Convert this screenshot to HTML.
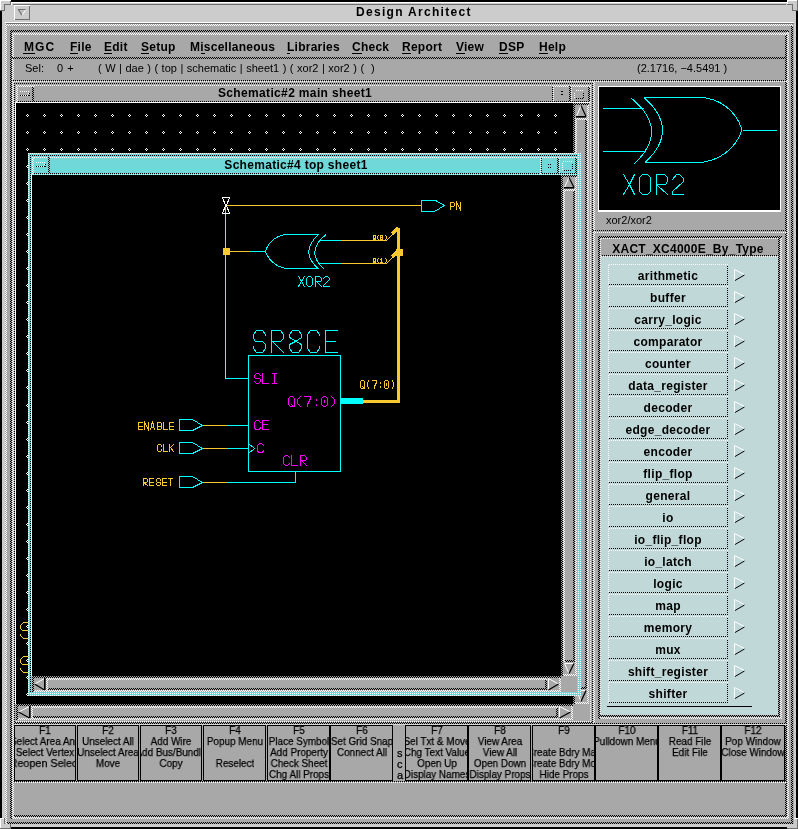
<!DOCTYPE html>
<html><head><meta charset="utf-8"><style>
html,body{margin:0;padding:0;background:#000;width:798px;height:829px;overflow:hidden}
body>div,body>span,body>svg{position:absolute;display:block}
span{font-family:"Liberation Sans",sans-serif;white-space:pre;will-change:transform}
svg{overflow:visible}
</style></head><body>
<div style="left:2px;top:2px;width:794px;height:825px;background:#cccccc;"></div>
<div style="left:11px;top:2px;width:776px;height:1px;background:#ffffff;"></div>
<div style="left:11px;top:2px;width:1px;height:3px;background:#ffffff;"></div>
<div style="left:13px;top:4px;width:773px;height:1px;background:#6e6e6e;"></div>
<div style="left:5px;top:22px;width:789px;height:1px;background:#ffffff;"></div>
<div style="left:6px;top:23px;width:788px;height:1px;background:#6e6e6e;"></div>
<div style="left:0px;top:0px;width:11px;height:11px;background:#cccccc;"></div>
<div style="left:0px;top:0px;width:11px;height:1px;background:#ffffff;"></div>
<div style="left:0px;top:0px;width:1px;height:11px;background:#ffffff;"></div>
<div style="left:11px;top:0px;width:0px;height:0px;background:#000000;"></div>
<div style="left:5px;top:5px;width:6px;height:6px;background:#cccccc;"></div>
<div style="left:10px;top:1px;width:1px;height:4px;background:#6e6e6e;"></div>
<div style="left:4px;top:4px;width:7px;height:1px;background:#6e6e6e;"></div>
<div style="left:4px;top:4px;width:1px;height:7px;background:#6e6e6e;"></div>
<div style="left:0px;top:10px;width:5px;height:1px;background:#6e6e6e;"></div>
<div style="left:787px;top:0px;width:11px;height:11px;background:#cccccc;"></div>
<div style="left:787px;top:0px;width:11px;height:1px;background:#ffffff;"></div>
<div style="left:787px;top:0px;width:1px;height:5px;background:#ffffff;"></div>
<div style="left:797px;top:0px;width:1px;height:11px;background:#6e6e6e;"></div>
<div style="left:792px;top:10px;width:6px;height:1px;background:#6e6e6e;"></div>
<div style="left:792px;top:4px;width:1px;height:7px;background:#6e6e6e;"></div>
<div style="left:787px;top:4px;width:6px;height:1px;background:#6e6e6e;"></div>
<div style="left:0px;top:818px;width:11px;height:11px;background:#cccccc;"></div>
<div style="left:0px;top:818px;width:1px;height:11px;background:#ffffff;"></div>
<div style="left:0px;top:818px;width:5px;height:1px;background:#ffffff;"></div>
<div style="left:0px;top:828px;width:11px;height:1px;background:#6e6e6e;"></div>
<div style="left:10px;top:823px;width:1px;height:6px;background:#6e6e6e;"></div>
<div style="left:4px;top:818px;width:1px;height:6px;background:#6e6e6e;"></div>
<div style="left:4px;top:823px;width:7px;height:1px;background:#6e6e6e;"></div>
<div style="left:787px;top:818px;width:11px;height:11px;background:#cccccc;"></div>
<div style="left:787px;top:828px;width:11px;height:1px;background:#6e6e6e;"></div>
<div style="left:797px;top:818px;width:1px;height:11px;background:#6e6e6e;"></div>
<div style="left:787px;top:818px;width:1px;height:6px;background:#ffffff;"></div>
<div style="left:787px;top:823px;width:6px;height:1px;background:#ffffff;"></div>
<div style="left:792px;top:818px;width:6px;height:1px;background:#ffffff;"></div>
<div style="left:14px;top:5px;width:16px;height:15px;background:#cccccc;"></div>
<div style="left:14px;top:5px;width:16px;height:1px;background:#ffffff;"></div>
<div style="left:14px;top:5px;width:1px;height:15px;background:#ffffff;"></div>
<div style="left:15px;top:19px;width:15px;height:1px;background:#6e6e6e;"></div>
<div style="left:29px;top:6px;width:1px;height:14px;background:#6e6e6e;"></div>
<svg style="left:0;top:0" width="798" height="829"><path d="M18.5 9.5H25.5L22 15.5Z" fill="#c0c0c0" stroke="none"/><path d="M22 15.5L18.5 9.5H25.5" fill="none" stroke="#6e6e6e" stroke-width="1.2"/><path d="M25.5 10L22 15.5" fill="none" stroke="#fff" stroke-width="1"/></svg>
<span style="left:356px;top:6px;font-size:12px;font-weight:bold;color:#000;line-height:12px;letter-spacing:1.3px">Design Architect</span>
<div style="left:5px;top:24px;width:789px;height:800px;background:#a8a8a8;"></div>
<div style="left:5px;top:822px;width:788px;height:2px;background:repeating-conic-gradient(#000000 0 25%,transparent 0 50%) -1px 0px/2px 2px"></div>
<div style="left:791px;top:24px;width:2px;height:800px;background:repeating-conic-gradient(#000000 0 25%,transparent 0 50%) -1px 0px/2px 2px"></div>
<div style="left:5px;top:24px;width:788px;height:2px;background:repeating-conic-gradient(#ffffff 0 25%,transparent 0 50%) -1px 0px/2px 2px"></div>
<div style="left:5px;top:24px;width:2px;height:800px;background:repeating-conic-gradient(#ffffff 0 25%,transparent 0 50%) -1px 0px/2px 2px"></div>
<div style="left:10px;top:817px;width:779px;height:2px;background:repeating-conic-gradient(#ffffff 0 25%,transparent 0 50%) 0px -1px/2px 2px"></div>
<div style="left:787px;top:30px;width:2px;height:789px;background:repeating-conic-gradient(#ffffff 0 25%,transparent 0 50%) -1px 0px/2px 2px"></div>
<div style="left:10px;top:30px;width:779px;height:2px;background:repeating-conic-gradient(#000000 0 25%,transparent 0 50%) 0px 0px/2px 2px"></div>
<div style="left:10px;top:30px;width:2px;height:789px;background:repeating-conic-gradient(#000000 0 25%,transparent 0 50%) 0px 0px/2px 2px"></div>
<div style="left:12px;top:815px;width:775px;height:2px;background:repeating-conic-gradient(#000000 0 25%,transparent 0 50%) 0px -1px/2px 2px"></div>
<div style="left:785px;top:33px;width:2px;height:784px;background:repeating-conic-gradient(#000000 0 25%,transparent 0 50%) -1px -1px/2px 2px"></div>
<div style="left:12px;top:33px;width:775px;height:2px;background:repeating-conic-gradient(#ffffff 0 25%,transparent 0 50%) 0px -1px/2px 2px"></div>
<div style="left:12px;top:33px;width:2px;height:784px;background:repeating-conic-gradient(#ffffff 0 25%,transparent 0 50%) 0px -1px/2px 2px"></div>
<div style="left:12px;top:57px;width:775px;height:2px;background:repeating-conic-gradient(#000000 0 25%,transparent 0 50%) 0px -1px/2px 2px"></div>
<span style="left:24px;top:41px;font-size:12px;font-weight:bold;color:#000;line-height:12px;letter-spacing:1.1px">MGC</span>
<div style="left:23px;top:53px;width:12px;height:1px;background:#000;"></div>
<span style="left:70px;top:41px;font-size:12px;font-weight:bold;color:#000;line-height:12px;letter-spacing:0.25px">File</span>
<div style="left:70px;top:53px;width:8px;height:1px;background:#000;"></div>
<span style="left:104px;top:41px;font-size:12px;font-weight:bold;color:#000;line-height:12px;letter-spacing:0.25px">Edit</span>
<div style="left:104px;top:53px;width:8px;height:1px;background:#000;"></div>
<span style="left:141px;top:41px;font-size:12px;font-weight:bold;color:#000;line-height:12px;letter-spacing:0.25px">Setup</span>
<div style="left:141px;top:53px;width:8px;height:1px;background:#000;"></div>
<span style="left:190px;top:41px;font-size:12px;font-weight:bold;color:#000;line-height:12px;letter-spacing:0.25px">Miscellaneous</span>
<div style="left:201px;top:53px;width:4px;height:1px;background:#000;"></div>
<span style="left:287px;top:41px;font-size:12px;font-weight:bold;color:#000;line-height:12px;letter-spacing:0.25px">Libraries</span>
<div style="left:287px;top:53px;width:3px;height:1px;background:#000;"></div>
<span style="left:352px;top:41px;font-size:12px;font-weight:bold;color:#000;line-height:12px;letter-spacing:0.25px">Check</span>
<div style="left:352px;top:53px;width:10px;height:1px;background:#000;"></div>
<span style="left:402px;top:41px;font-size:12px;font-weight:bold;color:#000;line-height:12px;letter-spacing:0.25px">Report</span>
<div style="left:402px;top:53px;width:9px;height:1px;background:#000;"></div>
<span style="left:456px;top:41px;font-size:12px;font-weight:bold;color:#000;line-height:12px;letter-spacing:0.25px">View</span>
<div style="left:456px;top:53px;width:9px;height:1px;background:#000;"></div>
<span style="left:499px;top:41px;font-size:12px;font-weight:bold;color:#000;line-height:12px;letter-spacing:0.25px">DSP</span>
<div style="left:499px;top:53px;width:9px;height:1px;background:#000;"></div>
<span style="left:539px;top:41px;font-size:12px;font-weight:bold;color:#000;line-height:12px;letter-spacing:0.25px">Help</span>
<div style="left:539px;top:53px;width:9px;height:1px;background:#000;"></div>
<span style="left:25px;top:63px;font-size:11px;font-weight:normal;color:#000;line-height:11px;">Sel:</span>
<span style="left:57px;top:63px;font-size:11px;font-weight:normal;color:#000;line-height:11px;word-spacing:1px">0 +</span>
<span style="left:98px;top:63px;font-size:11px;font-weight:normal;color:#000;line-height:11px;word-spacing:0.45px">( W | dae ) ( top | schematic | sheet1 ) ( xor2 | xor2 ) (  )</span>
<span style="left:637px;top:63px;font-size:11px;font-weight:normal;color:#000;line-height:11px;">(2.1716, &#8722;4.5491 )</span>
<div style="left:12px;top:80px;width:775px;height:1px;background:repeating-conic-gradient(#000000 0 25%,transparent 0 50%) 0px 0px/2px 2px"></div>
<div style="left:12px;top:81px;width:775px;height:1px;background:repeating-conic-gradient(#ffffff 0 25%,transparent 0 50%) 0px -1px/2px 2px"></div>
<div style="left:14px;top:83px;width:579px;height:1px;background:repeating-conic-gradient(#000000 0 25%,transparent 0 50%) 0px -1px/2px 2px"></div>
<div style="left:14px;top:723px;width:579px;height:1px;background:repeating-conic-gradient(#000000 0 25%,transparent 0 50%) 0px -1px/2px 2px"></div>
<div style="left:14px;top:83px;width:1px;height:641px;background:repeating-conic-gradient(#000000 0 25%,transparent 0 50%) 0px -1px/2px 2px"></div>
<div style="left:592px;top:83px;width:1px;height:641px;background:repeating-conic-gradient(#000000 0 25%,transparent 0 50%) 0px -1px/2px 2px"></div>
<div style="left:14px;top:722px;width:579px;height:1px;background:repeating-conic-gradient(#000000 0 25%,transparent 0 50%) 0px 0px/2px 2px"></div>
<div style="left:16px;top:85px;width:575px;height:1px;background:repeating-conic-gradient(#ffffff 0 25%,transparent 0 50%) 0px -1px/2px 2px"></div>
<div style="left:16px;top:721px;width:575px;height:1px;background:repeating-conic-gradient(#ffffff 0 25%,transparent 0 50%) 0px -1px/2px 2px"></div>
<div style="left:16px;top:85px;width:1px;height:637px;background:repeating-conic-gradient(#ffffff 0 25%,transparent 0 50%) 0px -1px/2px 2px"></div>
<div style="left:590px;top:85px;width:1px;height:637px;background:repeating-conic-gradient(#ffffff 0 25%,transparent 0 50%) 0px -1px/2px 2px"></div>
<div style="left:17px;top:101px;width:17px;height:1px;background:repeating-conic-gradient(#000000 0 25%,transparent 0 50%) -1px -1px/2px 2px"></div>
<div style="left:33px;top:86px;width:1px;height:16px;background:repeating-conic-gradient(#000000 0 25%,transparent 0 50%) -1px 0px/2px 2px"></div>
<div style="left:17px;top:86px;width:17px;height:1px;background:repeating-conic-gradient(#ffffff 0 25%,transparent 0 50%) -1px 0px/2px 2px"></div>
<div style="left:17px;top:86px;width:1px;height:16px;background:repeating-conic-gradient(#ffffff 0 25%,transparent 0 50%) -1px 0px/2px 2px"></div>
<div style="left:32px;top:86px;width:1px;height:16px;background:repeating-conic-gradient(#000000 0 25%,transparent 0 50%) 0px 0px/2px 2px"></div>
<svg style="left:0;top:0" width="798" height="829" shape-rendering="crispEdges"><path d="M19.5 91.5h9v4h-9" fill="none" stroke="#fff" stroke-dasharray="1 1"/><path d="M19.5 95.5h10v-4" fill="none" stroke="#000" stroke-dasharray="1 1"/></svg>
<div style="left:17px;top:101px;width:573px;height:1px;background:repeating-conic-gradient(#000000 0 25%,transparent 0 50%) -1px -1px/2px 2px"></div>
<span style="left:144.5px;top:87px;width:300px;text-align:center;font-size:12px;font-weight:bold;color:#000;line-height:12px;letter-spacing:0.35px">Schematic#2 main sheet1</span>
<div style="left:553px;top:101px;width:18px;height:1px;background:repeating-conic-gradient(#000000 0 25%,transparent 0 50%) -1px -1px/2px 2px"></div>
<div style="left:570px;top:86px;width:1px;height:16px;background:repeating-conic-gradient(#000000 0 25%,transparent 0 50%) 0px 0px/2px 2px"></div>
<div style="left:553px;top:86px;width:18px;height:1px;background:repeating-conic-gradient(#ffffff 0 25%,transparent 0 50%) -1px 0px/2px 2px"></div>
<div style="left:553px;top:86px;width:1px;height:16px;background:repeating-conic-gradient(#ffffff 0 25%,transparent 0 50%) -1px 0px/2px 2px"></div>
<div style="left:569px;top:86px;width:1px;height:16px;background:repeating-conic-gradient(#000000 0 25%,transparent 0 50%) -1px 0px/2px 2px"></div>
<div style="left:552px;top:86px;width:1px;height:16px;background:repeating-conic-gradient(#000000 0 25%,transparent 0 50%) 0px 0px/2px 2px"></div>
<svg style="left:0;top:0" width="798" height="829" shape-rendering="crispEdges"><path d="M561.5 90.5v1M561.5 93.5v1M562.5 90.5v1M562.5 93.5v1" stroke="#000" fill="none"/></svg>
<div style="left:571px;top:101px;width:19px;height:1px;background:repeating-conic-gradient(#000000 0 25%,transparent 0 50%) -1px -1px/2px 2px"></div>
<div style="left:589px;top:86px;width:1px;height:16px;background:repeating-conic-gradient(#000000 0 25%,transparent 0 50%) -1px 0px/2px 2px"></div>
<div style="left:571px;top:86px;width:19px;height:1px;background:repeating-conic-gradient(#ffffff 0 25%,transparent 0 50%) -1px 0px/2px 2px"></div>
<div style="left:571px;top:86px;width:1px;height:16px;background:repeating-conic-gradient(#ffffff 0 25%,transparent 0 50%) -1px 0px/2px 2px"></div>
<div style="left:588px;top:86px;width:1px;height:16px;background:repeating-conic-gradient(#000000 0 25%,transparent 0 50%) 0px 0px/2px 2px"></div>
<svg style="left:0;top:0" width="798" height="829" shape-rendering="crispEdges"><path d="M574.5 97.5v-6l1-1h7" fill="none" stroke="#fff" stroke-dasharray="1 1"/><path d="M575.5 98.5h7l1-1v-6" fill="none" stroke="#000" stroke-dasharray="1 1"/></svg>
<div style="left:15px;top:102px;width:575px;height:1px;background:#ffffff;"></div>
<div style="left:15px;top:102px;width:1px;height:602px;background:#ffffff;"></div>
<div style="left:16px;top:103px;width:557px;height:601px;background:#000000;"></div>
<svg style="left:0;top:0" width="798" height="829" shape-rendering="crispEdges"><path d="M26 115h1v1h-1zM28 115h1v1h-1zM27 114h1v1h-1zM27 116h1v1h-1zM43 115h1v1h-1zM45 115h1v1h-1zM44 114h1v1h-1zM44 116h1v1h-1zM60 115h1v1h-1zM62 115h1v1h-1zM61 114h1v1h-1zM61 116h1v1h-1zM77 115h1v1h-1zM79 115h1v1h-1zM78 114h1v1h-1zM78 116h1v1h-1zM94 115h1v1h-1zM96 115h1v1h-1zM95 114h1v1h-1zM95 116h1v1h-1zM111 115h1v1h-1zM113 115h1v1h-1zM112 114h1v1h-1zM112 116h1v1h-1zM128 115h1v1h-1zM130 115h1v1h-1zM129 114h1v1h-1zM129 116h1v1h-1zM145 115h1v1h-1zM147 115h1v1h-1zM146 114h1v1h-1zM146 116h1v1h-1zM162 115h1v1h-1zM164 115h1v1h-1zM163 114h1v1h-1zM163 116h1v1h-1zM179 115h1v1h-1zM181 115h1v1h-1zM180 114h1v1h-1zM180 116h1v1h-1zM196 115h1v1h-1zM198 115h1v1h-1zM197 114h1v1h-1zM197 116h1v1h-1zM213 115h1v1h-1zM215 115h1v1h-1zM214 114h1v1h-1zM214 116h1v1h-1zM230 115h1v1h-1zM232 115h1v1h-1zM231 114h1v1h-1zM231 116h1v1h-1zM248 115h1v1h-1zM250 115h1v1h-1zM249 114h1v1h-1zM249 116h1v1h-1zM265 115h1v1h-1zM267 115h1v1h-1zM266 114h1v1h-1zM266 116h1v1h-1zM282 115h1v1h-1zM284 115h1v1h-1zM283 114h1v1h-1zM283 116h1v1h-1zM299 115h1v1h-1zM301 115h1v1h-1zM300 114h1v1h-1zM300 116h1v1h-1zM316 115h1v1h-1zM318 115h1v1h-1zM317 114h1v1h-1zM317 116h1v1h-1zM333 115h1v1h-1zM335 115h1v1h-1zM334 114h1v1h-1zM334 116h1v1h-1zM350 115h1v1h-1zM352 115h1v1h-1zM351 114h1v1h-1zM351 116h1v1h-1zM367 115h1v1h-1zM369 115h1v1h-1zM368 114h1v1h-1zM368 116h1v1h-1zM384 115h1v1h-1zM386 115h1v1h-1zM385 114h1v1h-1zM385 116h1v1h-1zM401 115h1v1h-1zM403 115h1v1h-1zM402 114h1v1h-1zM402 116h1v1h-1zM418 115h1v1h-1zM420 115h1v1h-1zM419 114h1v1h-1zM419 116h1v1h-1zM435 115h1v1h-1zM437 115h1v1h-1zM436 114h1v1h-1zM436 116h1v1h-1zM452 115h1v1h-1zM454 115h1v1h-1zM453 114h1v1h-1zM453 116h1v1h-1zM469 115h1v1h-1zM471 115h1v1h-1zM470 114h1v1h-1zM470 116h1v1h-1zM486 115h1v1h-1zM488 115h1v1h-1zM487 114h1v1h-1zM487 116h1v1h-1zM503 115h1v1h-1zM505 115h1v1h-1zM504 114h1v1h-1zM504 116h1v1h-1zM520 115h1v1h-1zM522 115h1v1h-1zM521 114h1v1h-1zM521 116h1v1h-1zM537 115h1v1h-1zM539 115h1v1h-1zM538 114h1v1h-1zM538 116h1v1h-1zM554 115h1v1h-1zM556 115h1v1h-1zM555 114h1v1h-1zM555 116h1v1h-1zM26 132h1v1h-1zM28 132h1v1h-1zM27 131h1v1h-1zM27 133h1v1h-1zM43 132h1v1h-1zM45 132h1v1h-1zM44 131h1v1h-1zM44 133h1v1h-1zM60 132h1v1h-1zM62 132h1v1h-1zM61 131h1v1h-1zM61 133h1v1h-1zM77 132h1v1h-1zM79 132h1v1h-1zM78 131h1v1h-1zM78 133h1v1h-1zM94 132h1v1h-1zM96 132h1v1h-1zM95 131h1v1h-1zM95 133h1v1h-1zM111 132h1v1h-1zM113 132h1v1h-1zM112 131h1v1h-1zM112 133h1v1h-1zM128 132h1v1h-1zM130 132h1v1h-1zM129 131h1v1h-1zM129 133h1v1h-1zM145 132h1v1h-1zM147 132h1v1h-1zM146 131h1v1h-1zM146 133h1v1h-1zM162 132h1v1h-1zM164 132h1v1h-1zM163 131h1v1h-1zM163 133h1v1h-1zM179 132h1v1h-1zM181 132h1v1h-1zM180 131h1v1h-1zM180 133h1v1h-1zM196 132h1v1h-1zM198 132h1v1h-1zM197 131h1v1h-1zM197 133h1v1h-1zM213 132h1v1h-1zM215 132h1v1h-1zM214 131h1v1h-1zM214 133h1v1h-1zM230 132h1v1h-1zM232 132h1v1h-1zM231 131h1v1h-1zM231 133h1v1h-1zM248 132h1v1h-1zM250 132h1v1h-1zM249 131h1v1h-1zM249 133h1v1h-1zM265 132h1v1h-1zM267 132h1v1h-1zM266 131h1v1h-1zM266 133h1v1h-1zM282 132h1v1h-1zM284 132h1v1h-1zM283 131h1v1h-1zM283 133h1v1h-1zM299 132h1v1h-1zM301 132h1v1h-1zM300 131h1v1h-1zM300 133h1v1h-1zM316 132h1v1h-1zM318 132h1v1h-1zM317 131h1v1h-1zM317 133h1v1h-1zM333 132h1v1h-1zM335 132h1v1h-1zM334 131h1v1h-1zM334 133h1v1h-1zM350 132h1v1h-1zM352 132h1v1h-1zM351 131h1v1h-1zM351 133h1v1h-1zM367 132h1v1h-1zM369 132h1v1h-1zM368 131h1v1h-1zM368 133h1v1h-1zM384 132h1v1h-1zM386 132h1v1h-1zM385 131h1v1h-1zM385 133h1v1h-1zM401 132h1v1h-1zM403 132h1v1h-1zM402 131h1v1h-1zM402 133h1v1h-1zM418 132h1v1h-1zM420 132h1v1h-1zM419 131h1v1h-1zM419 133h1v1h-1zM435 132h1v1h-1zM437 132h1v1h-1zM436 131h1v1h-1zM436 133h1v1h-1zM452 132h1v1h-1zM454 132h1v1h-1zM453 131h1v1h-1zM453 133h1v1h-1zM469 132h1v1h-1zM471 132h1v1h-1zM470 131h1v1h-1zM470 133h1v1h-1zM486 132h1v1h-1zM488 132h1v1h-1zM487 131h1v1h-1zM487 133h1v1h-1zM503 132h1v1h-1zM505 132h1v1h-1zM504 131h1v1h-1zM504 133h1v1h-1zM520 132h1v1h-1zM522 132h1v1h-1zM521 131h1v1h-1zM521 133h1v1h-1zM537 132h1v1h-1zM539 132h1v1h-1zM538 131h1v1h-1zM538 133h1v1h-1zM554 132h1v1h-1zM556 132h1v1h-1zM555 131h1v1h-1zM555 133h1v1h-1zM26 149h1v1h-1zM28 149h1v1h-1zM27 148h1v1h-1zM27 150h1v1h-1zM43 149h1v1h-1zM45 149h1v1h-1zM44 148h1v1h-1zM44 150h1v1h-1zM60 149h1v1h-1zM62 149h1v1h-1zM61 148h1v1h-1zM61 150h1v1h-1zM77 149h1v1h-1zM79 149h1v1h-1zM78 148h1v1h-1zM78 150h1v1h-1zM94 149h1v1h-1zM96 149h1v1h-1zM95 148h1v1h-1zM95 150h1v1h-1zM111 149h1v1h-1zM113 149h1v1h-1zM112 148h1v1h-1zM112 150h1v1h-1zM128 149h1v1h-1zM130 149h1v1h-1zM129 148h1v1h-1zM129 150h1v1h-1zM145 149h1v1h-1zM147 149h1v1h-1zM146 148h1v1h-1zM146 150h1v1h-1zM162 149h1v1h-1zM164 149h1v1h-1zM163 148h1v1h-1zM163 150h1v1h-1zM179 149h1v1h-1zM181 149h1v1h-1zM180 148h1v1h-1zM180 150h1v1h-1zM196 149h1v1h-1zM198 149h1v1h-1zM197 148h1v1h-1zM197 150h1v1h-1zM213 149h1v1h-1zM215 149h1v1h-1zM214 148h1v1h-1zM214 150h1v1h-1zM230 149h1v1h-1zM232 149h1v1h-1zM231 148h1v1h-1zM231 150h1v1h-1zM248 149h1v1h-1zM250 149h1v1h-1zM249 148h1v1h-1zM249 150h1v1h-1zM265 149h1v1h-1zM267 149h1v1h-1zM266 148h1v1h-1zM266 150h1v1h-1zM282 149h1v1h-1zM284 149h1v1h-1zM283 148h1v1h-1zM283 150h1v1h-1zM299 149h1v1h-1zM301 149h1v1h-1zM300 148h1v1h-1zM300 150h1v1h-1zM316 149h1v1h-1zM318 149h1v1h-1zM317 148h1v1h-1zM317 150h1v1h-1zM333 149h1v1h-1zM335 149h1v1h-1zM334 148h1v1h-1zM334 150h1v1h-1zM350 149h1v1h-1zM352 149h1v1h-1zM351 148h1v1h-1zM351 150h1v1h-1zM367 149h1v1h-1zM369 149h1v1h-1zM368 148h1v1h-1zM368 150h1v1h-1zM384 149h1v1h-1zM386 149h1v1h-1zM385 148h1v1h-1zM385 150h1v1h-1zM401 149h1v1h-1zM403 149h1v1h-1zM402 148h1v1h-1zM402 150h1v1h-1zM418 149h1v1h-1zM420 149h1v1h-1zM419 148h1v1h-1zM419 150h1v1h-1zM435 149h1v1h-1zM437 149h1v1h-1zM436 148h1v1h-1zM436 150h1v1h-1zM452 149h1v1h-1zM454 149h1v1h-1zM453 148h1v1h-1zM453 150h1v1h-1zM469 149h1v1h-1zM471 149h1v1h-1zM470 148h1v1h-1zM470 150h1v1h-1zM486 149h1v1h-1zM488 149h1v1h-1zM487 148h1v1h-1zM487 150h1v1h-1zM503 149h1v1h-1zM505 149h1v1h-1zM504 148h1v1h-1zM504 150h1v1h-1zM520 149h1v1h-1zM522 149h1v1h-1zM521 148h1v1h-1zM521 150h1v1h-1zM537 149h1v1h-1zM539 149h1v1h-1zM538 148h1v1h-1zM538 150h1v1h-1zM554 149h1v1h-1zM556 149h1v1h-1zM555 148h1v1h-1zM555 150h1v1h-1zM26 166h1v1h-1zM28 166h1v1h-1zM27 165h1v1h-1zM27 167h1v1h-1zM43 166h1v1h-1zM45 166h1v1h-1zM44 165h1v1h-1zM44 167h1v1h-1zM60 166h1v1h-1zM62 166h1v1h-1zM61 165h1v1h-1zM61 167h1v1h-1zM77 166h1v1h-1zM79 166h1v1h-1zM78 165h1v1h-1zM78 167h1v1h-1zM94 166h1v1h-1zM96 166h1v1h-1zM95 165h1v1h-1zM95 167h1v1h-1zM111 166h1v1h-1zM113 166h1v1h-1zM112 165h1v1h-1zM112 167h1v1h-1zM128 166h1v1h-1zM130 166h1v1h-1zM129 165h1v1h-1zM129 167h1v1h-1zM145 166h1v1h-1zM147 166h1v1h-1zM146 165h1v1h-1zM146 167h1v1h-1zM162 166h1v1h-1zM164 166h1v1h-1zM163 165h1v1h-1zM163 167h1v1h-1zM179 166h1v1h-1zM181 166h1v1h-1zM180 165h1v1h-1zM180 167h1v1h-1zM196 166h1v1h-1zM198 166h1v1h-1zM197 165h1v1h-1zM197 167h1v1h-1zM213 166h1v1h-1zM215 166h1v1h-1zM214 165h1v1h-1zM214 167h1v1h-1zM230 166h1v1h-1zM232 166h1v1h-1zM231 165h1v1h-1zM231 167h1v1h-1zM248 166h1v1h-1zM250 166h1v1h-1zM249 165h1v1h-1zM249 167h1v1h-1zM265 166h1v1h-1zM267 166h1v1h-1zM266 165h1v1h-1zM266 167h1v1h-1zM282 166h1v1h-1zM284 166h1v1h-1zM283 165h1v1h-1zM283 167h1v1h-1zM299 166h1v1h-1zM301 166h1v1h-1zM300 165h1v1h-1zM300 167h1v1h-1zM316 166h1v1h-1zM318 166h1v1h-1zM317 165h1v1h-1zM317 167h1v1h-1zM333 166h1v1h-1zM335 166h1v1h-1zM334 165h1v1h-1zM334 167h1v1h-1zM350 166h1v1h-1zM352 166h1v1h-1zM351 165h1v1h-1zM351 167h1v1h-1zM367 166h1v1h-1zM369 166h1v1h-1zM368 165h1v1h-1zM368 167h1v1h-1zM384 166h1v1h-1zM386 166h1v1h-1zM385 165h1v1h-1zM385 167h1v1h-1zM401 166h1v1h-1zM403 166h1v1h-1zM402 165h1v1h-1zM402 167h1v1h-1zM418 166h1v1h-1zM420 166h1v1h-1zM419 165h1v1h-1zM419 167h1v1h-1zM435 166h1v1h-1zM437 166h1v1h-1zM436 165h1v1h-1zM436 167h1v1h-1zM452 166h1v1h-1zM454 166h1v1h-1zM453 165h1v1h-1zM453 167h1v1h-1zM469 166h1v1h-1zM471 166h1v1h-1zM470 165h1v1h-1zM470 167h1v1h-1zM486 166h1v1h-1zM488 166h1v1h-1zM487 165h1v1h-1zM487 167h1v1h-1zM503 166h1v1h-1zM505 166h1v1h-1zM504 165h1v1h-1zM504 167h1v1h-1zM520 166h1v1h-1zM522 166h1v1h-1zM521 165h1v1h-1zM521 167h1v1h-1zM537 166h1v1h-1zM539 166h1v1h-1zM538 165h1v1h-1zM538 167h1v1h-1zM554 166h1v1h-1zM556 166h1v1h-1zM555 165h1v1h-1zM555 167h1v1h-1zM26 183h1v1h-1zM28 183h1v1h-1zM27 182h1v1h-1zM27 184h1v1h-1zM43 183h1v1h-1zM45 183h1v1h-1zM44 182h1v1h-1zM44 184h1v1h-1zM60 183h1v1h-1zM62 183h1v1h-1zM61 182h1v1h-1zM61 184h1v1h-1zM77 183h1v1h-1zM79 183h1v1h-1zM78 182h1v1h-1zM78 184h1v1h-1zM94 183h1v1h-1zM96 183h1v1h-1zM95 182h1v1h-1zM95 184h1v1h-1zM111 183h1v1h-1zM113 183h1v1h-1zM112 182h1v1h-1zM112 184h1v1h-1zM128 183h1v1h-1zM130 183h1v1h-1zM129 182h1v1h-1zM129 184h1v1h-1zM145 183h1v1h-1zM147 183h1v1h-1zM146 182h1v1h-1zM146 184h1v1h-1zM162 183h1v1h-1zM164 183h1v1h-1zM163 182h1v1h-1zM163 184h1v1h-1zM179 183h1v1h-1zM181 183h1v1h-1zM180 182h1v1h-1zM180 184h1v1h-1zM196 183h1v1h-1zM198 183h1v1h-1zM197 182h1v1h-1zM197 184h1v1h-1zM213 183h1v1h-1zM215 183h1v1h-1zM214 182h1v1h-1zM214 184h1v1h-1zM230 183h1v1h-1zM232 183h1v1h-1zM231 182h1v1h-1zM231 184h1v1h-1zM248 183h1v1h-1zM250 183h1v1h-1zM249 182h1v1h-1zM249 184h1v1h-1zM265 183h1v1h-1zM267 183h1v1h-1zM266 182h1v1h-1zM266 184h1v1h-1zM282 183h1v1h-1zM284 183h1v1h-1zM283 182h1v1h-1zM283 184h1v1h-1zM299 183h1v1h-1zM301 183h1v1h-1zM300 182h1v1h-1zM300 184h1v1h-1zM316 183h1v1h-1zM318 183h1v1h-1zM317 182h1v1h-1zM317 184h1v1h-1zM333 183h1v1h-1zM335 183h1v1h-1zM334 182h1v1h-1zM334 184h1v1h-1zM350 183h1v1h-1zM352 183h1v1h-1zM351 182h1v1h-1zM351 184h1v1h-1zM367 183h1v1h-1zM369 183h1v1h-1zM368 182h1v1h-1zM368 184h1v1h-1zM384 183h1v1h-1zM386 183h1v1h-1zM385 182h1v1h-1zM385 184h1v1h-1zM401 183h1v1h-1zM403 183h1v1h-1zM402 182h1v1h-1zM402 184h1v1h-1zM418 183h1v1h-1zM420 183h1v1h-1zM419 182h1v1h-1zM419 184h1v1h-1zM435 183h1v1h-1zM437 183h1v1h-1zM436 182h1v1h-1zM436 184h1v1h-1zM452 183h1v1h-1zM454 183h1v1h-1zM453 182h1v1h-1zM453 184h1v1h-1zM469 183h1v1h-1zM471 183h1v1h-1zM470 182h1v1h-1zM470 184h1v1h-1zM486 183h1v1h-1zM488 183h1v1h-1zM487 182h1v1h-1zM487 184h1v1h-1zM503 183h1v1h-1zM505 183h1v1h-1zM504 182h1v1h-1zM504 184h1v1h-1zM520 183h1v1h-1zM522 183h1v1h-1zM521 182h1v1h-1zM521 184h1v1h-1zM537 183h1v1h-1zM539 183h1v1h-1zM538 182h1v1h-1zM538 184h1v1h-1zM554 183h1v1h-1zM556 183h1v1h-1zM555 182h1v1h-1zM555 184h1v1h-1zM26 200h1v1h-1zM28 200h1v1h-1zM27 199h1v1h-1zM27 201h1v1h-1zM43 200h1v1h-1zM45 200h1v1h-1zM44 199h1v1h-1zM44 201h1v1h-1zM60 200h1v1h-1zM62 200h1v1h-1zM61 199h1v1h-1zM61 201h1v1h-1zM77 200h1v1h-1zM79 200h1v1h-1zM78 199h1v1h-1zM78 201h1v1h-1zM94 200h1v1h-1zM96 200h1v1h-1zM95 199h1v1h-1zM95 201h1v1h-1zM111 200h1v1h-1zM113 200h1v1h-1zM112 199h1v1h-1zM112 201h1v1h-1zM128 200h1v1h-1zM130 200h1v1h-1zM129 199h1v1h-1zM129 201h1v1h-1zM145 200h1v1h-1zM147 200h1v1h-1zM146 199h1v1h-1zM146 201h1v1h-1zM162 200h1v1h-1zM164 200h1v1h-1zM163 199h1v1h-1zM163 201h1v1h-1zM179 200h1v1h-1zM181 200h1v1h-1zM180 199h1v1h-1zM180 201h1v1h-1zM196 200h1v1h-1zM198 200h1v1h-1zM197 199h1v1h-1zM197 201h1v1h-1zM213 200h1v1h-1zM215 200h1v1h-1zM214 199h1v1h-1zM214 201h1v1h-1zM230 200h1v1h-1zM232 200h1v1h-1zM231 199h1v1h-1zM231 201h1v1h-1zM248 200h1v1h-1zM250 200h1v1h-1zM249 199h1v1h-1zM249 201h1v1h-1zM265 200h1v1h-1zM267 200h1v1h-1zM266 199h1v1h-1zM266 201h1v1h-1zM282 200h1v1h-1zM284 200h1v1h-1zM283 199h1v1h-1zM283 201h1v1h-1zM299 200h1v1h-1zM301 200h1v1h-1zM300 199h1v1h-1zM300 201h1v1h-1zM316 200h1v1h-1zM318 200h1v1h-1zM317 199h1v1h-1zM317 201h1v1h-1zM333 200h1v1h-1zM335 200h1v1h-1zM334 199h1v1h-1zM334 201h1v1h-1zM350 200h1v1h-1zM352 200h1v1h-1zM351 199h1v1h-1zM351 201h1v1h-1zM367 200h1v1h-1zM369 200h1v1h-1zM368 199h1v1h-1zM368 201h1v1h-1zM384 200h1v1h-1zM386 200h1v1h-1zM385 199h1v1h-1zM385 201h1v1h-1zM401 200h1v1h-1zM403 200h1v1h-1zM402 199h1v1h-1zM402 201h1v1h-1zM418 200h1v1h-1zM420 200h1v1h-1zM419 199h1v1h-1zM419 201h1v1h-1zM435 200h1v1h-1zM437 200h1v1h-1zM436 199h1v1h-1zM436 201h1v1h-1zM452 200h1v1h-1zM454 200h1v1h-1zM453 199h1v1h-1zM453 201h1v1h-1zM469 200h1v1h-1zM471 200h1v1h-1zM470 199h1v1h-1zM470 201h1v1h-1zM486 200h1v1h-1zM488 200h1v1h-1zM487 199h1v1h-1zM487 201h1v1h-1zM503 200h1v1h-1zM505 200h1v1h-1zM504 199h1v1h-1zM504 201h1v1h-1zM520 200h1v1h-1zM522 200h1v1h-1zM521 199h1v1h-1zM521 201h1v1h-1zM537 200h1v1h-1zM539 200h1v1h-1zM538 199h1v1h-1zM538 201h1v1h-1zM554 200h1v1h-1zM556 200h1v1h-1zM555 199h1v1h-1zM555 201h1v1h-1zM26 217h1v1h-1zM28 217h1v1h-1zM27 216h1v1h-1zM27 218h1v1h-1zM43 217h1v1h-1zM45 217h1v1h-1zM44 216h1v1h-1zM44 218h1v1h-1zM60 217h1v1h-1zM62 217h1v1h-1zM61 216h1v1h-1zM61 218h1v1h-1zM77 217h1v1h-1zM79 217h1v1h-1zM78 216h1v1h-1zM78 218h1v1h-1zM94 217h1v1h-1zM96 217h1v1h-1zM95 216h1v1h-1zM95 218h1v1h-1zM111 217h1v1h-1zM113 217h1v1h-1zM112 216h1v1h-1zM112 218h1v1h-1zM128 217h1v1h-1zM130 217h1v1h-1zM129 216h1v1h-1zM129 218h1v1h-1zM145 217h1v1h-1zM147 217h1v1h-1zM146 216h1v1h-1zM146 218h1v1h-1zM162 217h1v1h-1zM164 217h1v1h-1zM163 216h1v1h-1zM163 218h1v1h-1zM179 217h1v1h-1zM181 217h1v1h-1zM180 216h1v1h-1zM180 218h1v1h-1zM196 217h1v1h-1zM198 217h1v1h-1zM197 216h1v1h-1zM197 218h1v1h-1zM213 217h1v1h-1zM215 217h1v1h-1zM214 216h1v1h-1zM214 218h1v1h-1zM230 217h1v1h-1zM232 217h1v1h-1zM231 216h1v1h-1zM231 218h1v1h-1zM248 217h1v1h-1zM250 217h1v1h-1zM249 216h1v1h-1zM249 218h1v1h-1zM265 217h1v1h-1zM267 217h1v1h-1zM266 216h1v1h-1zM266 218h1v1h-1zM282 217h1v1h-1zM284 217h1v1h-1zM283 216h1v1h-1zM283 218h1v1h-1zM299 217h1v1h-1zM301 217h1v1h-1zM300 216h1v1h-1zM300 218h1v1h-1zM316 217h1v1h-1zM318 217h1v1h-1zM317 216h1v1h-1zM317 218h1v1h-1zM333 217h1v1h-1zM335 217h1v1h-1zM334 216h1v1h-1zM334 218h1v1h-1zM350 217h1v1h-1zM352 217h1v1h-1zM351 216h1v1h-1zM351 218h1v1h-1zM367 217h1v1h-1zM369 217h1v1h-1zM368 216h1v1h-1zM368 218h1v1h-1zM384 217h1v1h-1zM386 217h1v1h-1zM385 216h1v1h-1zM385 218h1v1h-1zM401 217h1v1h-1zM403 217h1v1h-1zM402 216h1v1h-1zM402 218h1v1h-1zM418 217h1v1h-1zM420 217h1v1h-1zM419 216h1v1h-1zM419 218h1v1h-1zM435 217h1v1h-1zM437 217h1v1h-1zM436 216h1v1h-1zM436 218h1v1h-1zM452 217h1v1h-1zM454 217h1v1h-1zM453 216h1v1h-1zM453 218h1v1h-1zM469 217h1v1h-1zM471 217h1v1h-1zM470 216h1v1h-1zM470 218h1v1h-1zM486 217h1v1h-1zM488 217h1v1h-1zM487 216h1v1h-1zM487 218h1v1h-1zM503 217h1v1h-1zM505 217h1v1h-1zM504 216h1v1h-1zM504 218h1v1h-1zM520 217h1v1h-1zM522 217h1v1h-1zM521 216h1v1h-1zM521 218h1v1h-1zM537 217h1v1h-1zM539 217h1v1h-1zM538 216h1v1h-1zM538 218h1v1h-1zM554 217h1v1h-1zM556 217h1v1h-1zM555 216h1v1h-1zM555 218h1v1h-1zM26 234h1v1h-1zM28 234h1v1h-1zM27 233h1v1h-1zM27 235h1v1h-1zM43 234h1v1h-1zM45 234h1v1h-1zM44 233h1v1h-1zM44 235h1v1h-1zM60 234h1v1h-1zM62 234h1v1h-1zM61 233h1v1h-1zM61 235h1v1h-1zM77 234h1v1h-1zM79 234h1v1h-1zM78 233h1v1h-1zM78 235h1v1h-1zM94 234h1v1h-1zM96 234h1v1h-1zM95 233h1v1h-1zM95 235h1v1h-1zM111 234h1v1h-1zM113 234h1v1h-1zM112 233h1v1h-1zM112 235h1v1h-1zM128 234h1v1h-1zM130 234h1v1h-1zM129 233h1v1h-1zM129 235h1v1h-1zM145 234h1v1h-1zM147 234h1v1h-1zM146 233h1v1h-1zM146 235h1v1h-1zM162 234h1v1h-1zM164 234h1v1h-1zM163 233h1v1h-1zM163 235h1v1h-1zM179 234h1v1h-1zM181 234h1v1h-1zM180 233h1v1h-1zM180 235h1v1h-1zM196 234h1v1h-1zM198 234h1v1h-1zM197 233h1v1h-1zM197 235h1v1h-1zM213 234h1v1h-1zM215 234h1v1h-1zM214 233h1v1h-1zM214 235h1v1h-1zM230 234h1v1h-1zM232 234h1v1h-1zM231 233h1v1h-1zM231 235h1v1h-1zM248 234h1v1h-1zM250 234h1v1h-1zM249 233h1v1h-1zM249 235h1v1h-1zM265 234h1v1h-1zM267 234h1v1h-1zM266 233h1v1h-1zM266 235h1v1h-1zM282 234h1v1h-1zM284 234h1v1h-1zM283 233h1v1h-1zM283 235h1v1h-1zM299 234h1v1h-1zM301 234h1v1h-1zM300 233h1v1h-1zM300 235h1v1h-1zM316 234h1v1h-1zM318 234h1v1h-1zM317 233h1v1h-1zM317 235h1v1h-1zM333 234h1v1h-1zM335 234h1v1h-1zM334 233h1v1h-1zM334 235h1v1h-1zM350 234h1v1h-1zM352 234h1v1h-1zM351 233h1v1h-1zM351 235h1v1h-1zM367 234h1v1h-1zM369 234h1v1h-1zM368 233h1v1h-1zM368 235h1v1h-1zM384 234h1v1h-1zM386 234h1v1h-1zM385 233h1v1h-1zM385 235h1v1h-1zM401 234h1v1h-1zM403 234h1v1h-1zM402 233h1v1h-1zM402 235h1v1h-1zM418 234h1v1h-1zM420 234h1v1h-1zM419 233h1v1h-1zM419 235h1v1h-1zM435 234h1v1h-1zM437 234h1v1h-1zM436 233h1v1h-1zM436 235h1v1h-1zM452 234h1v1h-1zM454 234h1v1h-1zM453 233h1v1h-1zM453 235h1v1h-1zM469 234h1v1h-1zM471 234h1v1h-1zM470 233h1v1h-1zM470 235h1v1h-1zM486 234h1v1h-1zM488 234h1v1h-1zM487 233h1v1h-1zM487 235h1v1h-1zM503 234h1v1h-1zM505 234h1v1h-1zM504 233h1v1h-1zM504 235h1v1h-1zM520 234h1v1h-1zM522 234h1v1h-1zM521 233h1v1h-1zM521 235h1v1h-1zM537 234h1v1h-1zM539 234h1v1h-1zM538 233h1v1h-1zM538 235h1v1h-1zM554 234h1v1h-1zM556 234h1v1h-1zM555 233h1v1h-1zM555 235h1v1h-1zM26 251h1v1h-1zM28 251h1v1h-1zM27 250h1v1h-1zM27 252h1v1h-1zM43 251h1v1h-1zM45 251h1v1h-1zM44 250h1v1h-1zM44 252h1v1h-1zM60 251h1v1h-1zM62 251h1v1h-1zM61 250h1v1h-1zM61 252h1v1h-1zM77 251h1v1h-1zM79 251h1v1h-1zM78 250h1v1h-1zM78 252h1v1h-1zM94 251h1v1h-1zM96 251h1v1h-1zM95 250h1v1h-1zM95 252h1v1h-1zM111 251h1v1h-1zM113 251h1v1h-1zM112 250h1v1h-1zM112 252h1v1h-1zM128 251h1v1h-1zM130 251h1v1h-1zM129 250h1v1h-1zM129 252h1v1h-1zM145 251h1v1h-1zM147 251h1v1h-1zM146 250h1v1h-1zM146 252h1v1h-1zM162 251h1v1h-1zM164 251h1v1h-1zM163 250h1v1h-1zM163 252h1v1h-1zM179 251h1v1h-1zM181 251h1v1h-1zM180 250h1v1h-1zM180 252h1v1h-1zM196 251h1v1h-1zM198 251h1v1h-1zM197 250h1v1h-1zM197 252h1v1h-1zM213 251h1v1h-1zM215 251h1v1h-1zM214 250h1v1h-1zM214 252h1v1h-1zM230 251h1v1h-1zM232 251h1v1h-1zM231 250h1v1h-1zM231 252h1v1h-1zM248 251h1v1h-1zM250 251h1v1h-1zM249 250h1v1h-1zM249 252h1v1h-1zM265 251h1v1h-1zM267 251h1v1h-1zM266 250h1v1h-1zM266 252h1v1h-1zM282 251h1v1h-1zM284 251h1v1h-1zM283 250h1v1h-1zM283 252h1v1h-1zM299 251h1v1h-1zM301 251h1v1h-1zM300 250h1v1h-1zM300 252h1v1h-1zM316 251h1v1h-1zM318 251h1v1h-1zM317 250h1v1h-1zM317 252h1v1h-1zM333 251h1v1h-1zM335 251h1v1h-1zM334 250h1v1h-1zM334 252h1v1h-1zM350 251h1v1h-1zM352 251h1v1h-1zM351 250h1v1h-1zM351 252h1v1h-1zM367 251h1v1h-1zM369 251h1v1h-1zM368 250h1v1h-1zM368 252h1v1h-1zM384 251h1v1h-1zM386 251h1v1h-1zM385 250h1v1h-1zM385 252h1v1h-1zM401 251h1v1h-1zM403 251h1v1h-1zM402 250h1v1h-1zM402 252h1v1h-1zM418 251h1v1h-1zM420 251h1v1h-1zM419 250h1v1h-1zM419 252h1v1h-1zM435 251h1v1h-1zM437 251h1v1h-1zM436 250h1v1h-1zM436 252h1v1h-1zM452 251h1v1h-1zM454 251h1v1h-1zM453 250h1v1h-1zM453 252h1v1h-1zM469 251h1v1h-1zM471 251h1v1h-1zM470 250h1v1h-1zM470 252h1v1h-1zM486 251h1v1h-1zM488 251h1v1h-1zM487 250h1v1h-1zM487 252h1v1h-1zM503 251h1v1h-1zM505 251h1v1h-1zM504 250h1v1h-1zM504 252h1v1h-1zM520 251h1v1h-1zM522 251h1v1h-1zM521 250h1v1h-1zM521 252h1v1h-1zM537 251h1v1h-1zM539 251h1v1h-1zM538 250h1v1h-1zM538 252h1v1h-1zM554 251h1v1h-1zM556 251h1v1h-1zM555 250h1v1h-1zM555 252h1v1h-1zM26 268h1v1h-1zM28 268h1v1h-1zM27 267h1v1h-1zM27 269h1v1h-1zM43 268h1v1h-1zM45 268h1v1h-1zM44 267h1v1h-1zM44 269h1v1h-1zM60 268h1v1h-1zM62 268h1v1h-1zM61 267h1v1h-1zM61 269h1v1h-1zM77 268h1v1h-1zM79 268h1v1h-1zM78 267h1v1h-1zM78 269h1v1h-1zM94 268h1v1h-1zM96 268h1v1h-1zM95 267h1v1h-1zM95 269h1v1h-1zM111 268h1v1h-1zM113 268h1v1h-1zM112 267h1v1h-1zM112 269h1v1h-1zM128 268h1v1h-1zM130 268h1v1h-1zM129 267h1v1h-1zM129 269h1v1h-1zM145 268h1v1h-1zM147 268h1v1h-1zM146 267h1v1h-1zM146 269h1v1h-1zM162 268h1v1h-1zM164 268h1v1h-1zM163 267h1v1h-1zM163 269h1v1h-1zM179 268h1v1h-1zM181 268h1v1h-1zM180 267h1v1h-1zM180 269h1v1h-1zM196 268h1v1h-1zM198 268h1v1h-1zM197 267h1v1h-1zM197 269h1v1h-1zM213 268h1v1h-1zM215 268h1v1h-1zM214 267h1v1h-1zM214 269h1v1h-1zM230 268h1v1h-1zM232 268h1v1h-1zM231 267h1v1h-1zM231 269h1v1h-1zM248 268h1v1h-1zM250 268h1v1h-1zM249 267h1v1h-1zM249 269h1v1h-1zM265 268h1v1h-1zM267 268h1v1h-1zM266 267h1v1h-1zM266 269h1v1h-1zM282 268h1v1h-1zM284 268h1v1h-1zM283 267h1v1h-1zM283 269h1v1h-1zM299 268h1v1h-1zM301 268h1v1h-1zM300 267h1v1h-1zM300 269h1v1h-1zM316 268h1v1h-1zM318 268h1v1h-1zM317 267h1v1h-1zM317 269h1v1h-1zM333 268h1v1h-1zM335 268h1v1h-1zM334 267h1v1h-1zM334 269h1v1h-1zM350 268h1v1h-1zM352 268h1v1h-1zM351 267h1v1h-1zM351 269h1v1h-1zM367 268h1v1h-1zM369 268h1v1h-1zM368 267h1v1h-1zM368 269h1v1h-1zM384 268h1v1h-1zM386 268h1v1h-1zM385 267h1v1h-1zM385 269h1v1h-1zM401 268h1v1h-1zM403 268h1v1h-1zM402 267h1v1h-1zM402 269h1v1h-1zM418 268h1v1h-1zM420 268h1v1h-1zM419 267h1v1h-1zM419 269h1v1h-1zM435 268h1v1h-1zM437 268h1v1h-1zM436 267h1v1h-1zM436 269h1v1h-1zM452 268h1v1h-1zM454 268h1v1h-1zM453 267h1v1h-1zM453 269h1v1h-1zM469 268h1v1h-1zM471 268h1v1h-1zM470 267h1v1h-1zM470 269h1v1h-1zM486 268h1v1h-1zM488 268h1v1h-1zM487 267h1v1h-1zM487 269h1v1h-1zM503 268h1v1h-1zM505 268h1v1h-1zM504 267h1v1h-1zM504 269h1v1h-1zM520 268h1v1h-1zM522 268h1v1h-1zM521 267h1v1h-1zM521 269h1v1h-1zM537 268h1v1h-1zM539 268h1v1h-1zM538 267h1v1h-1zM538 269h1v1h-1zM554 268h1v1h-1zM556 268h1v1h-1zM555 267h1v1h-1zM555 269h1v1h-1zM26 285h1v1h-1zM28 285h1v1h-1zM27 284h1v1h-1zM27 286h1v1h-1zM43 285h1v1h-1zM45 285h1v1h-1zM44 284h1v1h-1zM44 286h1v1h-1zM60 285h1v1h-1zM62 285h1v1h-1zM61 284h1v1h-1zM61 286h1v1h-1zM77 285h1v1h-1zM79 285h1v1h-1zM78 284h1v1h-1zM78 286h1v1h-1zM94 285h1v1h-1zM96 285h1v1h-1zM95 284h1v1h-1zM95 286h1v1h-1zM111 285h1v1h-1zM113 285h1v1h-1zM112 284h1v1h-1zM112 286h1v1h-1zM128 285h1v1h-1zM130 285h1v1h-1zM129 284h1v1h-1zM129 286h1v1h-1zM145 285h1v1h-1zM147 285h1v1h-1zM146 284h1v1h-1zM146 286h1v1h-1zM162 285h1v1h-1zM164 285h1v1h-1zM163 284h1v1h-1zM163 286h1v1h-1zM179 285h1v1h-1zM181 285h1v1h-1zM180 284h1v1h-1zM180 286h1v1h-1zM196 285h1v1h-1zM198 285h1v1h-1zM197 284h1v1h-1zM197 286h1v1h-1zM213 285h1v1h-1zM215 285h1v1h-1zM214 284h1v1h-1zM214 286h1v1h-1zM230 285h1v1h-1zM232 285h1v1h-1zM231 284h1v1h-1zM231 286h1v1h-1zM248 285h1v1h-1zM250 285h1v1h-1zM249 284h1v1h-1zM249 286h1v1h-1zM265 285h1v1h-1zM267 285h1v1h-1zM266 284h1v1h-1zM266 286h1v1h-1zM282 285h1v1h-1zM284 285h1v1h-1zM283 284h1v1h-1zM283 286h1v1h-1zM299 285h1v1h-1zM301 285h1v1h-1zM300 284h1v1h-1zM300 286h1v1h-1zM316 285h1v1h-1zM318 285h1v1h-1zM317 284h1v1h-1zM317 286h1v1h-1zM333 285h1v1h-1zM335 285h1v1h-1zM334 284h1v1h-1zM334 286h1v1h-1zM350 285h1v1h-1zM352 285h1v1h-1zM351 284h1v1h-1zM351 286h1v1h-1zM367 285h1v1h-1zM369 285h1v1h-1zM368 284h1v1h-1zM368 286h1v1h-1zM384 285h1v1h-1zM386 285h1v1h-1zM385 284h1v1h-1zM385 286h1v1h-1zM401 285h1v1h-1zM403 285h1v1h-1zM402 284h1v1h-1zM402 286h1v1h-1zM418 285h1v1h-1zM420 285h1v1h-1zM419 284h1v1h-1zM419 286h1v1h-1zM435 285h1v1h-1zM437 285h1v1h-1zM436 284h1v1h-1zM436 286h1v1h-1zM452 285h1v1h-1zM454 285h1v1h-1zM453 284h1v1h-1zM453 286h1v1h-1zM469 285h1v1h-1zM471 285h1v1h-1zM470 284h1v1h-1zM470 286h1v1h-1zM486 285h1v1h-1zM488 285h1v1h-1zM487 284h1v1h-1zM487 286h1v1h-1zM503 285h1v1h-1zM505 285h1v1h-1zM504 284h1v1h-1zM504 286h1v1h-1zM520 285h1v1h-1zM522 285h1v1h-1zM521 284h1v1h-1zM521 286h1v1h-1zM537 285h1v1h-1zM539 285h1v1h-1zM538 284h1v1h-1zM538 286h1v1h-1zM554 285h1v1h-1zM556 285h1v1h-1zM555 284h1v1h-1zM555 286h1v1h-1zM26 302h1v1h-1zM28 302h1v1h-1zM27 301h1v1h-1zM27 303h1v1h-1zM43 302h1v1h-1zM45 302h1v1h-1zM44 301h1v1h-1zM44 303h1v1h-1zM60 302h1v1h-1zM62 302h1v1h-1zM61 301h1v1h-1zM61 303h1v1h-1zM77 302h1v1h-1zM79 302h1v1h-1zM78 301h1v1h-1zM78 303h1v1h-1zM94 302h1v1h-1zM96 302h1v1h-1zM95 301h1v1h-1zM95 303h1v1h-1zM111 302h1v1h-1zM113 302h1v1h-1zM112 301h1v1h-1zM112 303h1v1h-1zM128 302h1v1h-1zM130 302h1v1h-1zM129 301h1v1h-1zM129 303h1v1h-1zM145 302h1v1h-1zM147 302h1v1h-1zM146 301h1v1h-1zM146 303h1v1h-1zM162 302h1v1h-1zM164 302h1v1h-1zM163 301h1v1h-1zM163 303h1v1h-1zM179 302h1v1h-1zM181 302h1v1h-1zM180 301h1v1h-1zM180 303h1v1h-1zM196 302h1v1h-1zM198 302h1v1h-1zM197 301h1v1h-1zM197 303h1v1h-1zM213 302h1v1h-1zM215 302h1v1h-1zM214 301h1v1h-1zM214 303h1v1h-1zM230 302h1v1h-1zM232 302h1v1h-1zM231 301h1v1h-1zM231 303h1v1h-1zM248 302h1v1h-1zM250 302h1v1h-1zM249 301h1v1h-1zM249 303h1v1h-1zM265 302h1v1h-1zM267 302h1v1h-1zM266 301h1v1h-1zM266 303h1v1h-1zM282 302h1v1h-1zM284 302h1v1h-1zM283 301h1v1h-1zM283 303h1v1h-1zM299 302h1v1h-1zM301 302h1v1h-1zM300 301h1v1h-1zM300 303h1v1h-1zM316 302h1v1h-1zM318 302h1v1h-1zM317 301h1v1h-1zM317 303h1v1h-1zM333 302h1v1h-1zM335 302h1v1h-1zM334 301h1v1h-1zM334 303h1v1h-1zM350 302h1v1h-1zM352 302h1v1h-1zM351 301h1v1h-1zM351 303h1v1h-1zM367 302h1v1h-1zM369 302h1v1h-1zM368 301h1v1h-1zM368 303h1v1h-1zM384 302h1v1h-1zM386 302h1v1h-1zM385 301h1v1h-1zM385 303h1v1h-1zM401 302h1v1h-1zM403 302h1v1h-1zM402 301h1v1h-1zM402 303h1v1h-1zM418 302h1v1h-1zM420 302h1v1h-1zM419 301h1v1h-1zM419 303h1v1h-1zM435 302h1v1h-1zM437 302h1v1h-1zM436 301h1v1h-1zM436 303h1v1h-1zM452 302h1v1h-1zM454 302h1v1h-1zM453 301h1v1h-1zM453 303h1v1h-1zM469 302h1v1h-1zM471 302h1v1h-1zM470 301h1v1h-1zM470 303h1v1h-1zM486 302h1v1h-1zM488 302h1v1h-1zM487 301h1v1h-1zM487 303h1v1h-1zM503 302h1v1h-1zM505 302h1v1h-1zM504 301h1v1h-1zM504 303h1v1h-1zM520 302h1v1h-1zM522 302h1v1h-1zM521 301h1v1h-1zM521 303h1v1h-1zM537 302h1v1h-1zM539 302h1v1h-1zM538 301h1v1h-1zM538 303h1v1h-1zM554 302h1v1h-1zM556 302h1v1h-1zM555 301h1v1h-1zM555 303h1v1h-1zM26 319h1v1h-1zM28 319h1v1h-1zM27 318h1v1h-1zM27 320h1v1h-1zM43 319h1v1h-1zM45 319h1v1h-1zM44 318h1v1h-1zM44 320h1v1h-1zM60 319h1v1h-1zM62 319h1v1h-1zM61 318h1v1h-1zM61 320h1v1h-1zM77 319h1v1h-1zM79 319h1v1h-1zM78 318h1v1h-1zM78 320h1v1h-1zM94 319h1v1h-1zM96 319h1v1h-1zM95 318h1v1h-1zM95 320h1v1h-1zM111 319h1v1h-1zM113 319h1v1h-1zM112 318h1v1h-1zM112 320h1v1h-1zM128 319h1v1h-1zM130 319h1v1h-1zM129 318h1v1h-1zM129 320h1v1h-1zM145 319h1v1h-1zM147 319h1v1h-1zM146 318h1v1h-1zM146 320h1v1h-1zM162 319h1v1h-1zM164 319h1v1h-1zM163 318h1v1h-1zM163 320h1v1h-1zM179 319h1v1h-1zM181 319h1v1h-1zM180 318h1v1h-1zM180 320h1v1h-1zM196 319h1v1h-1zM198 319h1v1h-1zM197 318h1v1h-1zM197 320h1v1h-1zM213 319h1v1h-1zM215 319h1v1h-1zM214 318h1v1h-1zM214 320h1v1h-1zM230 319h1v1h-1zM232 319h1v1h-1zM231 318h1v1h-1zM231 320h1v1h-1zM248 319h1v1h-1zM250 319h1v1h-1zM249 318h1v1h-1zM249 320h1v1h-1zM265 319h1v1h-1zM267 319h1v1h-1zM266 318h1v1h-1zM266 320h1v1h-1zM282 319h1v1h-1zM284 319h1v1h-1zM283 318h1v1h-1zM283 320h1v1h-1zM299 319h1v1h-1zM301 319h1v1h-1zM300 318h1v1h-1zM300 320h1v1h-1zM316 319h1v1h-1zM318 319h1v1h-1zM317 318h1v1h-1zM317 320h1v1h-1zM333 319h1v1h-1zM335 319h1v1h-1zM334 318h1v1h-1zM334 320h1v1h-1zM350 319h1v1h-1zM352 319h1v1h-1zM351 318h1v1h-1zM351 320h1v1h-1zM367 319h1v1h-1zM369 319h1v1h-1zM368 318h1v1h-1zM368 320h1v1h-1zM384 319h1v1h-1zM386 319h1v1h-1zM385 318h1v1h-1zM385 320h1v1h-1zM401 319h1v1h-1zM403 319h1v1h-1zM402 318h1v1h-1zM402 320h1v1h-1zM418 319h1v1h-1zM420 319h1v1h-1zM419 318h1v1h-1zM419 320h1v1h-1zM435 319h1v1h-1zM437 319h1v1h-1zM436 318h1v1h-1zM436 320h1v1h-1zM452 319h1v1h-1zM454 319h1v1h-1zM453 318h1v1h-1zM453 320h1v1h-1zM469 319h1v1h-1zM471 319h1v1h-1zM470 318h1v1h-1zM470 320h1v1h-1zM486 319h1v1h-1zM488 319h1v1h-1zM487 318h1v1h-1zM487 320h1v1h-1zM503 319h1v1h-1zM505 319h1v1h-1zM504 318h1v1h-1zM504 320h1v1h-1zM520 319h1v1h-1zM522 319h1v1h-1zM521 318h1v1h-1zM521 320h1v1h-1zM537 319h1v1h-1zM539 319h1v1h-1zM538 318h1v1h-1zM538 320h1v1h-1zM554 319h1v1h-1zM556 319h1v1h-1zM555 318h1v1h-1zM555 320h1v1h-1zM26 336h1v1h-1zM28 336h1v1h-1zM27 335h1v1h-1zM27 337h1v1h-1zM43 336h1v1h-1zM45 336h1v1h-1zM44 335h1v1h-1zM44 337h1v1h-1zM60 336h1v1h-1zM62 336h1v1h-1zM61 335h1v1h-1zM61 337h1v1h-1zM77 336h1v1h-1zM79 336h1v1h-1zM78 335h1v1h-1zM78 337h1v1h-1zM94 336h1v1h-1zM96 336h1v1h-1zM95 335h1v1h-1zM95 337h1v1h-1zM111 336h1v1h-1zM113 336h1v1h-1zM112 335h1v1h-1zM112 337h1v1h-1zM128 336h1v1h-1zM130 336h1v1h-1zM129 335h1v1h-1zM129 337h1v1h-1zM145 336h1v1h-1zM147 336h1v1h-1zM146 335h1v1h-1zM146 337h1v1h-1zM162 336h1v1h-1zM164 336h1v1h-1zM163 335h1v1h-1zM163 337h1v1h-1zM179 336h1v1h-1zM181 336h1v1h-1zM180 335h1v1h-1zM180 337h1v1h-1zM196 336h1v1h-1zM198 336h1v1h-1zM197 335h1v1h-1zM197 337h1v1h-1zM213 336h1v1h-1zM215 336h1v1h-1zM214 335h1v1h-1zM214 337h1v1h-1zM230 336h1v1h-1zM232 336h1v1h-1zM231 335h1v1h-1zM231 337h1v1h-1zM248 336h1v1h-1zM250 336h1v1h-1zM249 335h1v1h-1zM249 337h1v1h-1zM265 336h1v1h-1zM267 336h1v1h-1zM266 335h1v1h-1zM266 337h1v1h-1zM282 336h1v1h-1zM284 336h1v1h-1zM283 335h1v1h-1zM283 337h1v1h-1zM299 336h1v1h-1zM301 336h1v1h-1zM300 335h1v1h-1zM300 337h1v1h-1zM316 336h1v1h-1zM318 336h1v1h-1zM317 335h1v1h-1zM317 337h1v1h-1zM333 336h1v1h-1zM335 336h1v1h-1zM334 335h1v1h-1zM334 337h1v1h-1zM350 336h1v1h-1zM352 336h1v1h-1zM351 335h1v1h-1zM351 337h1v1h-1zM367 336h1v1h-1zM369 336h1v1h-1zM368 335h1v1h-1zM368 337h1v1h-1zM384 336h1v1h-1zM386 336h1v1h-1zM385 335h1v1h-1zM385 337h1v1h-1zM401 336h1v1h-1zM403 336h1v1h-1zM402 335h1v1h-1zM402 337h1v1h-1zM418 336h1v1h-1zM420 336h1v1h-1zM419 335h1v1h-1zM419 337h1v1h-1zM435 336h1v1h-1zM437 336h1v1h-1zM436 335h1v1h-1zM436 337h1v1h-1zM452 336h1v1h-1zM454 336h1v1h-1zM453 335h1v1h-1zM453 337h1v1h-1zM469 336h1v1h-1zM471 336h1v1h-1zM470 335h1v1h-1zM470 337h1v1h-1zM486 336h1v1h-1zM488 336h1v1h-1zM487 335h1v1h-1zM487 337h1v1h-1zM503 336h1v1h-1zM505 336h1v1h-1zM504 335h1v1h-1zM504 337h1v1h-1zM520 336h1v1h-1zM522 336h1v1h-1zM521 335h1v1h-1zM521 337h1v1h-1zM537 336h1v1h-1zM539 336h1v1h-1zM538 335h1v1h-1zM538 337h1v1h-1zM554 336h1v1h-1zM556 336h1v1h-1zM555 335h1v1h-1zM555 337h1v1h-1zM26 353h1v1h-1zM28 353h1v1h-1zM27 352h1v1h-1zM27 354h1v1h-1zM43 353h1v1h-1zM45 353h1v1h-1zM44 352h1v1h-1zM44 354h1v1h-1zM60 353h1v1h-1zM62 353h1v1h-1zM61 352h1v1h-1zM61 354h1v1h-1zM77 353h1v1h-1zM79 353h1v1h-1zM78 352h1v1h-1zM78 354h1v1h-1zM94 353h1v1h-1zM96 353h1v1h-1zM95 352h1v1h-1zM95 354h1v1h-1zM111 353h1v1h-1zM113 353h1v1h-1zM112 352h1v1h-1zM112 354h1v1h-1zM128 353h1v1h-1zM130 353h1v1h-1zM129 352h1v1h-1zM129 354h1v1h-1zM145 353h1v1h-1zM147 353h1v1h-1zM146 352h1v1h-1zM146 354h1v1h-1zM162 353h1v1h-1zM164 353h1v1h-1zM163 352h1v1h-1zM163 354h1v1h-1zM179 353h1v1h-1zM181 353h1v1h-1zM180 352h1v1h-1zM180 354h1v1h-1zM196 353h1v1h-1zM198 353h1v1h-1zM197 352h1v1h-1zM197 354h1v1h-1zM213 353h1v1h-1zM215 353h1v1h-1zM214 352h1v1h-1zM214 354h1v1h-1zM230 353h1v1h-1zM232 353h1v1h-1zM231 352h1v1h-1zM231 354h1v1h-1zM248 353h1v1h-1zM250 353h1v1h-1zM249 352h1v1h-1zM249 354h1v1h-1zM265 353h1v1h-1zM267 353h1v1h-1zM266 352h1v1h-1zM266 354h1v1h-1zM282 353h1v1h-1zM284 353h1v1h-1zM283 352h1v1h-1zM283 354h1v1h-1zM299 353h1v1h-1zM301 353h1v1h-1zM300 352h1v1h-1zM300 354h1v1h-1zM316 353h1v1h-1zM318 353h1v1h-1zM317 352h1v1h-1zM317 354h1v1h-1zM333 353h1v1h-1zM335 353h1v1h-1zM334 352h1v1h-1zM334 354h1v1h-1zM350 353h1v1h-1zM352 353h1v1h-1zM351 352h1v1h-1zM351 354h1v1h-1zM367 353h1v1h-1zM369 353h1v1h-1zM368 352h1v1h-1zM368 354h1v1h-1zM384 353h1v1h-1zM386 353h1v1h-1zM385 352h1v1h-1zM385 354h1v1h-1zM401 353h1v1h-1zM403 353h1v1h-1zM402 352h1v1h-1zM402 354h1v1h-1zM418 353h1v1h-1zM420 353h1v1h-1zM419 352h1v1h-1zM419 354h1v1h-1zM435 353h1v1h-1zM437 353h1v1h-1zM436 352h1v1h-1zM436 354h1v1h-1zM452 353h1v1h-1zM454 353h1v1h-1zM453 352h1v1h-1zM453 354h1v1h-1zM469 353h1v1h-1zM471 353h1v1h-1zM470 352h1v1h-1zM470 354h1v1h-1zM486 353h1v1h-1zM488 353h1v1h-1zM487 352h1v1h-1zM487 354h1v1h-1zM503 353h1v1h-1zM505 353h1v1h-1zM504 352h1v1h-1zM504 354h1v1h-1zM520 353h1v1h-1zM522 353h1v1h-1zM521 352h1v1h-1zM521 354h1v1h-1zM537 353h1v1h-1zM539 353h1v1h-1zM538 352h1v1h-1zM538 354h1v1h-1zM554 353h1v1h-1zM556 353h1v1h-1zM555 352h1v1h-1zM555 354h1v1h-1zM26 370h1v1h-1zM28 370h1v1h-1zM27 369h1v1h-1zM27 371h1v1h-1zM43 370h1v1h-1zM45 370h1v1h-1zM44 369h1v1h-1zM44 371h1v1h-1zM60 370h1v1h-1zM62 370h1v1h-1zM61 369h1v1h-1zM61 371h1v1h-1zM77 370h1v1h-1zM79 370h1v1h-1zM78 369h1v1h-1zM78 371h1v1h-1zM94 370h1v1h-1zM96 370h1v1h-1zM95 369h1v1h-1zM95 371h1v1h-1zM111 370h1v1h-1zM113 370h1v1h-1zM112 369h1v1h-1zM112 371h1v1h-1zM128 370h1v1h-1zM130 370h1v1h-1zM129 369h1v1h-1zM129 371h1v1h-1zM145 370h1v1h-1zM147 370h1v1h-1zM146 369h1v1h-1zM146 371h1v1h-1zM162 370h1v1h-1zM164 370h1v1h-1zM163 369h1v1h-1zM163 371h1v1h-1zM179 370h1v1h-1zM181 370h1v1h-1zM180 369h1v1h-1zM180 371h1v1h-1zM196 370h1v1h-1zM198 370h1v1h-1zM197 369h1v1h-1zM197 371h1v1h-1zM213 370h1v1h-1zM215 370h1v1h-1zM214 369h1v1h-1zM214 371h1v1h-1zM230 370h1v1h-1zM232 370h1v1h-1zM231 369h1v1h-1zM231 371h1v1h-1zM248 370h1v1h-1zM250 370h1v1h-1zM249 369h1v1h-1zM249 371h1v1h-1zM265 370h1v1h-1zM267 370h1v1h-1zM266 369h1v1h-1zM266 371h1v1h-1zM282 370h1v1h-1zM284 370h1v1h-1zM283 369h1v1h-1zM283 371h1v1h-1zM299 370h1v1h-1zM301 370h1v1h-1zM300 369h1v1h-1zM300 371h1v1h-1zM316 370h1v1h-1zM318 370h1v1h-1zM317 369h1v1h-1zM317 371h1v1h-1zM333 370h1v1h-1zM335 370h1v1h-1zM334 369h1v1h-1zM334 371h1v1h-1zM350 370h1v1h-1zM352 370h1v1h-1zM351 369h1v1h-1zM351 371h1v1h-1zM367 370h1v1h-1zM369 370h1v1h-1zM368 369h1v1h-1zM368 371h1v1h-1zM384 370h1v1h-1zM386 370h1v1h-1zM385 369h1v1h-1zM385 371h1v1h-1zM401 370h1v1h-1zM403 370h1v1h-1zM402 369h1v1h-1zM402 371h1v1h-1zM418 370h1v1h-1zM420 370h1v1h-1zM419 369h1v1h-1zM419 371h1v1h-1zM435 370h1v1h-1zM437 370h1v1h-1zM436 369h1v1h-1zM436 371h1v1h-1zM452 370h1v1h-1zM454 370h1v1h-1zM453 369h1v1h-1zM453 371h1v1h-1zM469 370h1v1h-1zM471 370h1v1h-1zM470 369h1v1h-1zM470 371h1v1h-1zM486 370h1v1h-1zM488 370h1v1h-1zM487 369h1v1h-1zM487 371h1v1h-1zM503 370h1v1h-1zM505 370h1v1h-1zM504 369h1v1h-1zM504 371h1v1h-1zM520 370h1v1h-1zM522 370h1v1h-1zM521 369h1v1h-1zM521 371h1v1h-1zM537 370h1v1h-1zM539 370h1v1h-1zM538 369h1v1h-1zM538 371h1v1h-1zM554 370h1v1h-1zM556 370h1v1h-1zM555 369h1v1h-1zM555 371h1v1h-1zM26 387h1v1h-1zM28 387h1v1h-1zM27 386h1v1h-1zM27 388h1v1h-1zM43 387h1v1h-1zM45 387h1v1h-1zM44 386h1v1h-1zM44 388h1v1h-1zM60 387h1v1h-1zM62 387h1v1h-1zM61 386h1v1h-1zM61 388h1v1h-1zM77 387h1v1h-1zM79 387h1v1h-1zM78 386h1v1h-1zM78 388h1v1h-1zM94 387h1v1h-1zM96 387h1v1h-1zM95 386h1v1h-1zM95 388h1v1h-1zM111 387h1v1h-1zM113 387h1v1h-1zM112 386h1v1h-1zM112 388h1v1h-1zM128 387h1v1h-1zM130 387h1v1h-1zM129 386h1v1h-1zM129 388h1v1h-1zM145 387h1v1h-1zM147 387h1v1h-1zM146 386h1v1h-1zM146 388h1v1h-1zM162 387h1v1h-1zM164 387h1v1h-1zM163 386h1v1h-1zM163 388h1v1h-1zM179 387h1v1h-1zM181 387h1v1h-1zM180 386h1v1h-1zM180 388h1v1h-1zM196 387h1v1h-1zM198 387h1v1h-1zM197 386h1v1h-1zM197 388h1v1h-1zM213 387h1v1h-1zM215 387h1v1h-1zM214 386h1v1h-1zM214 388h1v1h-1zM230 387h1v1h-1zM232 387h1v1h-1zM231 386h1v1h-1zM231 388h1v1h-1zM248 387h1v1h-1zM250 387h1v1h-1zM249 386h1v1h-1zM249 388h1v1h-1zM265 387h1v1h-1zM267 387h1v1h-1zM266 386h1v1h-1zM266 388h1v1h-1zM282 387h1v1h-1zM284 387h1v1h-1zM283 386h1v1h-1zM283 388h1v1h-1zM299 387h1v1h-1zM301 387h1v1h-1zM300 386h1v1h-1zM300 388h1v1h-1zM316 387h1v1h-1zM318 387h1v1h-1zM317 386h1v1h-1zM317 388h1v1h-1zM333 387h1v1h-1zM335 387h1v1h-1zM334 386h1v1h-1zM334 388h1v1h-1zM350 387h1v1h-1zM352 387h1v1h-1zM351 386h1v1h-1zM351 388h1v1h-1zM367 387h1v1h-1zM369 387h1v1h-1zM368 386h1v1h-1zM368 388h1v1h-1zM384 387h1v1h-1zM386 387h1v1h-1zM385 386h1v1h-1zM385 388h1v1h-1zM401 387h1v1h-1zM403 387h1v1h-1zM402 386h1v1h-1zM402 388h1v1h-1zM418 387h1v1h-1zM420 387h1v1h-1zM419 386h1v1h-1zM419 388h1v1h-1zM435 387h1v1h-1zM437 387h1v1h-1zM436 386h1v1h-1zM436 388h1v1h-1zM452 387h1v1h-1zM454 387h1v1h-1zM453 386h1v1h-1zM453 388h1v1h-1zM469 387h1v1h-1zM471 387h1v1h-1zM470 386h1v1h-1zM470 388h1v1h-1zM486 387h1v1h-1zM488 387h1v1h-1zM487 386h1v1h-1zM487 388h1v1h-1zM503 387h1v1h-1zM505 387h1v1h-1zM504 386h1v1h-1zM504 388h1v1h-1zM520 387h1v1h-1zM522 387h1v1h-1zM521 386h1v1h-1zM521 388h1v1h-1zM537 387h1v1h-1zM539 387h1v1h-1zM538 386h1v1h-1zM538 388h1v1h-1zM554 387h1v1h-1zM556 387h1v1h-1zM555 386h1v1h-1zM555 388h1v1h-1zM26 405h1v1h-1zM28 405h1v1h-1zM27 404h1v1h-1zM27 406h1v1h-1zM43 405h1v1h-1zM45 405h1v1h-1zM44 404h1v1h-1zM44 406h1v1h-1zM60 405h1v1h-1zM62 405h1v1h-1zM61 404h1v1h-1zM61 406h1v1h-1zM77 405h1v1h-1zM79 405h1v1h-1zM78 404h1v1h-1zM78 406h1v1h-1zM94 405h1v1h-1zM96 405h1v1h-1zM95 404h1v1h-1zM95 406h1v1h-1zM111 405h1v1h-1zM113 405h1v1h-1zM112 404h1v1h-1zM112 406h1v1h-1zM128 405h1v1h-1zM130 405h1v1h-1zM129 404h1v1h-1zM129 406h1v1h-1zM145 405h1v1h-1zM147 405h1v1h-1zM146 404h1v1h-1zM146 406h1v1h-1zM162 405h1v1h-1zM164 405h1v1h-1zM163 404h1v1h-1zM163 406h1v1h-1zM179 405h1v1h-1zM181 405h1v1h-1zM180 404h1v1h-1zM180 406h1v1h-1zM196 405h1v1h-1zM198 405h1v1h-1zM197 404h1v1h-1zM197 406h1v1h-1zM213 405h1v1h-1zM215 405h1v1h-1zM214 404h1v1h-1zM214 406h1v1h-1zM230 405h1v1h-1zM232 405h1v1h-1zM231 404h1v1h-1zM231 406h1v1h-1zM248 405h1v1h-1zM250 405h1v1h-1zM249 404h1v1h-1zM249 406h1v1h-1zM265 405h1v1h-1zM267 405h1v1h-1zM266 404h1v1h-1zM266 406h1v1h-1zM282 405h1v1h-1zM284 405h1v1h-1zM283 404h1v1h-1zM283 406h1v1h-1zM299 405h1v1h-1zM301 405h1v1h-1zM300 404h1v1h-1zM300 406h1v1h-1zM316 405h1v1h-1zM318 405h1v1h-1zM317 404h1v1h-1zM317 406h1v1h-1zM333 405h1v1h-1zM335 405h1v1h-1zM334 404h1v1h-1zM334 406h1v1h-1zM350 405h1v1h-1zM352 405h1v1h-1zM351 404h1v1h-1zM351 406h1v1h-1zM367 405h1v1h-1zM369 405h1v1h-1zM368 404h1v1h-1zM368 406h1v1h-1zM384 405h1v1h-1zM386 405h1v1h-1zM385 404h1v1h-1zM385 406h1v1h-1zM401 405h1v1h-1zM403 405h1v1h-1zM402 404h1v1h-1zM402 406h1v1h-1zM418 405h1v1h-1zM420 405h1v1h-1zM419 404h1v1h-1zM419 406h1v1h-1zM435 405h1v1h-1zM437 405h1v1h-1zM436 404h1v1h-1zM436 406h1v1h-1zM452 405h1v1h-1zM454 405h1v1h-1zM453 404h1v1h-1zM453 406h1v1h-1zM469 405h1v1h-1zM471 405h1v1h-1zM470 404h1v1h-1zM470 406h1v1h-1zM486 405h1v1h-1zM488 405h1v1h-1zM487 404h1v1h-1zM487 406h1v1h-1zM503 405h1v1h-1zM505 405h1v1h-1zM504 404h1v1h-1zM504 406h1v1h-1zM520 405h1v1h-1zM522 405h1v1h-1zM521 404h1v1h-1zM521 406h1v1h-1zM537 405h1v1h-1zM539 405h1v1h-1zM538 404h1v1h-1zM538 406h1v1h-1zM554 405h1v1h-1zM556 405h1v1h-1zM555 404h1v1h-1zM555 406h1v1h-1zM26 422h1v1h-1zM28 422h1v1h-1zM27 421h1v1h-1zM27 423h1v1h-1zM43 422h1v1h-1zM45 422h1v1h-1zM44 421h1v1h-1zM44 423h1v1h-1zM60 422h1v1h-1zM62 422h1v1h-1zM61 421h1v1h-1zM61 423h1v1h-1zM77 422h1v1h-1zM79 422h1v1h-1zM78 421h1v1h-1zM78 423h1v1h-1zM94 422h1v1h-1zM96 422h1v1h-1zM95 421h1v1h-1zM95 423h1v1h-1zM111 422h1v1h-1zM113 422h1v1h-1zM112 421h1v1h-1zM112 423h1v1h-1zM128 422h1v1h-1zM130 422h1v1h-1zM129 421h1v1h-1zM129 423h1v1h-1zM145 422h1v1h-1zM147 422h1v1h-1zM146 421h1v1h-1zM146 423h1v1h-1zM162 422h1v1h-1zM164 422h1v1h-1zM163 421h1v1h-1zM163 423h1v1h-1zM179 422h1v1h-1zM181 422h1v1h-1zM180 421h1v1h-1zM180 423h1v1h-1zM196 422h1v1h-1zM198 422h1v1h-1zM197 421h1v1h-1zM197 423h1v1h-1zM213 422h1v1h-1zM215 422h1v1h-1zM214 421h1v1h-1zM214 423h1v1h-1zM230 422h1v1h-1zM232 422h1v1h-1zM231 421h1v1h-1zM231 423h1v1h-1zM248 422h1v1h-1zM250 422h1v1h-1zM249 421h1v1h-1zM249 423h1v1h-1zM265 422h1v1h-1zM267 422h1v1h-1zM266 421h1v1h-1zM266 423h1v1h-1zM282 422h1v1h-1zM284 422h1v1h-1zM283 421h1v1h-1zM283 423h1v1h-1zM299 422h1v1h-1zM301 422h1v1h-1zM300 421h1v1h-1zM300 423h1v1h-1zM316 422h1v1h-1zM318 422h1v1h-1zM317 421h1v1h-1zM317 423h1v1h-1zM333 422h1v1h-1zM335 422h1v1h-1zM334 421h1v1h-1zM334 423h1v1h-1zM350 422h1v1h-1zM352 422h1v1h-1zM351 421h1v1h-1zM351 423h1v1h-1zM367 422h1v1h-1zM369 422h1v1h-1zM368 421h1v1h-1zM368 423h1v1h-1zM384 422h1v1h-1zM386 422h1v1h-1zM385 421h1v1h-1zM385 423h1v1h-1zM401 422h1v1h-1zM403 422h1v1h-1zM402 421h1v1h-1zM402 423h1v1h-1zM418 422h1v1h-1zM420 422h1v1h-1zM419 421h1v1h-1zM419 423h1v1h-1zM435 422h1v1h-1zM437 422h1v1h-1zM436 421h1v1h-1zM436 423h1v1h-1zM452 422h1v1h-1zM454 422h1v1h-1zM453 421h1v1h-1zM453 423h1v1h-1zM469 422h1v1h-1zM471 422h1v1h-1zM470 421h1v1h-1zM470 423h1v1h-1zM486 422h1v1h-1zM488 422h1v1h-1zM487 421h1v1h-1zM487 423h1v1h-1zM503 422h1v1h-1zM505 422h1v1h-1zM504 421h1v1h-1zM504 423h1v1h-1zM520 422h1v1h-1zM522 422h1v1h-1zM521 421h1v1h-1zM521 423h1v1h-1zM537 422h1v1h-1zM539 422h1v1h-1zM538 421h1v1h-1zM538 423h1v1h-1zM554 422h1v1h-1zM556 422h1v1h-1zM555 421h1v1h-1zM555 423h1v1h-1zM26 439h1v1h-1zM28 439h1v1h-1zM27 438h1v1h-1zM27 440h1v1h-1zM43 439h1v1h-1zM45 439h1v1h-1zM44 438h1v1h-1zM44 440h1v1h-1zM60 439h1v1h-1zM62 439h1v1h-1zM61 438h1v1h-1zM61 440h1v1h-1zM77 439h1v1h-1zM79 439h1v1h-1zM78 438h1v1h-1zM78 440h1v1h-1zM94 439h1v1h-1zM96 439h1v1h-1zM95 438h1v1h-1zM95 440h1v1h-1zM111 439h1v1h-1zM113 439h1v1h-1zM112 438h1v1h-1zM112 440h1v1h-1zM128 439h1v1h-1zM130 439h1v1h-1zM129 438h1v1h-1zM129 440h1v1h-1zM145 439h1v1h-1zM147 439h1v1h-1zM146 438h1v1h-1zM146 440h1v1h-1zM162 439h1v1h-1zM164 439h1v1h-1zM163 438h1v1h-1zM163 440h1v1h-1zM179 439h1v1h-1zM181 439h1v1h-1zM180 438h1v1h-1zM180 440h1v1h-1zM196 439h1v1h-1zM198 439h1v1h-1zM197 438h1v1h-1zM197 440h1v1h-1zM213 439h1v1h-1zM215 439h1v1h-1zM214 438h1v1h-1zM214 440h1v1h-1zM230 439h1v1h-1zM232 439h1v1h-1zM231 438h1v1h-1zM231 440h1v1h-1zM248 439h1v1h-1zM250 439h1v1h-1zM249 438h1v1h-1zM249 440h1v1h-1zM265 439h1v1h-1zM267 439h1v1h-1zM266 438h1v1h-1zM266 440h1v1h-1zM282 439h1v1h-1zM284 439h1v1h-1zM283 438h1v1h-1zM283 440h1v1h-1zM299 439h1v1h-1zM301 439h1v1h-1zM300 438h1v1h-1zM300 440h1v1h-1zM316 439h1v1h-1zM318 439h1v1h-1zM317 438h1v1h-1zM317 440h1v1h-1zM333 439h1v1h-1zM335 439h1v1h-1zM334 438h1v1h-1zM334 440h1v1h-1zM350 439h1v1h-1zM352 439h1v1h-1zM351 438h1v1h-1zM351 440h1v1h-1zM367 439h1v1h-1zM369 439h1v1h-1zM368 438h1v1h-1zM368 440h1v1h-1zM384 439h1v1h-1zM386 439h1v1h-1zM385 438h1v1h-1zM385 440h1v1h-1zM401 439h1v1h-1zM403 439h1v1h-1zM402 438h1v1h-1zM402 440h1v1h-1zM418 439h1v1h-1zM420 439h1v1h-1zM419 438h1v1h-1zM419 440h1v1h-1zM435 439h1v1h-1zM437 439h1v1h-1zM436 438h1v1h-1zM436 440h1v1h-1zM452 439h1v1h-1zM454 439h1v1h-1zM453 438h1v1h-1zM453 440h1v1h-1zM469 439h1v1h-1zM471 439h1v1h-1zM470 438h1v1h-1zM470 440h1v1h-1zM486 439h1v1h-1zM488 439h1v1h-1zM487 438h1v1h-1zM487 440h1v1h-1zM503 439h1v1h-1zM505 439h1v1h-1zM504 438h1v1h-1zM504 440h1v1h-1zM520 439h1v1h-1zM522 439h1v1h-1zM521 438h1v1h-1zM521 440h1v1h-1zM537 439h1v1h-1zM539 439h1v1h-1zM538 438h1v1h-1zM538 440h1v1h-1zM554 439h1v1h-1zM556 439h1v1h-1zM555 438h1v1h-1zM555 440h1v1h-1zM26 456h1v1h-1zM28 456h1v1h-1zM27 455h1v1h-1zM27 457h1v1h-1zM43 456h1v1h-1zM45 456h1v1h-1zM44 455h1v1h-1zM44 457h1v1h-1zM60 456h1v1h-1zM62 456h1v1h-1zM61 455h1v1h-1zM61 457h1v1h-1zM77 456h1v1h-1zM79 456h1v1h-1zM78 455h1v1h-1zM78 457h1v1h-1zM94 456h1v1h-1zM96 456h1v1h-1zM95 455h1v1h-1zM95 457h1v1h-1zM111 456h1v1h-1zM113 456h1v1h-1zM112 455h1v1h-1zM112 457h1v1h-1zM128 456h1v1h-1zM130 456h1v1h-1zM129 455h1v1h-1zM129 457h1v1h-1zM145 456h1v1h-1zM147 456h1v1h-1zM146 455h1v1h-1zM146 457h1v1h-1zM162 456h1v1h-1zM164 456h1v1h-1zM163 455h1v1h-1zM163 457h1v1h-1zM179 456h1v1h-1zM181 456h1v1h-1zM180 455h1v1h-1zM180 457h1v1h-1zM196 456h1v1h-1zM198 456h1v1h-1zM197 455h1v1h-1zM197 457h1v1h-1zM213 456h1v1h-1zM215 456h1v1h-1zM214 455h1v1h-1zM214 457h1v1h-1zM230 456h1v1h-1zM232 456h1v1h-1zM231 455h1v1h-1zM231 457h1v1h-1zM248 456h1v1h-1zM250 456h1v1h-1zM249 455h1v1h-1zM249 457h1v1h-1zM265 456h1v1h-1zM267 456h1v1h-1zM266 455h1v1h-1zM266 457h1v1h-1zM282 456h1v1h-1zM284 456h1v1h-1zM283 455h1v1h-1zM283 457h1v1h-1zM299 456h1v1h-1zM301 456h1v1h-1zM300 455h1v1h-1zM300 457h1v1h-1zM316 456h1v1h-1zM318 456h1v1h-1zM317 455h1v1h-1zM317 457h1v1h-1zM333 456h1v1h-1zM335 456h1v1h-1zM334 455h1v1h-1zM334 457h1v1h-1zM350 456h1v1h-1zM352 456h1v1h-1zM351 455h1v1h-1zM351 457h1v1h-1zM367 456h1v1h-1zM369 456h1v1h-1zM368 455h1v1h-1zM368 457h1v1h-1zM384 456h1v1h-1zM386 456h1v1h-1zM385 455h1v1h-1zM385 457h1v1h-1zM401 456h1v1h-1zM403 456h1v1h-1zM402 455h1v1h-1zM402 457h1v1h-1zM418 456h1v1h-1zM420 456h1v1h-1zM419 455h1v1h-1zM419 457h1v1h-1zM435 456h1v1h-1zM437 456h1v1h-1zM436 455h1v1h-1zM436 457h1v1h-1zM452 456h1v1h-1zM454 456h1v1h-1zM453 455h1v1h-1zM453 457h1v1h-1zM469 456h1v1h-1zM471 456h1v1h-1zM470 455h1v1h-1zM470 457h1v1h-1zM486 456h1v1h-1zM488 456h1v1h-1zM487 455h1v1h-1zM487 457h1v1h-1zM503 456h1v1h-1zM505 456h1v1h-1zM504 455h1v1h-1zM504 457h1v1h-1zM520 456h1v1h-1zM522 456h1v1h-1zM521 455h1v1h-1zM521 457h1v1h-1zM537 456h1v1h-1zM539 456h1v1h-1zM538 455h1v1h-1zM538 457h1v1h-1zM554 456h1v1h-1zM556 456h1v1h-1zM555 455h1v1h-1zM555 457h1v1h-1zM26 473h1v1h-1zM28 473h1v1h-1zM27 472h1v1h-1zM27 474h1v1h-1zM43 473h1v1h-1zM45 473h1v1h-1zM44 472h1v1h-1zM44 474h1v1h-1zM60 473h1v1h-1zM62 473h1v1h-1zM61 472h1v1h-1zM61 474h1v1h-1zM77 473h1v1h-1zM79 473h1v1h-1zM78 472h1v1h-1zM78 474h1v1h-1zM94 473h1v1h-1zM96 473h1v1h-1zM95 472h1v1h-1zM95 474h1v1h-1zM111 473h1v1h-1zM113 473h1v1h-1zM112 472h1v1h-1zM112 474h1v1h-1zM128 473h1v1h-1zM130 473h1v1h-1zM129 472h1v1h-1zM129 474h1v1h-1zM145 473h1v1h-1zM147 473h1v1h-1zM146 472h1v1h-1zM146 474h1v1h-1zM162 473h1v1h-1zM164 473h1v1h-1zM163 472h1v1h-1zM163 474h1v1h-1zM179 473h1v1h-1zM181 473h1v1h-1zM180 472h1v1h-1zM180 474h1v1h-1zM196 473h1v1h-1zM198 473h1v1h-1zM197 472h1v1h-1zM197 474h1v1h-1zM213 473h1v1h-1zM215 473h1v1h-1zM214 472h1v1h-1zM214 474h1v1h-1zM230 473h1v1h-1zM232 473h1v1h-1zM231 472h1v1h-1zM231 474h1v1h-1zM248 473h1v1h-1zM250 473h1v1h-1zM249 472h1v1h-1zM249 474h1v1h-1zM265 473h1v1h-1zM267 473h1v1h-1zM266 472h1v1h-1zM266 474h1v1h-1zM282 473h1v1h-1zM284 473h1v1h-1zM283 472h1v1h-1zM283 474h1v1h-1zM299 473h1v1h-1zM301 473h1v1h-1zM300 472h1v1h-1zM300 474h1v1h-1zM316 473h1v1h-1zM318 473h1v1h-1zM317 472h1v1h-1zM317 474h1v1h-1zM333 473h1v1h-1zM335 473h1v1h-1zM334 472h1v1h-1zM334 474h1v1h-1zM350 473h1v1h-1zM352 473h1v1h-1zM351 472h1v1h-1zM351 474h1v1h-1zM367 473h1v1h-1zM369 473h1v1h-1zM368 472h1v1h-1zM368 474h1v1h-1zM384 473h1v1h-1zM386 473h1v1h-1zM385 472h1v1h-1zM385 474h1v1h-1zM401 473h1v1h-1zM403 473h1v1h-1zM402 472h1v1h-1zM402 474h1v1h-1zM418 473h1v1h-1zM420 473h1v1h-1zM419 472h1v1h-1zM419 474h1v1h-1zM435 473h1v1h-1zM437 473h1v1h-1zM436 472h1v1h-1zM436 474h1v1h-1zM452 473h1v1h-1zM454 473h1v1h-1zM453 472h1v1h-1zM453 474h1v1h-1zM469 473h1v1h-1zM471 473h1v1h-1zM470 472h1v1h-1zM470 474h1v1h-1zM486 473h1v1h-1zM488 473h1v1h-1zM487 472h1v1h-1zM487 474h1v1h-1zM503 473h1v1h-1zM505 473h1v1h-1zM504 472h1v1h-1zM504 474h1v1h-1zM520 473h1v1h-1zM522 473h1v1h-1zM521 472h1v1h-1zM521 474h1v1h-1zM537 473h1v1h-1zM539 473h1v1h-1zM538 472h1v1h-1zM538 474h1v1h-1zM554 473h1v1h-1zM556 473h1v1h-1zM555 472h1v1h-1zM555 474h1v1h-1zM26 490h1v1h-1zM28 490h1v1h-1zM27 489h1v1h-1zM27 491h1v1h-1zM43 490h1v1h-1zM45 490h1v1h-1zM44 489h1v1h-1zM44 491h1v1h-1zM60 490h1v1h-1zM62 490h1v1h-1zM61 489h1v1h-1zM61 491h1v1h-1zM77 490h1v1h-1zM79 490h1v1h-1zM78 489h1v1h-1zM78 491h1v1h-1zM94 490h1v1h-1zM96 490h1v1h-1zM95 489h1v1h-1zM95 491h1v1h-1zM111 490h1v1h-1zM113 490h1v1h-1zM112 489h1v1h-1zM112 491h1v1h-1zM128 490h1v1h-1zM130 490h1v1h-1zM129 489h1v1h-1zM129 491h1v1h-1zM145 490h1v1h-1zM147 490h1v1h-1zM146 489h1v1h-1zM146 491h1v1h-1zM162 490h1v1h-1zM164 490h1v1h-1zM163 489h1v1h-1zM163 491h1v1h-1zM179 490h1v1h-1zM181 490h1v1h-1zM180 489h1v1h-1zM180 491h1v1h-1zM196 490h1v1h-1zM198 490h1v1h-1zM197 489h1v1h-1zM197 491h1v1h-1zM213 490h1v1h-1zM215 490h1v1h-1zM214 489h1v1h-1zM214 491h1v1h-1zM230 490h1v1h-1zM232 490h1v1h-1zM231 489h1v1h-1zM231 491h1v1h-1zM248 490h1v1h-1zM250 490h1v1h-1zM249 489h1v1h-1zM249 491h1v1h-1zM265 490h1v1h-1zM267 490h1v1h-1zM266 489h1v1h-1zM266 491h1v1h-1zM282 490h1v1h-1zM284 490h1v1h-1zM283 489h1v1h-1zM283 491h1v1h-1zM299 490h1v1h-1zM301 490h1v1h-1zM300 489h1v1h-1zM300 491h1v1h-1zM316 490h1v1h-1zM318 490h1v1h-1zM317 489h1v1h-1zM317 491h1v1h-1zM333 490h1v1h-1zM335 490h1v1h-1zM334 489h1v1h-1zM334 491h1v1h-1zM350 490h1v1h-1zM352 490h1v1h-1zM351 489h1v1h-1zM351 491h1v1h-1zM367 490h1v1h-1zM369 490h1v1h-1zM368 489h1v1h-1zM368 491h1v1h-1zM384 490h1v1h-1zM386 490h1v1h-1zM385 489h1v1h-1zM385 491h1v1h-1zM401 490h1v1h-1zM403 490h1v1h-1zM402 489h1v1h-1zM402 491h1v1h-1zM418 490h1v1h-1zM420 490h1v1h-1zM419 489h1v1h-1zM419 491h1v1h-1zM435 490h1v1h-1zM437 490h1v1h-1zM436 489h1v1h-1zM436 491h1v1h-1zM452 490h1v1h-1zM454 490h1v1h-1zM453 489h1v1h-1zM453 491h1v1h-1zM469 490h1v1h-1zM471 490h1v1h-1zM470 489h1v1h-1zM470 491h1v1h-1zM486 490h1v1h-1zM488 490h1v1h-1zM487 489h1v1h-1zM487 491h1v1h-1zM503 490h1v1h-1zM505 490h1v1h-1zM504 489h1v1h-1zM504 491h1v1h-1zM520 490h1v1h-1zM522 490h1v1h-1zM521 489h1v1h-1zM521 491h1v1h-1zM537 490h1v1h-1zM539 490h1v1h-1zM538 489h1v1h-1zM538 491h1v1h-1zM554 490h1v1h-1zM556 490h1v1h-1zM555 489h1v1h-1zM555 491h1v1h-1zM26 507h1v1h-1zM28 507h1v1h-1zM27 506h1v1h-1zM27 508h1v1h-1zM43 507h1v1h-1zM45 507h1v1h-1zM44 506h1v1h-1zM44 508h1v1h-1zM60 507h1v1h-1zM62 507h1v1h-1zM61 506h1v1h-1zM61 508h1v1h-1zM77 507h1v1h-1zM79 507h1v1h-1zM78 506h1v1h-1zM78 508h1v1h-1zM94 507h1v1h-1zM96 507h1v1h-1zM95 506h1v1h-1zM95 508h1v1h-1zM111 507h1v1h-1zM113 507h1v1h-1zM112 506h1v1h-1zM112 508h1v1h-1zM128 507h1v1h-1zM130 507h1v1h-1zM129 506h1v1h-1zM129 508h1v1h-1zM145 507h1v1h-1zM147 507h1v1h-1zM146 506h1v1h-1zM146 508h1v1h-1zM162 507h1v1h-1zM164 507h1v1h-1zM163 506h1v1h-1zM163 508h1v1h-1zM179 507h1v1h-1zM181 507h1v1h-1zM180 506h1v1h-1zM180 508h1v1h-1zM196 507h1v1h-1zM198 507h1v1h-1zM197 506h1v1h-1zM197 508h1v1h-1zM213 507h1v1h-1zM215 507h1v1h-1zM214 506h1v1h-1zM214 508h1v1h-1zM230 507h1v1h-1zM232 507h1v1h-1zM231 506h1v1h-1zM231 508h1v1h-1zM248 507h1v1h-1zM250 507h1v1h-1zM249 506h1v1h-1zM249 508h1v1h-1zM265 507h1v1h-1zM267 507h1v1h-1zM266 506h1v1h-1zM266 508h1v1h-1zM282 507h1v1h-1zM284 507h1v1h-1zM283 506h1v1h-1zM283 508h1v1h-1zM299 507h1v1h-1zM301 507h1v1h-1zM300 506h1v1h-1zM300 508h1v1h-1zM316 507h1v1h-1zM318 507h1v1h-1zM317 506h1v1h-1zM317 508h1v1h-1zM333 507h1v1h-1zM335 507h1v1h-1zM334 506h1v1h-1zM334 508h1v1h-1zM350 507h1v1h-1zM352 507h1v1h-1zM351 506h1v1h-1zM351 508h1v1h-1zM367 507h1v1h-1zM369 507h1v1h-1zM368 506h1v1h-1zM368 508h1v1h-1zM384 507h1v1h-1zM386 507h1v1h-1zM385 506h1v1h-1zM385 508h1v1h-1zM401 507h1v1h-1zM403 507h1v1h-1zM402 506h1v1h-1zM402 508h1v1h-1zM418 507h1v1h-1zM420 507h1v1h-1zM419 506h1v1h-1zM419 508h1v1h-1zM435 507h1v1h-1zM437 507h1v1h-1zM436 506h1v1h-1zM436 508h1v1h-1zM452 507h1v1h-1zM454 507h1v1h-1zM453 506h1v1h-1zM453 508h1v1h-1zM469 507h1v1h-1zM471 507h1v1h-1zM470 506h1v1h-1zM470 508h1v1h-1zM486 507h1v1h-1zM488 507h1v1h-1zM487 506h1v1h-1zM487 508h1v1h-1zM503 507h1v1h-1zM505 507h1v1h-1zM504 506h1v1h-1zM504 508h1v1h-1zM520 507h1v1h-1zM522 507h1v1h-1zM521 506h1v1h-1zM521 508h1v1h-1zM537 507h1v1h-1zM539 507h1v1h-1zM538 506h1v1h-1zM538 508h1v1h-1zM554 507h1v1h-1zM556 507h1v1h-1zM555 506h1v1h-1zM555 508h1v1h-1zM26 524h1v1h-1zM28 524h1v1h-1zM27 523h1v1h-1zM27 525h1v1h-1zM43 524h1v1h-1zM45 524h1v1h-1zM44 523h1v1h-1zM44 525h1v1h-1zM60 524h1v1h-1zM62 524h1v1h-1zM61 523h1v1h-1zM61 525h1v1h-1zM77 524h1v1h-1zM79 524h1v1h-1zM78 523h1v1h-1zM78 525h1v1h-1zM94 524h1v1h-1zM96 524h1v1h-1zM95 523h1v1h-1zM95 525h1v1h-1zM111 524h1v1h-1zM113 524h1v1h-1zM112 523h1v1h-1zM112 525h1v1h-1zM128 524h1v1h-1zM130 524h1v1h-1zM129 523h1v1h-1zM129 525h1v1h-1zM145 524h1v1h-1zM147 524h1v1h-1zM146 523h1v1h-1zM146 525h1v1h-1zM162 524h1v1h-1zM164 524h1v1h-1zM163 523h1v1h-1zM163 525h1v1h-1zM179 524h1v1h-1zM181 524h1v1h-1zM180 523h1v1h-1zM180 525h1v1h-1zM196 524h1v1h-1zM198 524h1v1h-1zM197 523h1v1h-1zM197 525h1v1h-1zM213 524h1v1h-1zM215 524h1v1h-1zM214 523h1v1h-1zM214 525h1v1h-1zM230 524h1v1h-1zM232 524h1v1h-1zM231 523h1v1h-1zM231 525h1v1h-1zM248 524h1v1h-1zM250 524h1v1h-1zM249 523h1v1h-1zM249 525h1v1h-1zM265 524h1v1h-1zM267 524h1v1h-1zM266 523h1v1h-1zM266 525h1v1h-1zM282 524h1v1h-1zM284 524h1v1h-1zM283 523h1v1h-1zM283 525h1v1h-1zM299 524h1v1h-1zM301 524h1v1h-1zM300 523h1v1h-1zM300 525h1v1h-1zM316 524h1v1h-1zM318 524h1v1h-1zM317 523h1v1h-1zM317 525h1v1h-1zM333 524h1v1h-1zM335 524h1v1h-1zM334 523h1v1h-1zM334 525h1v1h-1zM350 524h1v1h-1zM352 524h1v1h-1zM351 523h1v1h-1zM351 525h1v1h-1zM367 524h1v1h-1zM369 524h1v1h-1zM368 523h1v1h-1zM368 525h1v1h-1zM384 524h1v1h-1zM386 524h1v1h-1zM385 523h1v1h-1zM385 525h1v1h-1zM401 524h1v1h-1zM403 524h1v1h-1zM402 523h1v1h-1zM402 525h1v1h-1zM418 524h1v1h-1zM420 524h1v1h-1zM419 523h1v1h-1zM419 525h1v1h-1zM435 524h1v1h-1zM437 524h1v1h-1zM436 523h1v1h-1zM436 525h1v1h-1zM452 524h1v1h-1zM454 524h1v1h-1zM453 523h1v1h-1zM453 525h1v1h-1zM469 524h1v1h-1zM471 524h1v1h-1zM470 523h1v1h-1zM470 525h1v1h-1zM486 524h1v1h-1zM488 524h1v1h-1zM487 523h1v1h-1zM487 525h1v1h-1zM503 524h1v1h-1zM505 524h1v1h-1zM504 523h1v1h-1zM504 525h1v1h-1zM520 524h1v1h-1zM522 524h1v1h-1zM521 523h1v1h-1zM521 525h1v1h-1zM537 524h1v1h-1zM539 524h1v1h-1zM538 523h1v1h-1zM538 525h1v1h-1zM554 524h1v1h-1zM556 524h1v1h-1zM555 523h1v1h-1zM555 525h1v1h-1zM26 541h1v1h-1zM28 541h1v1h-1zM27 540h1v1h-1zM27 542h1v1h-1zM43 541h1v1h-1zM45 541h1v1h-1zM44 540h1v1h-1zM44 542h1v1h-1zM60 541h1v1h-1zM62 541h1v1h-1zM61 540h1v1h-1zM61 542h1v1h-1zM77 541h1v1h-1zM79 541h1v1h-1zM78 540h1v1h-1zM78 542h1v1h-1zM94 541h1v1h-1zM96 541h1v1h-1zM95 540h1v1h-1zM95 542h1v1h-1zM111 541h1v1h-1zM113 541h1v1h-1zM112 540h1v1h-1zM112 542h1v1h-1zM128 541h1v1h-1zM130 541h1v1h-1zM129 540h1v1h-1zM129 542h1v1h-1zM145 541h1v1h-1zM147 541h1v1h-1zM146 540h1v1h-1zM146 542h1v1h-1zM162 541h1v1h-1zM164 541h1v1h-1zM163 540h1v1h-1zM163 542h1v1h-1zM179 541h1v1h-1zM181 541h1v1h-1zM180 540h1v1h-1zM180 542h1v1h-1zM196 541h1v1h-1zM198 541h1v1h-1zM197 540h1v1h-1zM197 542h1v1h-1zM213 541h1v1h-1zM215 541h1v1h-1zM214 540h1v1h-1zM214 542h1v1h-1zM230 541h1v1h-1zM232 541h1v1h-1zM231 540h1v1h-1zM231 542h1v1h-1zM248 541h1v1h-1zM250 541h1v1h-1zM249 540h1v1h-1zM249 542h1v1h-1zM265 541h1v1h-1zM267 541h1v1h-1zM266 540h1v1h-1zM266 542h1v1h-1zM282 541h1v1h-1zM284 541h1v1h-1zM283 540h1v1h-1zM283 542h1v1h-1zM299 541h1v1h-1zM301 541h1v1h-1zM300 540h1v1h-1zM300 542h1v1h-1zM316 541h1v1h-1zM318 541h1v1h-1zM317 540h1v1h-1zM317 542h1v1h-1zM333 541h1v1h-1zM335 541h1v1h-1zM334 540h1v1h-1zM334 542h1v1h-1zM350 541h1v1h-1zM352 541h1v1h-1zM351 540h1v1h-1zM351 542h1v1h-1zM367 541h1v1h-1zM369 541h1v1h-1zM368 540h1v1h-1zM368 542h1v1h-1zM384 541h1v1h-1zM386 541h1v1h-1zM385 540h1v1h-1zM385 542h1v1h-1zM401 541h1v1h-1zM403 541h1v1h-1zM402 540h1v1h-1zM402 542h1v1h-1zM418 541h1v1h-1zM420 541h1v1h-1zM419 540h1v1h-1zM419 542h1v1h-1zM435 541h1v1h-1zM437 541h1v1h-1zM436 540h1v1h-1zM436 542h1v1h-1zM452 541h1v1h-1zM454 541h1v1h-1zM453 540h1v1h-1zM453 542h1v1h-1zM469 541h1v1h-1zM471 541h1v1h-1zM470 540h1v1h-1zM470 542h1v1h-1zM486 541h1v1h-1zM488 541h1v1h-1zM487 540h1v1h-1zM487 542h1v1h-1zM503 541h1v1h-1zM505 541h1v1h-1zM504 540h1v1h-1zM504 542h1v1h-1zM520 541h1v1h-1zM522 541h1v1h-1zM521 540h1v1h-1zM521 542h1v1h-1zM537 541h1v1h-1zM539 541h1v1h-1zM538 540h1v1h-1zM538 542h1v1h-1zM554 541h1v1h-1zM556 541h1v1h-1zM555 540h1v1h-1zM555 542h1v1h-1zM26 558h1v1h-1zM28 558h1v1h-1zM27 557h1v1h-1zM27 559h1v1h-1zM43 558h1v1h-1zM45 558h1v1h-1zM44 557h1v1h-1zM44 559h1v1h-1zM60 558h1v1h-1zM62 558h1v1h-1zM61 557h1v1h-1zM61 559h1v1h-1zM77 558h1v1h-1zM79 558h1v1h-1zM78 557h1v1h-1zM78 559h1v1h-1zM94 558h1v1h-1zM96 558h1v1h-1zM95 557h1v1h-1zM95 559h1v1h-1zM111 558h1v1h-1zM113 558h1v1h-1zM112 557h1v1h-1zM112 559h1v1h-1zM128 558h1v1h-1zM130 558h1v1h-1zM129 557h1v1h-1zM129 559h1v1h-1zM145 558h1v1h-1zM147 558h1v1h-1zM146 557h1v1h-1zM146 559h1v1h-1zM162 558h1v1h-1zM164 558h1v1h-1zM163 557h1v1h-1zM163 559h1v1h-1zM179 558h1v1h-1zM181 558h1v1h-1zM180 557h1v1h-1zM180 559h1v1h-1zM196 558h1v1h-1zM198 558h1v1h-1zM197 557h1v1h-1zM197 559h1v1h-1zM213 558h1v1h-1zM215 558h1v1h-1zM214 557h1v1h-1zM214 559h1v1h-1zM230 558h1v1h-1zM232 558h1v1h-1zM231 557h1v1h-1zM231 559h1v1h-1zM248 558h1v1h-1zM250 558h1v1h-1zM249 557h1v1h-1zM249 559h1v1h-1zM265 558h1v1h-1zM267 558h1v1h-1zM266 557h1v1h-1zM266 559h1v1h-1zM282 558h1v1h-1zM284 558h1v1h-1zM283 557h1v1h-1zM283 559h1v1h-1zM299 558h1v1h-1zM301 558h1v1h-1zM300 557h1v1h-1zM300 559h1v1h-1zM316 558h1v1h-1zM318 558h1v1h-1zM317 557h1v1h-1zM317 559h1v1h-1zM333 558h1v1h-1zM335 558h1v1h-1zM334 557h1v1h-1zM334 559h1v1h-1zM350 558h1v1h-1zM352 558h1v1h-1zM351 557h1v1h-1zM351 559h1v1h-1zM367 558h1v1h-1zM369 558h1v1h-1zM368 557h1v1h-1zM368 559h1v1h-1zM384 558h1v1h-1zM386 558h1v1h-1zM385 557h1v1h-1zM385 559h1v1h-1zM401 558h1v1h-1zM403 558h1v1h-1zM402 557h1v1h-1zM402 559h1v1h-1zM418 558h1v1h-1zM420 558h1v1h-1zM419 557h1v1h-1zM419 559h1v1h-1zM435 558h1v1h-1zM437 558h1v1h-1zM436 557h1v1h-1zM436 559h1v1h-1zM452 558h1v1h-1zM454 558h1v1h-1zM453 557h1v1h-1zM453 559h1v1h-1zM469 558h1v1h-1zM471 558h1v1h-1zM470 557h1v1h-1zM470 559h1v1h-1zM486 558h1v1h-1zM488 558h1v1h-1zM487 557h1v1h-1zM487 559h1v1h-1zM503 558h1v1h-1zM505 558h1v1h-1zM504 557h1v1h-1zM504 559h1v1h-1zM520 558h1v1h-1zM522 558h1v1h-1zM521 557h1v1h-1zM521 559h1v1h-1zM537 558h1v1h-1zM539 558h1v1h-1zM538 557h1v1h-1zM538 559h1v1h-1zM554 558h1v1h-1zM556 558h1v1h-1zM555 557h1v1h-1zM555 559h1v1h-1zM26 575h1v1h-1zM28 575h1v1h-1zM27 574h1v1h-1zM27 576h1v1h-1zM43 575h1v1h-1zM45 575h1v1h-1zM44 574h1v1h-1zM44 576h1v1h-1zM60 575h1v1h-1zM62 575h1v1h-1zM61 574h1v1h-1zM61 576h1v1h-1zM77 575h1v1h-1zM79 575h1v1h-1zM78 574h1v1h-1zM78 576h1v1h-1zM94 575h1v1h-1zM96 575h1v1h-1zM95 574h1v1h-1zM95 576h1v1h-1zM111 575h1v1h-1zM113 575h1v1h-1zM112 574h1v1h-1zM112 576h1v1h-1zM128 575h1v1h-1zM130 575h1v1h-1zM129 574h1v1h-1zM129 576h1v1h-1zM145 575h1v1h-1zM147 575h1v1h-1zM146 574h1v1h-1zM146 576h1v1h-1zM162 575h1v1h-1zM164 575h1v1h-1zM163 574h1v1h-1zM163 576h1v1h-1zM179 575h1v1h-1zM181 575h1v1h-1zM180 574h1v1h-1zM180 576h1v1h-1zM196 575h1v1h-1zM198 575h1v1h-1zM197 574h1v1h-1zM197 576h1v1h-1zM213 575h1v1h-1zM215 575h1v1h-1zM214 574h1v1h-1zM214 576h1v1h-1zM230 575h1v1h-1zM232 575h1v1h-1zM231 574h1v1h-1zM231 576h1v1h-1zM248 575h1v1h-1zM250 575h1v1h-1zM249 574h1v1h-1zM249 576h1v1h-1zM265 575h1v1h-1zM267 575h1v1h-1zM266 574h1v1h-1zM266 576h1v1h-1zM282 575h1v1h-1zM284 575h1v1h-1zM283 574h1v1h-1zM283 576h1v1h-1zM299 575h1v1h-1zM301 575h1v1h-1zM300 574h1v1h-1zM300 576h1v1h-1zM316 575h1v1h-1zM318 575h1v1h-1zM317 574h1v1h-1zM317 576h1v1h-1zM333 575h1v1h-1zM335 575h1v1h-1zM334 574h1v1h-1zM334 576h1v1h-1zM350 575h1v1h-1zM352 575h1v1h-1zM351 574h1v1h-1zM351 576h1v1h-1zM367 575h1v1h-1zM369 575h1v1h-1zM368 574h1v1h-1zM368 576h1v1h-1zM384 575h1v1h-1zM386 575h1v1h-1zM385 574h1v1h-1zM385 576h1v1h-1zM401 575h1v1h-1zM403 575h1v1h-1zM402 574h1v1h-1zM402 576h1v1h-1zM418 575h1v1h-1zM420 575h1v1h-1zM419 574h1v1h-1zM419 576h1v1h-1zM435 575h1v1h-1zM437 575h1v1h-1zM436 574h1v1h-1zM436 576h1v1h-1zM452 575h1v1h-1zM454 575h1v1h-1zM453 574h1v1h-1zM453 576h1v1h-1zM469 575h1v1h-1zM471 575h1v1h-1zM470 574h1v1h-1zM470 576h1v1h-1zM486 575h1v1h-1zM488 575h1v1h-1zM487 574h1v1h-1zM487 576h1v1h-1zM503 575h1v1h-1zM505 575h1v1h-1zM504 574h1v1h-1zM504 576h1v1h-1zM520 575h1v1h-1zM522 575h1v1h-1zM521 574h1v1h-1zM521 576h1v1h-1zM537 575h1v1h-1zM539 575h1v1h-1zM538 574h1v1h-1zM538 576h1v1h-1zM554 575h1v1h-1zM556 575h1v1h-1zM555 574h1v1h-1zM555 576h1v1h-1zM26 592h1v1h-1zM28 592h1v1h-1zM27 591h1v1h-1zM27 593h1v1h-1zM43 592h1v1h-1zM45 592h1v1h-1zM44 591h1v1h-1zM44 593h1v1h-1zM60 592h1v1h-1zM62 592h1v1h-1zM61 591h1v1h-1zM61 593h1v1h-1zM77 592h1v1h-1zM79 592h1v1h-1zM78 591h1v1h-1zM78 593h1v1h-1zM94 592h1v1h-1zM96 592h1v1h-1zM95 591h1v1h-1zM95 593h1v1h-1zM111 592h1v1h-1zM113 592h1v1h-1zM112 591h1v1h-1zM112 593h1v1h-1zM128 592h1v1h-1zM130 592h1v1h-1zM129 591h1v1h-1zM129 593h1v1h-1zM145 592h1v1h-1zM147 592h1v1h-1zM146 591h1v1h-1zM146 593h1v1h-1zM162 592h1v1h-1zM164 592h1v1h-1zM163 591h1v1h-1zM163 593h1v1h-1zM179 592h1v1h-1zM181 592h1v1h-1zM180 591h1v1h-1zM180 593h1v1h-1zM196 592h1v1h-1zM198 592h1v1h-1zM197 591h1v1h-1zM197 593h1v1h-1zM213 592h1v1h-1zM215 592h1v1h-1zM214 591h1v1h-1zM214 593h1v1h-1zM230 592h1v1h-1zM232 592h1v1h-1zM231 591h1v1h-1zM231 593h1v1h-1zM248 592h1v1h-1zM250 592h1v1h-1zM249 591h1v1h-1zM249 593h1v1h-1zM265 592h1v1h-1zM267 592h1v1h-1zM266 591h1v1h-1zM266 593h1v1h-1zM282 592h1v1h-1zM284 592h1v1h-1zM283 591h1v1h-1zM283 593h1v1h-1zM299 592h1v1h-1zM301 592h1v1h-1zM300 591h1v1h-1zM300 593h1v1h-1zM316 592h1v1h-1zM318 592h1v1h-1zM317 591h1v1h-1zM317 593h1v1h-1zM333 592h1v1h-1zM335 592h1v1h-1zM334 591h1v1h-1zM334 593h1v1h-1zM350 592h1v1h-1zM352 592h1v1h-1zM351 591h1v1h-1zM351 593h1v1h-1zM367 592h1v1h-1zM369 592h1v1h-1zM368 591h1v1h-1zM368 593h1v1h-1zM384 592h1v1h-1zM386 592h1v1h-1zM385 591h1v1h-1zM385 593h1v1h-1zM401 592h1v1h-1zM403 592h1v1h-1zM402 591h1v1h-1zM402 593h1v1h-1zM418 592h1v1h-1zM420 592h1v1h-1zM419 591h1v1h-1zM419 593h1v1h-1zM435 592h1v1h-1zM437 592h1v1h-1zM436 591h1v1h-1zM436 593h1v1h-1zM452 592h1v1h-1zM454 592h1v1h-1zM453 591h1v1h-1zM453 593h1v1h-1zM469 592h1v1h-1zM471 592h1v1h-1zM470 591h1v1h-1zM470 593h1v1h-1zM486 592h1v1h-1zM488 592h1v1h-1zM487 591h1v1h-1zM487 593h1v1h-1zM503 592h1v1h-1zM505 592h1v1h-1zM504 591h1v1h-1zM504 593h1v1h-1zM520 592h1v1h-1zM522 592h1v1h-1zM521 591h1v1h-1zM521 593h1v1h-1zM537 592h1v1h-1zM539 592h1v1h-1zM538 591h1v1h-1zM538 593h1v1h-1zM554 592h1v1h-1zM556 592h1v1h-1zM555 591h1v1h-1zM555 593h1v1h-1zM26 609h1v1h-1zM28 609h1v1h-1zM27 608h1v1h-1zM27 610h1v1h-1zM43 609h1v1h-1zM45 609h1v1h-1zM44 608h1v1h-1zM44 610h1v1h-1zM60 609h1v1h-1zM62 609h1v1h-1zM61 608h1v1h-1zM61 610h1v1h-1zM77 609h1v1h-1zM79 609h1v1h-1zM78 608h1v1h-1zM78 610h1v1h-1zM94 609h1v1h-1zM96 609h1v1h-1zM95 608h1v1h-1zM95 610h1v1h-1zM111 609h1v1h-1zM113 609h1v1h-1zM112 608h1v1h-1zM112 610h1v1h-1zM128 609h1v1h-1zM130 609h1v1h-1zM129 608h1v1h-1zM129 610h1v1h-1zM145 609h1v1h-1zM147 609h1v1h-1zM146 608h1v1h-1zM146 610h1v1h-1zM162 609h1v1h-1zM164 609h1v1h-1zM163 608h1v1h-1zM163 610h1v1h-1zM179 609h1v1h-1zM181 609h1v1h-1zM180 608h1v1h-1zM180 610h1v1h-1zM196 609h1v1h-1zM198 609h1v1h-1zM197 608h1v1h-1zM197 610h1v1h-1zM213 609h1v1h-1zM215 609h1v1h-1zM214 608h1v1h-1zM214 610h1v1h-1zM230 609h1v1h-1zM232 609h1v1h-1zM231 608h1v1h-1zM231 610h1v1h-1zM248 609h1v1h-1zM250 609h1v1h-1zM249 608h1v1h-1zM249 610h1v1h-1zM265 609h1v1h-1zM267 609h1v1h-1zM266 608h1v1h-1zM266 610h1v1h-1zM282 609h1v1h-1zM284 609h1v1h-1zM283 608h1v1h-1zM283 610h1v1h-1zM299 609h1v1h-1zM301 609h1v1h-1zM300 608h1v1h-1zM300 610h1v1h-1zM316 609h1v1h-1zM318 609h1v1h-1zM317 608h1v1h-1zM317 610h1v1h-1zM333 609h1v1h-1zM335 609h1v1h-1zM334 608h1v1h-1zM334 610h1v1h-1zM350 609h1v1h-1zM352 609h1v1h-1zM351 608h1v1h-1zM351 610h1v1h-1zM367 609h1v1h-1zM369 609h1v1h-1zM368 608h1v1h-1zM368 610h1v1h-1zM384 609h1v1h-1zM386 609h1v1h-1zM385 608h1v1h-1zM385 610h1v1h-1zM401 609h1v1h-1zM403 609h1v1h-1zM402 608h1v1h-1zM402 610h1v1h-1zM418 609h1v1h-1zM420 609h1v1h-1zM419 608h1v1h-1zM419 610h1v1h-1zM435 609h1v1h-1zM437 609h1v1h-1zM436 608h1v1h-1zM436 610h1v1h-1zM452 609h1v1h-1zM454 609h1v1h-1zM453 608h1v1h-1zM453 610h1v1h-1zM469 609h1v1h-1zM471 609h1v1h-1zM470 608h1v1h-1zM470 610h1v1h-1zM486 609h1v1h-1zM488 609h1v1h-1zM487 608h1v1h-1zM487 610h1v1h-1zM503 609h1v1h-1zM505 609h1v1h-1zM504 608h1v1h-1zM504 610h1v1h-1zM520 609h1v1h-1zM522 609h1v1h-1zM521 608h1v1h-1zM521 610h1v1h-1zM537 609h1v1h-1zM539 609h1v1h-1zM538 608h1v1h-1zM538 610h1v1h-1zM554 609h1v1h-1zM556 609h1v1h-1zM555 608h1v1h-1zM555 610h1v1h-1zM26 626h1v1h-1zM28 626h1v1h-1zM27 625h1v1h-1zM27 627h1v1h-1zM43 626h1v1h-1zM45 626h1v1h-1zM44 625h1v1h-1zM44 627h1v1h-1zM60 626h1v1h-1zM62 626h1v1h-1zM61 625h1v1h-1zM61 627h1v1h-1zM77 626h1v1h-1zM79 626h1v1h-1zM78 625h1v1h-1zM78 627h1v1h-1zM94 626h1v1h-1zM96 626h1v1h-1zM95 625h1v1h-1zM95 627h1v1h-1zM111 626h1v1h-1zM113 626h1v1h-1zM112 625h1v1h-1zM112 627h1v1h-1zM128 626h1v1h-1zM130 626h1v1h-1zM129 625h1v1h-1zM129 627h1v1h-1zM145 626h1v1h-1zM147 626h1v1h-1zM146 625h1v1h-1zM146 627h1v1h-1zM162 626h1v1h-1zM164 626h1v1h-1zM163 625h1v1h-1zM163 627h1v1h-1zM179 626h1v1h-1zM181 626h1v1h-1zM180 625h1v1h-1zM180 627h1v1h-1zM196 626h1v1h-1zM198 626h1v1h-1zM197 625h1v1h-1zM197 627h1v1h-1zM213 626h1v1h-1zM215 626h1v1h-1zM214 625h1v1h-1zM214 627h1v1h-1zM230 626h1v1h-1zM232 626h1v1h-1zM231 625h1v1h-1zM231 627h1v1h-1zM248 626h1v1h-1zM250 626h1v1h-1zM249 625h1v1h-1zM249 627h1v1h-1zM265 626h1v1h-1zM267 626h1v1h-1zM266 625h1v1h-1zM266 627h1v1h-1zM282 626h1v1h-1zM284 626h1v1h-1zM283 625h1v1h-1zM283 627h1v1h-1zM299 626h1v1h-1zM301 626h1v1h-1zM300 625h1v1h-1zM300 627h1v1h-1zM316 626h1v1h-1zM318 626h1v1h-1zM317 625h1v1h-1zM317 627h1v1h-1zM333 626h1v1h-1zM335 626h1v1h-1zM334 625h1v1h-1zM334 627h1v1h-1zM350 626h1v1h-1zM352 626h1v1h-1zM351 625h1v1h-1zM351 627h1v1h-1zM367 626h1v1h-1zM369 626h1v1h-1zM368 625h1v1h-1zM368 627h1v1h-1zM384 626h1v1h-1zM386 626h1v1h-1zM385 625h1v1h-1zM385 627h1v1h-1zM401 626h1v1h-1zM403 626h1v1h-1zM402 625h1v1h-1zM402 627h1v1h-1zM418 626h1v1h-1zM420 626h1v1h-1zM419 625h1v1h-1zM419 627h1v1h-1zM435 626h1v1h-1zM437 626h1v1h-1zM436 625h1v1h-1zM436 627h1v1h-1zM452 626h1v1h-1zM454 626h1v1h-1zM453 625h1v1h-1zM453 627h1v1h-1zM469 626h1v1h-1zM471 626h1v1h-1zM470 625h1v1h-1zM470 627h1v1h-1zM486 626h1v1h-1zM488 626h1v1h-1zM487 625h1v1h-1zM487 627h1v1h-1zM503 626h1v1h-1zM505 626h1v1h-1zM504 625h1v1h-1zM504 627h1v1h-1zM520 626h1v1h-1zM522 626h1v1h-1zM521 625h1v1h-1zM521 627h1v1h-1zM537 626h1v1h-1zM539 626h1v1h-1zM538 625h1v1h-1zM538 627h1v1h-1zM554 626h1v1h-1zM556 626h1v1h-1zM555 625h1v1h-1zM555 627h1v1h-1zM26 643h1v1h-1zM28 643h1v1h-1zM27 642h1v1h-1zM27 644h1v1h-1zM43 643h1v1h-1zM45 643h1v1h-1zM44 642h1v1h-1zM44 644h1v1h-1zM60 643h1v1h-1zM62 643h1v1h-1zM61 642h1v1h-1zM61 644h1v1h-1zM77 643h1v1h-1zM79 643h1v1h-1zM78 642h1v1h-1zM78 644h1v1h-1zM94 643h1v1h-1zM96 643h1v1h-1zM95 642h1v1h-1zM95 644h1v1h-1zM111 643h1v1h-1zM113 643h1v1h-1zM112 642h1v1h-1zM112 644h1v1h-1zM128 643h1v1h-1zM130 643h1v1h-1zM129 642h1v1h-1zM129 644h1v1h-1zM145 643h1v1h-1zM147 643h1v1h-1zM146 642h1v1h-1zM146 644h1v1h-1zM162 643h1v1h-1zM164 643h1v1h-1zM163 642h1v1h-1zM163 644h1v1h-1zM179 643h1v1h-1zM181 643h1v1h-1zM180 642h1v1h-1zM180 644h1v1h-1zM196 643h1v1h-1zM198 643h1v1h-1zM197 642h1v1h-1zM197 644h1v1h-1zM213 643h1v1h-1zM215 643h1v1h-1zM214 642h1v1h-1zM214 644h1v1h-1zM230 643h1v1h-1zM232 643h1v1h-1zM231 642h1v1h-1zM231 644h1v1h-1zM248 643h1v1h-1zM250 643h1v1h-1zM249 642h1v1h-1zM249 644h1v1h-1zM265 643h1v1h-1zM267 643h1v1h-1zM266 642h1v1h-1zM266 644h1v1h-1zM282 643h1v1h-1zM284 643h1v1h-1zM283 642h1v1h-1zM283 644h1v1h-1zM299 643h1v1h-1zM301 643h1v1h-1zM300 642h1v1h-1zM300 644h1v1h-1zM316 643h1v1h-1zM318 643h1v1h-1zM317 642h1v1h-1zM317 644h1v1h-1zM333 643h1v1h-1zM335 643h1v1h-1zM334 642h1v1h-1zM334 644h1v1h-1zM350 643h1v1h-1zM352 643h1v1h-1zM351 642h1v1h-1zM351 644h1v1h-1zM367 643h1v1h-1zM369 643h1v1h-1zM368 642h1v1h-1zM368 644h1v1h-1zM384 643h1v1h-1zM386 643h1v1h-1zM385 642h1v1h-1zM385 644h1v1h-1zM401 643h1v1h-1zM403 643h1v1h-1zM402 642h1v1h-1zM402 644h1v1h-1zM418 643h1v1h-1zM420 643h1v1h-1zM419 642h1v1h-1zM419 644h1v1h-1zM435 643h1v1h-1zM437 643h1v1h-1zM436 642h1v1h-1zM436 644h1v1h-1zM452 643h1v1h-1zM454 643h1v1h-1zM453 642h1v1h-1zM453 644h1v1h-1zM469 643h1v1h-1zM471 643h1v1h-1zM470 642h1v1h-1zM470 644h1v1h-1zM486 643h1v1h-1zM488 643h1v1h-1zM487 642h1v1h-1zM487 644h1v1h-1zM503 643h1v1h-1zM505 643h1v1h-1zM504 642h1v1h-1zM504 644h1v1h-1zM520 643h1v1h-1zM522 643h1v1h-1zM521 642h1v1h-1zM521 644h1v1h-1zM537 643h1v1h-1zM539 643h1v1h-1zM538 642h1v1h-1zM538 644h1v1h-1zM554 643h1v1h-1zM556 643h1v1h-1zM555 642h1v1h-1zM555 644h1v1h-1zM26 660h1v1h-1zM28 660h1v1h-1zM27 659h1v1h-1zM27 661h1v1h-1zM43 660h1v1h-1zM45 660h1v1h-1zM44 659h1v1h-1zM44 661h1v1h-1zM60 660h1v1h-1zM62 660h1v1h-1zM61 659h1v1h-1zM61 661h1v1h-1zM77 660h1v1h-1zM79 660h1v1h-1zM78 659h1v1h-1zM78 661h1v1h-1zM94 660h1v1h-1zM96 660h1v1h-1zM95 659h1v1h-1zM95 661h1v1h-1zM111 660h1v1h-1zM113 660h1v1h-1zM112 659h1v1h-1zM112 661h1v1h-1zM128 660h1v1h-1zM130 660h1v1h-1zM129 659h1v1h-1zM129 661h1v1h-1zM145 660h1v1h-1zM147 660h1v1h-1zM146 659h1v1h-1zM146 661h1v1h-1zM162 660h1v1h-1zM164 660h1v1h-1zM163 659h1v1h-1zM163 661h1v1h-1zM179 660h1v1h-1zM181 660h1v1h-1zM180 659h1v1h-1zM180 661h1v1h-1zM196 660h1v1h-1zM198 660h1v1h-1zM197 659h1v1h-1zM197 661h1v1h-1zM213 660h1v1h-1zM215 660h1v1h-1zM214 659h1v1h-1zM214 661h1v1h-1zM230 660h1v1h-1zM232 660h1v1h-1zM231 659h1v1h-1zM231 661h1v1h-1zM248 660h1v1h-1zM250 660h1v1h-1zM249 659h1v1h-1zM249 661h1v1h-1zM265 660h1v1h-1zM267 660h1v1h-1zM266 659h1v1h-1zM266 661h1v1h-1zM282 660h1v1h-1zM284 660h1v1h-1zM283 659h1v1h-1zM283 661h1v1h-1zM299 660h1v1h-1zM301 660h1v1h-1zM300 659h1v1h-1zM300 661h1v1h-1zM316 660h1v1h-1zM318 660h1v1h-1zM317 659h1v1h-1zM317 661h1v1h-1zM333 660h1v1h-1zM335 660h1v1h-1zM334 659h1v1h-1zM334 661h1v1h-1zM350 660h1v1h-1zM352 660h1v1h-1zM351 659h1v1h-1zM351 661h1v1h-1zM367 660h1v1h-1zM369 660h1v1h-1zM368 659h1v1h-1zM368 661h1v1h-1zM384 660h1v1h-1zM386 660h1v1h-1zM385 659h1v1h-1zM385 661h1v1h-1zM401 660h1v1h-1zM403 660h1v1h-1zM402 659h1v1h-1zM402 661h1v1h-1zM418 660h1v1h-1zM420 660h1v1h-1zM419 659h1v1h-1zM419 661h1v1h-1zM435 660h1v1h-1zM437 660h1v1h-1zM436 659h1v1h-1zM436 661h1v1h-1zM452 660h1v1h-1zM454 660h1v1h-1zM453 659h1v1h-1zM453 661h1v1h-1zM469 660h1v1h-1zM471 660h1v1h-1zM470 659h1v1h-1zM470 661h1v1h-1zM486 660h1v1h-1zM488 660h1v1h-1zM487 659h1v1h-1zM487 661h1v1h-1zM503 660h1v1h-1zM505 660h1v1h-1zM504 659h1v1h-1zM504 661h1v1h-1zM520 660h1v1h-1zM522 660h1v1h-1zM521 659h1v1h-1zM521 661h1v1h-1zM537 660h1v1h-1zM539 660h1v1h-1zM538 659h1v1h-1zM538 661h1v1h-1zM554 660h1v1h-1zM556 660h1v1h-1zM555 659h1v1h-1zM555 661h1v1h-1zM26 677h1v1h-1zM28 677h1v1h-1zM27 676h1v1h-1zM27 678h1v1h-1zM43 677h1v1h-1zM45 677h1v1h-1zM44 676h1v1h-1zM44 678h1v1h-1zM60 677h1v1h-1zM62 677h1v1h-1zM61 676h1v1h-1zM61 678h1v1h-1zM77 677h1v1h-1zM79 677h1v1h-1zM78 676h1v1h-1zM78 678h1v1h-1zM94 677h1v1h-1zM96 677h1v1h-1zM95 676h1v1h-1zM95 678h1v1h-1zM111 677h1v1h-1zM113 677h1v1h-1zM112 676h1v1h-1zM112 678h1v1h-1zM128 677h1v1h-1zM130 677h1v1h-1zM129 676h1v1h-1zM129 678h1v1h-1zM145 677h1v1h-1zM147 677h1v1h-1zM146 676h1v1h-1zM146 678h1v1h-1zM162 677h1v1h-1zM164 677h1v1h-1zM163 676h1v1h-1zM163 678h1v1h-1zM179 677h1v1h-1zM181 677h1v1h-1zM180 676h1v1h-1zM180 678h1v1h-1zM196 677h1v1h-1zM198 677h1v1h-1zM197 676h1v1h-1zM197 678h1v1h-1zM213 677h1v1h-1zM215 677h1v1h-1zM214 676h1v1h-1zM214 678h1v1h-1zM230 677h1v1h-1zM232 677h1v1h-1zM231 676h1v1h-1zM231 678h1v1h-1zM248 677h1v1h-1zM250 677h1v1h-1zM249 676h1v1h-1zM249 678h1v1h-1zM265 677h1v1h-1zM267 677h1v1h-1zM266 676h1v1h-1zM266 678h1v1h-1zM282 677h1v1h-1zM284 677h1v1h-1zM283 676h1v1h-1zM283 678h1v1h-1zM299 677h1v1h-1zM301 677h1v1h-1zM300 676h1v1h-1zM300 678h1v1h-1zM316 677h1v1h-1zM318 677h1v1h-1zM317 676h1v1h-1zM317 678h1v1h-1zM333 677h1v1h-1zM335 677h1v1h-1zM334 676h1v1h-1zM334 678h1v1h-1zM350 677h1v1h-1zM352 677h1v1h-1zM351 676h1v1h-1zM351 678h1v1h-1zM367 677h1v1h-1zM369 677h1v1h-1zM368 676h1v1h-1zM368 678h1v1h-1zM384 677h1v1h-1zM386 677h1v1h-1zM385 676h1v1h-1zM385 678h1v1h-1zM401 677h1v1h-1zM403 677h1v1h-1zM402 676h1v1h-1zM402 678h1v1h-1zM418 677h1v1h-1zM420 677h1v1h-1zM419 676h1v1h-1zM419 678h1v1h-1zM435 677h1v1h-1zM437 677h1v1h-1zM436 676h1v1h-1zM436 678h1v1h-1zM452 677h1v1h-1zM454 677h1v1h-1zM453 676h1v1h-1zM453 678h1v1h-1zM469 677h1v1h-1zM471 677h1v1h-1zM470 676h1v1h-1zM470 678h1v1h-1zM486 677h1v1h-1zM488 677h1v1h-1zM487 676h1v1h-1zM487 678h1v1h-1zM503 677h1v1h-1zM505 677h1v1h-1zM504 676h1v1h-1zM504 678h1v1h-1zM520 677h1v1h-1zM522 677h1v1h-1zM521 676h1v1h-1zM521 678h1v1h-1zM537 677h1v1h-1zM539 677h1v1h-1zM538 676h1v1h-1zM538 678h1v1h-1zM554 677h1v1h-1zM556 677h1v1h-1zM555 676h1v1h-1zM555 678h1v1h-1zM26 694h1v1h-1zM28 694h1v1h-1zM27 693h1v1h-1zM27 695h1v1h-1zM43 694h1v1h-1zM45 694h1v1h-1zM44 693h1v1h-1zM44 695h1v1h-1zM60 694h1v1h-1zM62 694h1v1h-1zM61 693h1v1h-1zM61 695h1v1h-1zM77 694h1v1h-1zM79 694h1v1h-1zM78 693h1v1h-1zM78 695h1v1h-1zM94 694h1v1h-1zM96 694h1v1h-1zM95 693h1v1h-1zM95 695h1v1h-1zM111 694h1v1h-1zM113 694h1v1h-1zM112 693h1v1h-1zM112 695h1v1h-1zM128 694h1v1h-1zM130 694h1v1h-1zM129 693h1v1h-1zM129 695h1v1h-1zM145 694h1v1h-1zM147 694h1v1h-1zM146 693h1v1h-1zM146 695h1v1h-1zM162 694h1v1h-1zM164 694h1v1h-1zM163 693h1v1h-1zM163 695h1v1h-1zM179 694h1v1h-1zM181 694h1v1h-1zM180 693h1v1h-1zM180 695h1v1h-1zM196 694h1v1h-1zM198 694h1v1h-1zM197 693h1v1h-1zM197 695h1v1h-1zM213 694h1v1h-1zM215 694h1v1h-1zM214 693h1v1h-1zM214 695h1v1h-1zM230 694h1v1h-1zM232 694h1v1h-1zM231 693h1v1h-1zM231 695h1v1h-1zM248 694h1v1h-1zM250 694h1v1h-1zM249 693h1v1h-1zM249 695h1v1h-1zM265 694h1v1h-1zM267 694h1v1h-1zM266 693h1v1h-1zM266 695h1v1h-1zM282 694h1v1h-1zM284 694h1v1h-1zM283 693h1v1h-1zM283 695h1v1h-1zM299 694h1v1h-1zM301 694h1v1h-1zM300 693h1v1h-1zM300 695h1v1h-1zM316 694h1v1h-1zM318 694h1v1h-1zM317 693h1v1h-1zM317 695h1v1h-1zM333 694h1v1h-1zM335 694h1v1h-1zM334 693h1v1h-1zM334 695h1v1h-1zM350 694h1v1h-1zM352 694h1v1h-1zM351 693h1v1h-1zM351 695h1v1h-1zM367 694h1v1h-1zM369 694h1v1h-1zM368 693h1v1h-1zM368 695h1v1h-1zM384 694h1v1h-1zM386 694h1v1h-1zM385 693h1v1h-1zM385 695h1v1h-1zM401 694h1v1h-1zM403 694h1v1h-1zM402 693h1v1h-1zM402 695h1v1h-1zM418 694h1v1h-1zM420 694h1v1h-1zM419 693h1v1h-1zM419 695h1v1h-1zM435 694h1v1h-1zM437 694h1v1h-1zM436 693h1v1h-1zM436 695h1v1h-1zM452 694h1v1h-1zM454 694h1v1h-1zM453 693h1v1h-1zM453 695h1v1h-1zM469 694h1v1h-1zM471 694h1v1h-1zM470 693h1v1h-1zM470 695h1v1h-1zM486 694h1v1h-1zM488 694h1v1h-1zM487 693h1v1h-1zM487 695h1v1h-1zM503 694h1v1h-1zM505 694h1v1h-1zM504 693h1v1h-1zM504 695h1v1h-1zM520 694h1v1h-1zM522 694h1v1h-1zM521 693h1v1h-1zM521 695h1v1h-1zM537 694h1v1h-1zM539 694h1v1h-1zM538 693h1v1h-1zM538 695h1v1h-1zM554 694h1v1h-1zM556 694h1v1h-1zM555 693h1v1h-1zM555 695h1v1h-1z" fill="#fff"/></svg>
<div style="left:573px;top:103px;width:16px;height:601px;background:#a8a8a8;"></div>
<div style="left:575px;top:687px;width:12px;height:2px;background:repeating-conic-gradient(#000000 0 25%,transparent 0 50%) -1px -1px/2px 2px"></div>
<div style="left:585px;top:118px;width:2px;height:571px;background:repeating-conic-gradient(#000000 0 25%,transparent 0 50%) -1px 0px/2px 2px"></div>
<div style="left:575px;top:118px;width:12px;height:2px;background:repeating-conic-gradient(#ffffff 0 25%,transparent 0 50%) -1px 0px/2px 2px"></div>
<div style="left:575px;top:118px;width:2px;height:571px;background:repeating-conic-gradient(#ffffff 0 25%,transparent 0 50%) -1px 0px/2px 2px"></div>
<div style="left:573px;top:702px;width:16px;height:2px;background:repeating-conic-gradient(#ffffff 0 25%,transparent 0 50%) -1px 0px/2px 2px"></div>
<div style="left:587px;top:103px;width:2px;height:601px;background:repeating-conic-gradient(#ffffff 0 25%,transparent 0 50%) -1px -1px/2px 2px"></div>
<div style="left:573px;top:103px;width:16px;height:2px;background:repeating-conic-gradient(#000000 0 25%,transparent 0 50%) -1px -1px/2px 2px"></div>
<div style="left:573px;top:103px;width:2px;height:601px;background:repeating-conic-gradient(#000000 0 25%,transparent 0 50%) -1px -1px/2px 2px"></div>
<svg style="left:0;top:0" width="798" height="829"><path d="M581.0 105.5L576.5 116.5" stroke="#fff" fill="none"/><path d="M581.0 105.5L586 116.5" stroke="#000" stroke-width="1.2" fill="none"/><rect x="576" y="116" width="10" height="1.6" fill="#000"/></svg>
<svg style="left:0;top:0" width="798" height="829"><path d="M576.5 690.5H585.5M576.5 690.5L581.0 701.5" stroke="#fff" fill="none"/><path d="M586 690.5L581.0 701.5" stroke="#000" stroke-width="1.3" fill="none"/></svg>
<div style="left:16px;top:704px;width:557px;height:16px;background:#a8a8a8;"></div>
<div style="left:31px;top:716px;width:527px;height:2px;background:repeating-conic-gradient(#000000 0 25%,transparent 0 50%) -1px 0px/2px 2px"></div>
<div style="left:556px;top:706px;width:2px;height:12px;background:repeating-conic-gradient(#000000 0 25%,transparent 0 50%) 0px 0px/2px 2px"></div>
<div style="left:31px;top:706px;width:527px;height:2px;background:repeating-conic-gradient(#ffffff 0 25%,transparent 0 50%) -1px 0px/2px 2px"></div>
<div style="left:31px;top:706px;width:2px;height:12px;background:repeating-conic-gradient(#ffffff 0 25%,transparent 0 50%) -1px 0px/2px 2px"></div>
<div style="left:16px;top:718px;width:557px;height:2px;background:repeating-conic-gradient(#ffffff 0 25%,transparent 0 50%) 0px 0px/2px 2px"></div>
<div style="left:571px;top:704px;width:2px;height:16px;background:repeating-conic-gradient(#ffffff 0 25%,transparent 0 50%) -1px 0px/2px 2px"></div>
<div style="left:16px;top:704px;width:557px;height:2px;background:repeating-conic-gradient(#000000 0 25%,transparent 0 50%) 0px 0px/2px 2px"></div>
<div style="left:16px;top:704px;width:2px;height:16px;background:repeating-conic-gradient(#000000 0 25%,transparent 0 50%) 0px 0px/2px 2px"></div>
<svg style="left:0;top:0" width="798" height="829"><path d="M29.5 706.5L18.5 712.0" stroke="#fff" fill="none"/><path d="M18.5 712.0L29.5 718" stroke="#000" stroke-width="1.2" fill="none"/><rect x="29" y="706" width="1.6" height="12" fill="#000"/></svg>
<svg style="left:0;top:0" width="798" height="829"><path d="M559.5 717.5V706.5L570.5 712.0" stroke="#fff" fill="none"/><path d="M570.5 712.0L559.5 718" stroke="#000" stroke-width="1.3" fill="none"/></svg>
<div style="left:573px;top:704px;width:16px;height:16px;background:#a8a8a8;"></div>
<div style="left:593px;top:82px;width:2px;height:641px;background:repeating-conic-gradient(#ffffff 0 25%,transparent 0 50%) -1px 0px/2px 2px"></div>
<div style="left:28px;top:153px;width:553px;height:543px;background:#70d8d8;"></div>
<div style="left:28px;top:153px;width:553px;height:1px;background:repeating-conic-gradient(#ffffff 0 25%,transparent 0 50%) 0px -1px/2px 2px"></div>
<div style="left:28px;top:695px;width:553px;height:1px;background:repeating-conic-gradient(#ffffff 0 25%,transparent 0 50%) 0px -1px/2px 2px"></div>
<div style="left:28px;top:153px;width:1px;height:543px;background:repeating-conic-gradient(#ffffff 0 25%,transparent 0 50%) 0px -1px/2px 2px"></div>
<div style="left:580px;top:153px;width:1px;height:543px;background:repeating-conic-gradient(#ffffff 0 25%,transparent 0 50%) 0px -1px/2px 2px"></div>
<div style="left:30px;top:155px;width:549px;height:1px;background:repeating-conic-gradient(#000000 0 25%,transparent 0 50%) 0px -1px/2px 2px"></div>
<div style="left:30px;top:155px;width:1px;height:539px;background:repeating-conic-gradient(#000000 0 25%,transparent 0 50%) 0px -1px/2px 2px"></div>
<div style="left:578px;top:155px;width:1px;height:539px;background:repeating-conic-gradient(#ffffff 0 25%,transparent 0 50%) 0px -1px/2px 2px"></div>
<div style="left:30px;top:693px;width:549px;height:1px;background:repeating-conic-gradient(#ffffff 0 25%,transparent 0 50%) 0px -1px/2px 2px"></div>
<div style="left:32px;top:157px;width:545px;height:1px;background:repeating-conic-gradient(#ffffff 0 25%,transparent 0 50%) 0px -1px/2px 2px"></div>
<div style="left:32px;top:157px;width:1px;height:17px;background:repeating-conic-gradient(#ffffff 0 25%,transparent 0 50%) 0px -1px/2px 2px"></div>
<div style="left:33px;top:173px;width:544px;height:1px;background:repeating-conic-gradient(#000000 0 25%,transparent 0 50%) -1px -1px/2px 2px"></div>
<div style="left:33px;top:173px;width:17px;height:1px;background:repeating-conic-gradient(#000000 0 25%,transparent 0 50%) -1px -1px/2px 2px"></div>
<div style="left:49px;top:157px;width:1px;height:17px;background:repeating-conic-gradient(#000000 0 25%,transparent 0 50%) -1px -1px/2px 2px"></div>
<div style="left:33px;top:157px;width:17px;height:1px;background:repeating-conic-gradient(#ffffff 0 25%,transparent 0 50%) -1px -1px/2px 2px"></div>
<div style="left:33px;top:157px;width:1px;height:17px;background:repeating-conic-gradient(#ffffff 0 25%,transparent 0 50%) -1px -1px/2px 2px"></div>
<div style="left:48px;top:157px;width:1px;height:17px;background:repeating-conic-gradient(#000000 0 25%,transparent 0 50%) 0px -1px/2px 2px"></div>
<svg style="left:0;top:0" width="798" height="829" shape-rendering="crispEdges"><path d="M35.5 162.5h9v4h-9" fill="none" stroke="#fff" stroke-dasharray="1 1"/><path d="M35.5 166.5h10v-4" fill="none" stroke="#000" stroke-dasharray="1 1"/></svg>
<span style="left:146.0px;top:159px;width:300px;text-align:center;font-size:12px;font-weight:bold;color:#000;line-height:12px;letter-spacing:0.3px">Schematic#4 top sheet1</span>
<div style="left:540px;top:173px;width:19px;height:1px;background:repeating-conic-gradient(#000000 0 25%,transparent 0 50%) 0px -1px/2px 2px"></div>
<div style="left:558px;top:157px;width:1px;height:17px;background:repeating-conic-gradient(#000000 0 25%,transparent 0 50%) 0px -1px/2px 2px"></div>
<div style="left:540px;top:157px;width:19px;height:1px;background:repeating-conic-gradient(#ffffff 0 25%,transparent 0 50%) 0px -1px/2px 2px"></div>
<div style="left:540px;top:157px;width:1px;height:17px;background:repeating-conic-gradient(#ffffff 0 25%,transparent 0 50%) 0px -1px/2px 2px"></div>
<div style="left:557px;top:157px;width:1px;height:17px;background:repeating-conic-gradient(#000000 0 25%,transparent 0 50%) -1px -1px/2px 2px"></div>
<div style="left:541px;top:157px;width:1px;height:17px;background:repeating-conic-gradient(#000000 0 25%,transparent 0 50%) -1px -1px/2px 2px"></div>
<svg style="left:0;top:0" width="798" height="829" shape-rendering="crispEdges"><path d="M548.5 163.5v1M548.5 166.5v1M550.5 163.5v1M550.5 166.5v1" stroke="#000" fill="none"/></svg>
<div style="left:559px;top:173px;width:18px;height:1px;background:repeating-conic-gradient(#000000 0 25%,transparent 0 50%) -1px -1px/2px 2px"></div>
<div style="left:576px;top:157px;width:1px;height:17px;background:repeating-conic-gradient(#000000 0 25%,transparent 0 50%) 0px -1px/2px 2px"></div>
<div style="left:559px;top:157px;width:18px;height:1px;background:repeating-conic-gradient(#ffffff 0 25%,transparent 0 50%) -1px -1px/2px 2px"></div>
<div style="left:559px;top:157px;width:1px;height:17px;background:repeating-conic-gradient(#ffffff 0 25%,transparent 0 50%) -1px -1px/2px 2px"></div>
<div style="left:575px;top:157px;width:1px;height:17px;background:repeating-conic-gradient(#000000 0 25%,transparent 0 50%) -1px -1px/2px 2px"></div>
<svg style="left:0;top:0" width="798" height="829" shape-rendering="crispEdges"><path d="M562.5 169.5v-7l1-1h8" fill="none" stroke="#fff" stroke-dasharray="1 1"/><path d="M563.5 170.5h8l1-1v-7" fill="none" stroke="#000" stroke-dasharray="1 1"/></svg>
<div style="left:32px;top:174px;width:545px;height:1px;background:repeating-conic-gradient(#ffffff 0 25%,transparent 0 50%) 0px 0px/2px 2px"></div>
<div style="left:31px;top:174px;width:1px;height:502px;background:#ffffff;"></div>
<div style="left:32px;top:175px;width:529px;height:501px;background:#000000;"></div>
<div style="left:561px;top:175px;width:16px;height:501px;background:#a8a8a8;"></div>
<div style="left:563px;top:660px;width:12px;height:2px;background:repeating-conic-gradient(#000000 0 25%,transparent 0 50%) -1px 0px/2px 2px"></div>
<div style="left:573px;top:189px;width:2px;height:473px;background:repeating-conic-gradient(#000000 0 25%,transparent 0 50%) -1px -1px/2px 2px"></div>
<div style="left:563px;top:189px;width:12px;height:2px;background:repeating-conic-gradient(#ffffff 0 25%,transparent 0 50%) -1px -1px/2px 2px"></div>
<div style="left:563px;top:189px;width:2px;height:473px;background:repeating-conic-gradient(#ffffff 0 25%,transparent 0 50%) -1px -1px/2px 2px"></div>
<div style="left:561px;top:674px;width:16px;height:2px;background:repeating-conic-gradient(#ffffff 0 25%,transparent 0 50%) -1px 0px/2px 2px"></div>
<div style="left:575px;top:175px;width:2px;height:501px;background:repeating-conic-gradient(#ffffff 0 25%,transparent 0 50%) -1px -1px/2px 2px"></div>
<div style="left:561px;top:175px;width:16px;height:2px;background:repeating-conic-gradient(#000000 0 25%,transparent 0 50%) -1px -1px/2px 2px"></div>
<div style="left:561px;top:175px;width:2px;height:501px;background:repeating-conic-gradient(#000000 0 25%,transparent 0 50%) -1px -1px/2px 2px"></div>
<svg style="left:0;top:0" width="798" height="829"><path d="M569.0 177.5L564.5 187.5" stroke="#fff" fill="none"/><path d="M569.0 177.5L574 187.5" stroke="#000" stroke-width="1.2" fill="none"/><rect x="564" y="187" width="10" height="1.6" fill="#000"/></svg>
<svg style="left:0;top:0" width="798" height="829"><path d="M564.5 663.5H573.5M564.5 663.5L569.0 673.5" stroke="#fff" fill="none"/><path d="M574 663.5L569.0 673.5" stroke="#000" stroke-width="1.3" fill="none"/></svg>
<div style="left:32px;top:676px;width:529px;height:16px;background:#a8a8a8;"></div>
<div style="left:46px;top:688px;width:501px;height:2px;background:repeating-conic-gradient(#000000 0 25%,transparent 0 50%) 0px 0px/2px 2px"></div>
<div style="left:545px;top:678px;width:2px;height:12px;background:repeating-conic-gradient(#000000 0 25%,transparent 0 50%) -1px 0px/2px 2px"></div>
<div style="left:46px;top:678px;width:501px;height:2px;background:repeating-conic-gradient(#ffffff 0 25%,transparent 0 50%) 0px 0px/2px 2px"></div>
<div style="left:46px;top:678px;width:2px;height:12px;background:repeating-conic-gradient(#ffffff 0 25%,transparent 0 50%) 0px 0px/2px 2px"></div>
<div style="left:32px;top:690px;width:529px;height:2px;background:repeating-conic-gradient(#ffffff 0 25%,transparent 0 50%) 0px 0px/2px 2px"></div>
<div style="left:559px;top:676px;width:2px;height:16px;background:repeating-conic-gradient(#ffffff 0 25%,transparent 0 50%) -1px 0px/2px 2px"></div>
<div style="left:32px;top:676px;width:529px;height:2px;background:repeating-conic-gradient(#000000 0 25%,transparent 0 50%) 0px 0px/2px 2px"></div>
<div style="left:32px;top:676px;width:2px;height:16px;background:repeating-conic-gradient(#000000 0 25%,transparent 0 50%) 0px 0px/2px 2px"></div>
<svg style="left:0;top:0" width="798" height="829"><path d="M44.5 678.5L34.5 684.0" stroke="#fff" fill="none"/><path d="M34.5 684.0L44.5 690" stroke="#000" stroke-width="1.2" fill="none"/><rect x="44" y="678" width="1.6" height="12" fill="#000"/></svg>
<svg style="left:0;top:0" width="798" height="829"><path d="M548.5 689.5V678.5L558.5 684.0" stroke="#fff" fill="none"/><path d="M558.5 684.0L548.5 690" stroke="#000" stroke-width="1.3" fill="none"/></svg>
<div style="left:561px;top:676px;width:16px;height:16px;background:#a8a8a8;"></div>
<div style="left:598px;top:86px;width:183px;height:126px;background:#ffffff;"></div>
<div style="left:599px;top:87px;width:181px;height:123px;background:#000000;"></div>
<span style="left:606px;top:215px;font-size:11px;font-weight:normal;color:#000;line-height:11px;">xor2/xor2</span>
<div style="left:592px;top:230px;width:195px;height:1px;background:repeating-conic-gradient(#000000 0 25%,transparent 0 50%) 0px 0px/2px 2px"></div>
<div style="left:594px;top:232px;width:193px;height:1px;background:repeating-conic-gradient(#ffffff 0 25%,transparent 0 50%) 0px 0px/2px 2px"></div>
<div style="left:598px;top:717px;width:184px;height:2px;background:repeating-conic-gradient(#ffffff 0 25%,transparent 0 50%) 0px -1px/2px 2px"></div>
<div style="left:780px;top:236px;width:2px;height:483px;background:repeating-conic-gradient(#ffffff 0 25%,transparent 0 50%) 0px 0px/2px 2px"></div>
<div style="left:598px;top:236px;width:184px;height:2px;background:repeating-conic-gradient(#000000 0 25%,transparent 0 50%) 0px 0px/2px 2px"></div>
<div style="left:598px;top:236px;width:2px;height:483px;background:repeating-conic-gradient(#000000 0 25%,transparent 0 50%) 0px 0px/2px 2px"></div>
<div style="left:600px;top:238px;width:180px;height:1px;background:repeating-conic-gradient(#ffffff 0 25%,transparent 0 50%) 0px 0px/2px 2px"></div>
<div style="left:600px;top:238px;width:1px;height:478px;background:repeating-conic-gradient(#ffffff 0 25%,transparent 0 50%) 0px 0px/2px 2px"></div>
<div style="left:778px;top:238px;width:2px;height:479px;background:repeating-conic-gradient(#000000 0 25%,transparent 0 50%) 0px 0px/2px 2px"></div>
<div style="left:600px;top:715px;width:180px;height:2px;background:repeating-conic-gradient(#000000 0 25%,transparent 0 50%) 0px -1px/2px 2px"></div>
<div style="left:601px;top:239px;width:177px;height:16px;background:#a8a8a8;"></div>
<div style="left:601px;top:255px;width:177px;height:1px;background:repeating-conic-gradient(#000000 0 25%,transparent 0 50%) -1px -1px/2px 2px"></div>
<div style="left:601px;top:256px;width:177px;height:1px;background:repeating-conic-gradient(#ffffff 0 25%,transparent 0 50%) -1px 0px/2px 2px"></div>
<span style="left:598.0px;top:243px;width:180px;text-align:center;font-size:12px;font-weight:bold;color:#000;line-height:12px;letter-spacing:0.25px">XACT_XC4000E_By_Type</span>
<div style="left:601px;top:257px;width:177px;height:458px;background:#c0d8d8;"></div>
<div style="left:608px;top:284px;width:120px;height:1px;background:repeating-conic-gradient(#000000 0 25%,transparent 0 50%) 0px 0px/2px 2px"></div>
<div style="left:727px;top:264px;width:1px;height:21px;background:repeating-conic-gradient(#000000 0 25%,transparent 0 50%) -1px 0px/2px 2px"></div>
<div style="left:608px;top:264px;width:120px;height:1px;background:repeating-conic-gradient(#ffffff 0 25%,transparent 0 50%) 0px 0px/2px 2px"></div>
<div style="left:608px;top:264px;width:1px;height:21px;background:repeating-conic-gradient(#ffffff 0 25%,transparent 0 50%) 0px 0px/2px 2px"></div>
<span style="left:608.0px;top:270px;width:120px;text-align:center;font-size:12px;font-weight:bold;color:#000;line-height:12px;letter-spacing:0.3px">arithmetic</span>
<div style="left:608px;top:306px;width:120px;height:1px;background:repeating-conic-gradient(#000000 0 25%,transparent 0 50%) 0px 0px/2px 2px"></div>
<div style="left:727px;top:286px;width:1px;height:21px;background:repeating-conic-gradient(#000000 0 25%,transparent 0 50%) -1px 0px/2px 2px"></div>
<div style="left:608px;top:286px;width:120px;height:1px;background:repeating-conic-gradient(#ffffff 0 25%,transparent 0 50%) 0px 0px/2px 2px"></div>
<div style="left:608px;top:286px;width:1px;height:21px;background:repeating-conic-gradient(#ffffff 0 25%,transparent 0 50%) 0px 0px/2px 2px"></div>
<span style="left:608.0px;top:292px;width:120px;text-align:center;font-size:12px;font-weight:bold;color:#000;line-height:12px;letter-spacing:0.3px">buffer</span>
<div style="left:608px;top:328px;width:120px;height:1px;background:repeating-conic-gradient(#000000 0 25%,transparent 0 50%) 0px 0px/2px 2px"></div>
<div style="left:727px;top:308px;width:1px;height:21px;background:repeating-conic-gradient(#000000 0 25%,transparent 0 50%) -1px 0px/2px 2px"></div>
<div style="left:608px;top:308px;width:120px;height:1px;background:repeating-conic-gradient(#ffffff 0 25%,transparent 0 50%) 0px 0px/2px 2px"></div>
<div style="left:608px;top:308px;width:1px;height:21px;background:repeating-conic-gradient(#ffffff 0 25%,transparent 0 50%) 0px 0px/2px 2px"></div>
<span style="left:608.0px;top:314px;width:120px;text-align:center;font-size:12px;font-weight:bold;color:#000;line-height:12px;letter-spacing:0.3px">carry_logic</span>
<div style="left:608px;top:350px;width:120px;height:1px;background:repeating-conic-gradient(#000000 0 25%,transparent 0 50%) 0px 0px/2px 2px"></div>
<div style="left:727px;top:330px;width:1px;height:21px;background:repeating-conic-gradient(#000000 0 25%,transparent 0 50%) -1px 0px/2px 2px"></div>
<div style="left:608px;top:330px;width:120px;height:1px;background:repeating-conic-gradient(#ffffff 0 25%,transparent 0 50%) 0px 0px/2px 2px"></div>
<div style="left:608px;top:330px;width:1px;height:21px;background:repeating-conic-gradient(#ffffff 0 25%,transparent 0 50%) 0px 0px/2px 2px"></div>
<span style="left:608.0px;top:336px;width:120px;text-align:center;font-size:12px;font-weight:bold;color:#000;line-height:12px;letter-spacing:0.3px">comparator</span>
<div style="left:608px;top:372px;width:120px;height:1px;background:repeating-conic-gradient(#000000 0 25%,transparent 0 50%) 0px 0px/2px 2px"></div>
<div style="left:727px;top:352px;width:1px;height:21px;background:repeating-conic-gradient(#000000 0 25%,transparent 0 50%) -1px 0px/2px 2px"></div>
<div style="left:608px;top:352px;width:120px;height:1px;background:repeating-conic-gradient(#ffffff 0 25%,transparent 0 50%) 0px 0px/2px 2px"></div>
<div style="left:608px;top:352px;width:1px;height:21px;background:repeating-conic-gradient(#ffffff 0 25%,transparent 0 50%) 0px 0px/2px 2px"></div>
<span style="left:608.0px;top:358px;width:120px;text-align:center;font-size:12px;font-weight:bold;color:#000;line-height:12px;letter-spacing:0.3px">counter</span>
<div style="left:608px;top:394px;width:120px;height:1px;background:repeating-conic-gradient(#000000 0 25%,transparent 0 50%) 0px 0px/2px 2px"></div>
<div style="left:727px;top:374px;width:1px;height:21px;background:repeating-conic-gradient(#000000 0 25%,transparent 0 50%) -1px 0px/2px 2px"></div>
<div style="left:608px;top:374px;width:120px;height:1px;background:repeating-conic-gradient(#ffffff 0 25%,transparent 0 50%) 0px 0px/2px 2px"></div>
<div style="left:608px;top:374px;width:1px;height:21px;background:repeating-conic-gradient(#ffffff 0 25%,transparent 0 50%) 0px 0px/2px 2px"></div>
<span style="left:608.0px;top:380px;width:120px;text-align:center;font-size:12px;font-weight:bold;color:#000;line-height:12px;letter-spacing:0.3px">data_register</span>
<div style="left:608px;top:416px;width:120px;height:1px;background:repeating-conic-gradient(#000000 0 25%,transparent 0 50%) 0px 0px/2px 2px"></div>
<div style="left:727px;top:396px;width:1px;height:21px;background:repeating-conic-gradient(#000000 0 25%,transparent 0 50%) -1px 0px/2px 2px"></div>
<div style="left:608px;top:396px;width:120px;height:1px;background:repeating-conic-gradient(#ffffff 0 25%,transparent 0 50%) 0px 0px/2px 2px"></div>
<div style="left:608px;top:396px;width:1px;height:21px;background:repeating-conic-gradient(#ffffff 0 25%,transparent 0 50%) 0px 0px/2px 2px"></div>
<span style="left:608.0px;top:402px;width:120px;text-align:center;font-size:12px;font-weight:bold;color:#000;line-height:12px;letter-spacing:0.3px">decoder</span>
<div style="left:608px;top:438px;width:120px;height:1px;background:repeating-conic-gradient(#000000 0 25%,transparent 0 50%) 0px 0px/2px 2px"></div>
<div style="left:727px;top:418px;width:1px;height:21px;background:repeating-conic-gradient(#000000 0 25%,transparent 0 50%) -1px 0px/2px 2px"></div>
<div style="left:608px;top:418px;width:120px;height:1px;background:repeating-conic-gradient(#ffffff 0 25%,transparent 0 50%) 0px 0px/2px 2px"></div>
<div style="left:608px;top:418px;width:1px;height:21px;background:repeating-conic-gradient(#ffffff 0 25%,transparent 0 50%) 0px 0px/2px 2px"></div>
<span style="left:608.0px;top:424px;width:120px;text-align:center;font-size:12px;font-weight:bold;color:#000;line-height:12px;letter-spacing:0.3px">edge_decoder</span>
<div style="left:608px;top:460px;width:120px;height:1px;background:repeating-conic-gradient(#000000 0 25%,transparent 0 50%) 0px 0px/2px 2px"></div>
<div style="left:727px;top:440px;width:1px;height:21px;background:repeating-conic-gradient(#000000 0 25%,transparent 0 50%) -1px 0px/2px 2px"></div>
<div style="left:608px;top:440px;width:120px;height:1px;background:repeating-conic-gradient(#ffffff 0 25%,transparent 0 50%) 0px 0px/2px 2px"></div>
<div style="left:608px;top:440px;width:1px;height:21px;background:repeating-conic-gradient(#ffffff 0 25%,transparent 0 50%) 0px 0px/2px 2px"></div>
<span style="left:608.0px;top:446px;width:120px;text-align:center;font-size:12px;font-weight:bold;color:#000;line-height:12px;letter-spacing:0.3px">encoder</span>
<div style="left:608px;top:482px;width:120px;height:1px;background:repeating-conic-gradient(#000000 0 25%,transparent 0 50%) 0px 0px/2px 2px"></div>
<div style="left:727px;top:462px;width:1px;height:21px;background:repeating-conic-gradient(#000000 0 25%,transparent 0 50%) -1px 0px/2px 2px"></div>
<div style="left:608px;top:462px;width:120px;height:1px;background:repeating-conic-gradient(#ffffff 0 25%,transparent 0 50%) 0px 0px/2px 2px"></div>
<div style="left:608px;top:462px;width:1px;height:21px;background:repeating-conic-gradient(#ffffff 0 25%,transparent 0 50%) 0px 0px/2px 2px"></div>
<span style="left:608.0px;top:468px;width:120px;text-align:center;font-size:12px;font-weight:bold;color:#000;line-height:12px;letter-spacing:0.3px">flip_flop</span>
<div style="left:608px;top:504px;width:120px;height:1px;background:repeating-conic-gradient(#000000 0 25%,transparent 0 50%) 0px 0px/2px 2px"></div>
<div style="left:727px;top:484px;width:1px;height:21px;background:repeating-conic-gradient(#000000 0 25%,transparent 0 50%) -1px 0px/2px 2px"></div>
<div style="left:608px;top:484px;width:120px;height:1px;background:repeating-conic-gradient(#ffffff 0 25%,transparent 0 50%) 0px 0px/2px 2px"></div>
<div style="left:608px;top:484px;width:1px;height:21px;background:repeating-conic-gradient(#ffffff 0 25%,transparent 0 50%) 0px 0px/2px 2px"></div>
<span style="left:608.0px;top:490px;width:120px;text-align:center;font-size:12px;font-weight:bold;color:#000;line-height:12px;letter-spacing:0.3px">general</span>
<div style="left:608px;top:526px;width:120px;height:1px;background:repeating-conic-gradient(#000000 0 25%,transparent 0 50%) 0px 0px/2px 2px"></div>
<div style="left:727px;top:506px;width:1px;height:21px;background:repeating-conic-gradient(#000000 0 25%,transparent 0 50%) -1px 0px/2px 2px"></div>
<div style="left:608px;top:506px;width:120px;height:1px;background:repeating-conic-gradient(#ffffff 0 25%,transparent 0 50%) 0px 0px/2px 2px"></div>
<div style="left:608px;top:506px;width:1px;height:21px;background:repeating-conic-gradient(#ffffff 0 25%,transparent 0 50%) 0px 0px/2px 2px"></div>
<span style="left:608.0px;top:512px;width:120px;text-align:center;font-size:12px;font-weight:bold;color:#000;line-height:12px;letter-spacing:0.3px">io</span>
<div style="left:608px;top:548px;width:120px;height:1px;background:repeating-conic-gradient(#000000 0 25%,transparent 0 50%) 0px 0px/2px 2px"></div>
<div style="left:727px;top:528px;width:1px;height:21px;background:repeating-conic-gradient(#000000 0 25%,transparent 0 50%) -1px 0px/2px 2px"></div>
<div style="left:608px;top:528px;width:120px;height:1px;background:repeating-conic-gradient(#ffffff 0 25%,transparent 0 50%) 0px 0px/2px 2px"></div>
<div style="left:608px;top:528px;width:1px;height:21px;background:repeating-conic-gradient(#ffffff 0 25%,transparent 0 50%) 0px 0px/2px 2px"></div>
<span style="left:608.0px;top:534px;width:120px;text-align:center;font-size:12px;font-weight:bold;color:#000;line-height:12px;letter-spacing:0.3px">io_flip_flop</span>
<div style="left:608px;top:570px;width:120px;height:1px;background:repeating-conic-gradient(#000000 0 25%,transparent 0 50%) 0px 0px/2px 2px"></div>
<div style="left:727px;top:550px;width:1px;height:21px;background:repeating-conic-gradient(#000000 0 25%,transparent 0 50%) -1px 0px/2px 2px"></div>
<div style="left:608px;top:550px;width:120px;height:1px;background:repeating-conic-gradient(#ffffff 0 25%,transparent 0 50%) 0px 0px/2px 2px"></div>
<div style="left:608px;top:550px;width:1px;height:21px;background:repeating-conic-gradient(#ffffff 0 25%,transparent 0 50%) 0px 0px/2px 2px"></div>
<span style="left:608.0px;top:556px;width:120px;text-align:center;font-size:12px;font-weight:bold;color:#000;line-height:12px;letter-spacing:0.3px">io_latch</span>
<div style="left:608px;top:592px;width:120px;height:1px;background:repeating-conic-gradient(#000000 0 25%,transparent 0 50%) 0px 0px/2px 2px"></div>
<div style="left:727px;top:572px;width:1px;height:21px;background:repeating-conic-gradient(#000000 0 25%,transparent 0 50%) -1px 0px/2px 2px"></div>
<div style="left:608px;top:572px;width:120px;height:1px;background:repeating-conic-gradient(#ffffff 0 25%,transparent 0 50%) 0px 0px/2px 2px"></div>
<div style="left:608px;top:572px;width:1px;height:21px;background:repeating-conic-gradient(#ffffff 0 25%,transparent 0 50%) 0px 0px/2px 2px"></div>
<span style="left:608.0px;top:578px;width:120px;text-align:center;font-size:12px;font-weight:bold;color:#000;line-height:12px;letter-spacing:0.3px">logic</span>
<div style="left:608px;top:614px;width:120px;height:1px;background:repeating-conic-gradient(#000000 0 25%,transparent 0 50%) 0px 0px/2px 2px"></div>
<div style="left:727px;top:594px;width:1px;height:21px;background:repeating-conic-gradient(#000000 0 25%,transparent 0 50%) -1px 0px/2px 2px"></div>
<div style="left:608px;top:594px;width:120px;height:1px;background:repeating-conic-gradient(#ffffff 0 25%,transparent 0 50%) 0px 0px/2px 2px"></div>
<div style="left:608px;top:594px;width:1px;height:21px;background:repeating-conic-gradient(#ffffff 0 25%,transparent 0 50%) 0px 0px/2px 2px"></div>
<span style="left:608.0px;top:600px;width:120px;text-align:center;font-size:12px;font-weight:bold;color:#000;line-height:12px;letter-spacing:0.3px">map</span>
<div style="left:608px;top:636px;width:120px;height:1px;background:repeating-conic-gradient(#000000 0 25%,transparent 0 50%) 0px 0px/2px 2px"></div>
<div style="left:727px;top:616px;width:1px;height:21px;background:repeating-conic-gradient(#000000 0 25%,transparent 0 50%) -1px 0px/2px 2px"></div>
<div style="left:608px;top:616px;width:120px;height:1px;background:repeating-conic-gradient(#ffffff 0 25%,transparent 0 50%) 0px 0px/2px 2px"></div>
<div style="left:608px;top:616px;width:1px;height:21px;background:repeating-conic-gradient(#ffffff 0 25%,transparent 0 50%) 0px 0px/2px 2px"></div>
<span style="left:608.0px;top:622px;width:120px;text-align:center;font-size:12px;font-weight:bold;color:#000;line-height:12px;letter-spacing:0.3px">memory</span>
<div style="left:608px;top:658px;width:120px;height:1px;background:repeating-conic-gradient(#000000 0 25%,transparent 0 50%) 0px 0px/2px 2px"></div>
<div style="left:727px;top:638px;width:1px;height:21px;background:repeating-conic-gradient(#000000 0 25%,transparent 0 50%) -1px 0px/2px 2px"></div>
<div style="left:608px;top:638px;width:120px;height:1px;background:repeating-conic-gradient(#ffffff 0 25%,transparent 0 50%) 0px 0px/2px 2px"></div>
<div style="left:608px;top:638px;width:1px;height:21px;background:repeating-conic-gradient(#ffffff 0 25%,transparent 0 50%) 0px 0px/2px 2px"></div>
<span style="left:608.0px;top:644px;width:120px;text-align:center;font-size:12px;font-weight:bold;color:#000;line-height:12px;letter-spacing:0.3px">mux</span>
<div style="left:608px;top:680px;width:120px;height:1px;background:repeating-conic-gradient(#000000 0 25%,transparent 0 50%) 0px 0px/2px 2px"></div>
<div style="left:727px;top:660px;width:1px;height:21px;background:repeating-conic-gradient(#000000 0 25%,transparent 0 50%) -1px 0px/2px 2px"></div>
<div style="left:608px;top:660px;width:120px;height:1px;background:repeating-conic-gradient(#ffffff 0 25%,transparent 0 50%) 0px 0px/2px 2px"></div>
<div style="left:608px;top:660px;width:1px;height:21px;background:repeating-conic-gradient(#ffffff 0 25%,transparent 0 50%) 0px 0px/2px 2px"></div>
<span style="left:608.0px;top:666px;width:120px;text-align:center;font-size:12px;font-weight:bold;color:#000;line-height:12px;letter-spacing:0.3px">shift_register</span>
<div style="left:608px;top:702px;width:120px;height:1px;background:repeating-conic-gradient(#000000 0 25%,transparent 0 50%) 0px 0px/2px 2px"></div>
<div style="left:727px;top:682px;width:1px;height:21px;background:repeating-conic-gradient(#000000 0 25%,transparent 0 50%) -1px 0px/2px 2px"></div>
<div style="left:608px;top:682px;width:120px;height:1px;background:repeating-conic-gradient(#ffffff 0 25%,transparent 0 50%) 0px 0px/2px 2px"></div>
<div style="left:608px;top:682px;width:1px;height:21px;background:repeating-conic-gradient(#ffffff 0 25%,transparent 0 50%) 0px 0px/2px 2px"></div>
<span style="left:608.0px;top:688px;width:120px;text-align:center;font-size:12px;font-weight:bold;color:#000;line-height:12px;letter-spacing:0.3px">shifter</span>
<svg style="left:0;top:0" width="798" height="829"><path d="M734.5 280V269.5L744.5 274.5" fill="none" stroke="#fff"/><path d="M735 280.5L744.5 275" fill="none" stroke="#000"/><path d="M734.5 302V291.5L744.5 296.5" fill="none" stroke="#fff"/><path d="M735 302.5L744.5 297" fill="none" stroke="#000"/><path d="M734.5 324V313.5L744.5 318.5" fill="none" stroke="#fff"/><path d="M735 324.5L744.5 319" fill="none" stroke="#000"/><path d="M734.5 346V335.5L744.5 340.5" fill="none" stroke="#fff"/><path d="M735 346.5L744.5 341" fill="none" stroke="#000"/><path d="M734.5 368V357.5L744.5 362.5" fill="none" stroke="#fff"/><path d="M735 368.5L744.5 363" fill="none" stroke="#000"/><path d="M734.5 390V379.5L744.5 384.5" fill="none" stroke="#fff"/><path d="M735 390.5L744.5 385" fill="none" stroke="#000"/><path d="M734.5 412V401.5L744.5 406.5" fill="none" stroke="#fff"/><path d="M735 412.5L744.5 407" fill="none" stroke="#000"/><path d="M734.5 434V423.5L744.5 428.5" fill="none" stroke="#fff"/><path d="M735 434.5L744.5 429" fill="none" stroke="#000"/><path d="M734.5 456V445.5L744.5 450.5" fill="none" stroke="#fff"/><path d="M735 456.5L744.5 451" fill="none" stroke="#000"/><path d="M734.5 478V467.5L744.5 472.5" fill="none" stroke="#fff"/><path d="M735 478.5L744.5 473" fill="none" stroke="#000"/><path d="M734.5 500V489.5L744.5 494.5" fill="none" stroke="#fff"/><path d="M735 500.5L744.5 495" fill="none" stroke="#000"/><path d="M734.5 522V511.5L744.5 516.5" fill="none" stroke="#fff"/><path d="M735 522.5L744.5 517" fill="none" stroke="#000"/><path d="M734.5 544V533.5L744.5 538.5" fill="none" stroke="#fff"/><path d="M735 544.5L744.5 539" fill="none" stroke="#000"/><path d="M734.5 566V555.5L744.5 560.5" fill="none" stroke="#fff"/><path d="M735 566.5L744.5 561" fill="none" stroke="#000"/><path d="M734.5 588V577.5L744.5 582.5" fill="none" stroke="#fff"/><path d="M735 588.5L744.5 583" fill="none" stroke="#000"/><path d="M734.5 610V599.5L744.5 604.5" fill="none" stroke="#fff"/><path d="M735 610.5L744.5 605" fill="none" stroke="#000"/><path d="M734.5 632V621.5L744.5 626.5" fill="none" stroke="#fff"/><path d="M735 632.5L744.5 627" fill="none" stroke="#000"/><path d="M734.5 654V643.5L744.5 648.5" fill="none" stroke="#fff"/><path d="M735 654.5L744.5 649" fill="none" stroke="#000"/><path d="M734.5 676V665.5L744.5 670.5" fill="none" stroke="#fff"/><path d="M735 676.5L744.5 671" fill="none" stroke="#000"/><path d="M734.5 698V687.5L744.5 692.5" fill="none" stroke="#fff"/><path d="M735 698.5L744.5 693" fill="none" stroke="#000"/></svg>
<div style="left:607px;top:706px;width:145px;height:1px;background:#000000;"></div>
<div style="left:13px;top:723px;width:774px;height:1px;background:repeating-conic-gradient(#000000 0 25%,transparent 0 50%) -1px -1px/2px 2px"></div>
<div style="left:13px;top:724px;width:774px;height:1px;background:#d8d8d8;"></div>
<div style="left:14px;top:725px;width:62px;height:56px;background:#000000;"></div>
<div style="left:15px;top:726px;width:60px;height:54px;background:#a8a8a8;"></div>
<div style="left:15px;top:725px;width:60px;height:12px;overflow:hidden"><span style="position:absolute;left:50%;top:0;font-size:11px;line-height:11px;color:#000;transform:translateX(-50%) scaleX(0.9);-webkit-text-stroke:0.25px #000">F1</span></div>
<div style="left:15px;top:736px;width:60px;height:12px;overflow:hidden"><span style="position:absolute;left:50%;top:0;font-size:11px;line-height:11px;color:#000;transform:translateX(-50%) scaleX(0.9);-webkit-text-stroke:0.25px #000">Select Area Any</span></div>
<div style="left:15px;top:747px;width:60px;height:12px;overflow:hidden"><span style="position:absolute;left:50%;top:0;font-size:11px;line-height:11px;color:#000;transform:translateX(-50%) scaleX(0.9);-webkit-text-stroke:0.25px #000">Select Vertex</span></div>
<div style="left:15px;top:758px;width:60px;height:12px;overflow:hidden"><span style="position:absolute;left:50%;top:0;font-size:11px;line-height:11px;color:#000;transform:translateX(-50%) scaleX(0.98);-webkit-text-stroke:0.25px #000">Reopen Select</span></div>
<div style="left:77px;top:725px;width:62px;height:56px;background:#000000;"></div>
<div style="left:78px;top:726px;width:60px;height:54px;background:#a8a8a8;"></div>
<div style="left:78px;top:725px;width:60px;height:12px;overflow:hidden"><span style="position:absolute;left:50%;top:0;font-size:11px;line-height:11px;color:#000;transform:translateX(-50%) scaleX(0.9);-webkit-text-stroke:0.25px #000">F2</span></div>
<div style="left:78px;top:736px;width:60px;height:12px;overflow:hidden"><span style="position:absolute;left:50%;top:0;font-size:11px;line-height:11px;color:#000;transform:translateX(-50%) scaleX(0.9);-webkit-text-stroke:0.25px #000">Unselect All</span></div>
<div style="left:78px;top:747px;width:60px;height:12px;overflow:hidden"><span style="position:absolute;left:50%;top:0;font-size:11px;line-height:11px;color:#000;transform:translateX(-50%) scaleX(0.9);-webkit-text-stroke:0.25px #000">Unselect Area</span></div>
<div style="left:78px;top:758px;width:60px;height:12px;overflow:hidden"><span style="position:absolute;left:50%;top:0;font-size:11px;line-height:11px;color:#000;transform:translateX(-50%) scaleX(0.9);-webkit-text-stroke:0.25px #000">Move</span></div>
<div style="left:140px;top:725px;width:62px;height:56px;background:#000000;"></div>
<div style="left:141px;top:726px;width:60px;height:54px;background:#a8a8a8;"></div>
<div style="left:141px;top:725px;width:60px;height:12px;overflow:hidden"><span style="position:absolute;left:50%;top:0;font-size:11px;line-height:11px;color:#000;transform:translateX(-50%) scaleX(0.9);-webkit-text-stroke:0.25px #000">F3</span></div>
<div style="left:141px;top:736px;width:60px;height:12px;overflow:hidden"><span style="position:absolute;left:50%;top:0;font-size:11px;line-height:11px;color:#000;transform:translateX(-50%) scaleX(0.9);-webkit-text-stroke:0.25px #000">Add Wire</span></div>
<div style="left:141px;top:747px;width:60px;height:12px;overflow:hidden"><span style="position:absolute;left:50%;top:0;font-size:11px;line-height:11px;color:#000;transform:translateX(-50%) scaleX(0.9);-webkit-text-stroke:0.25px #000">Add Bus/Bundle</span></div>
<div style="left:141px;top:758px;width:60px;height:12px;overflow:hidden"><span style="position:absolute;left:50%;top:0;font-size:11px;line-height:11px;color:#000;transform:translateX(-50%) scaleX(0.9);-webkit-text-stroke:0.25px #000">Copy</span></div>
<div style="left:203px;top:725px;width:63px;height:56px;background:#000000;"></div>
<div style="left:204px;top:726px;width:61px;height:54px;background:#a8a8a8;"></div>
<div style="left:204px;top:725px;width:61px;height:12px;overflow:hidden"><span style="position:absolute;left:50%;top:0;font-size:11px;line-height:11px;color:#000;transform:translateX(-50%) scaleX(0.9);-webkit-text-stroke:0.25px #000">F4</span></div>
<div style="left:204px;top:736px;width:61px;height:12px;overflow:hidden"><span style="position:absolute;left:50%;top:0;font-size:11px;line-height:11px;color:#000;transform:translateX(-50%) scaleX(0.9);-webkit-text-stroke:0.25px #000">Popup Menu</span></div>
<div style="left:204px;top:758px;width:61px;height:12px;overflow:hidden"><span style="position:absolute;left:50%;top:0;font-size:11px;line-height:11px;color:#000;transform:translateX(-50%) scaleX(0.9);-webkit-text-stroke:0.25px #000">Reselect</span></div>
<div style="left:267px;top:725px;width:63px;height:56px;background:#000000;"></div>
<div style="left:268px;top:726px;width:61px;height:54px;background:#a8a8a8;"></div>
<div style="left:268px;top:725px;width:61px;height:12px;overflow:hidden"><span style="position:absolute;left:50%;top:0;font-size:11px;line-height:11px;color:#000;transform:translateX(-50%) scaleX(0.9);-webkit-text-stroke:0.25px #000">F5</span></div>
<div style="left:268px;top:736px;width:61px;height:12px;overflow:hidden"><span style="position:absolute;left:50%;top:0;font-size:11px;line-height:11px;color:#000;transform:translateX(-50%) scaleX(0.9);-webkit-text-stroke:0.25px #000">Place Symbol</span></div>
<div style="left:268px;top:747px;width:61px;height:12px;overflow:hidden"><span style="position:absolute;left:50%;top:0;font-size:11px;line-height:11px;color:#000;transform:translateX(-50%) scaleX(0.9);-webkit-text-stroke:0.25px #000">Add Property</span></div>
<div style="left:268px;top:758px;width:61px;height:12px;overflow:hidden"><span style="position:absolute;left:50%;top:0;font-size:11px;line-height:11px;color:#000;transform:translateX(-50%) scaleX(0.9);-webkit-text-stroke:0.25px #000">Check Sheet</span></div>
<div style="left:268px;top:769px;width:61px;height:12px;overflow:hidden"><span style="position:absolute;left:50%;top:0;font-size:11px;line-height:11px;color:#000;transform:translateX(-50%) scaleX(0.9);-webkit-text-stroke:0.25px #000">Chg All Props</span></div>
<div style="left:330px;top:725px;width:63px;height:56px;background:#000000;"></div>
<div style="left:331px;top:726px;width:61px;height:54px;background:#a8a8a8;"></div>
<div style="left:331px;top:725px;width:61px;height:12px;overflow:hidden"><span style="position:absolute;left:50%;top:0;font-size:11px;line-height:11px;color:#000;transform:translateX(-50%) scaleX(0.9);-webkit-text-stroke:0.25px #000">F6</span></div>
<div style="left:331px;top:736px;width:61px;height:12px;overflow:hidden"><span style="position:absolute;left:50%;top:0;font-size:11px;line-height:11px;color:#000;transform:translateX(-50%) scaleX(0.9);-webkit-text-stroke:0.25px #000">Set Grid Snap</span></div>
<div style="left:331px;top:747px;width:61px;height:12px;overflow:hidden"><span style="position:absolute;left:50%;top:0;font-size:11px;line-height:11px;color:#000;transform:translateX(-50%) scaleX(0.9);-webkit-text-stroke:0.25px #000">Connect All</span></div>
<div style="left:405px;top:725px;width:63px;height:56px;background:#000000;"></div>
<div style="left:406px;top:726px;width:61px;height:54px;background:#a8a8a8;"></div>
<div style="left:406px;top:725px;width:61px;height:12px;overflow:hidden"><span style="position:absolute;left:50%;top:0;font-size:11px;line-height:11px;color:#000;transform:translateX(-50%) scaleX(0.9);-webkit-text-stroke:0.25px #000">F7</span></div>
<div style="left:406px;top:736px;width:61px;height:12px;overflow:hidden"><span style="position:absolute;left:50%;top:0;font-size:11px;line-height:11px;color:#000;transform:translateX(-50%) scaleX(0.9);-webkit-text-stroke:0.25px #000">Sel Txt &amp; Move</span></div>
<div style="left:406px;top:747px;width:61px;height:12px;overflow:hidden"><span style="position:absolute;left:50%;top:0;font-size:11px;line-height:11px;color:#000;transform:translateX(-50%) scaleX(0.9);-webkit-text-stroke:0.25px #000">Chg Text Value</span></div>
<div style="left:406px;top:758px;width:61px;height:12px;overflow:hidden"><span style="position:absolute;left:50%;top:0;font-size:11px;line-height:11px;color:#000;transform:translateX(-50%) scaleX(0.9);-webkit-text-stroke:0.25px #000">Open Up</span></div>
<div style="left:406px;top:769px;width:61px;height:12px;overflow:hidden"><span style="position:absolute;left:50%;top:0;font-size:11px;line-height:11px;color:#000;transform:translateX(-50%) scaleX(0.9);-webkit-text-stroke:0.25px #000">Display Names</span></div>
<div style="left:468px;top:725px;width:63px;height:56px;background:#000000;"></div>
<div style="left:469px;top:726px;width:61px;height:54px;background:#a8a8a8;"></div>
<div style="left:469px;top:725px;width:61px;height:12px;overflow:hidden"><span style="position:absolute;left:50%;top:0;font-size:11px;line-height:11px;color:#000;transform:translateX(-50%) scaleX(0.9);-webkit-text-stroke:0.25px #000">F8</span></div>
<div style="left:469px;top:736px;width:61px;height:12px;overflow:hidden"><span style="position:absolute;left:50%;top:0;font-size:11px;line-height:11px;color:#000;transform:translateX(-50%) scaleX(0.9);-webkit-text-stroke:0.25px #000">View Area</span></div>
<div style="left:469px;top:747px;width:61px;height:12px;overflow:hidden"><span style="position:absolute;left:50%;top:0;font-size:11px;line-height:11px;color:#000;transform:translateX(-50%) scaleX(0.9);-webkit-text-stroke:0.25px #000">View All</span></div>
<div style="left:469px;top:758px;width:61px;height:12px;overflow:hidden"><span style="position:absolute;left:50%;top:0;font-size:11px;line-height:11px;color:#000;transform:translateX(-50%) scaleX(0.9);-webkit-text-stroke:0.25px #000">Open Down</span></div>
<div style="left:469px;top:769px;width:61px;height:12px;overflow:hidden"><span style="position:absolute;left:50%;top:0;font-size:11px;line-height:11px;color:#000;transform:translateX(-50%) scaleX(0.9);-webkit-text-stroke:0.25px #000">Display Props</span></div>
<div style="left:532px;top:725px;width:63px;height:56px;background:#000000;"></div>
<div style="left:533px;top:726px;width:61px;height:54px;background:#a8a8a8;"></div>
<div style="left:533px;top:725px;width:61px;height:12px;overflow:hidden"><span style="position:absolute;left:50%;top:0;font-size:11px;line-height:11px;color:#000;transform:translateX(-50%) scaleX(0.9);-webkit-text-stroke:0.25px #000">F9</span></div>
<div style="left:533px;top:747px;width:61px;height:12px;overflow:hidden"><span style="position:absolute;left:50%;top:0;font-size:11px;line-height:11px;color:#000;transform:translateX(-50%) scaleX(0.9);-webkit-text-stroke:0.25px #000">Create Bdry Map</span></div>
<div style="left:533px;top:758px;width:61px;height:12px;overflow:hidden"><span style="position:absolute;left:50%;top:0;font-size:11px;line-height:11px;color:#000;transform:translateX(-50%) scaleX(0.9);-webkit-text-stroke:0.25px #000">Create Bdry Mod</span></div>
<div style="left:533px;top:769px;width:61px;height:12px;overflow:hidden"><span style="position:absolute;left:50%;top:0;font-size:11px;line-height:11px;color:#000;transform:translateX(-50%) scaleX(0.9);-webkit-text-stroke:0.25px #000">Hide Props</span></div>
<div style="left:595px;top:725px;width:63px;height:56px;background:#000000;"></div>
<div style="left:596px;top:726px;width:61px;height:54px;background:#a8a8a8;"></div>
<div style="left:596px;top:725px;width:61px;height:12px;overflow:hidden"><span style="position:absolute;left:50%;top:0;font-size:11px;line-height:11px;color:#000;transform:translateX(-50%) scaleX(0.9);-webkit-text-stroke:0.25px #000">F10</span></div>
<div style="left:596px;top:736px;width:61px;height:12px;overflow:hidden"><span style="position:absolute;left:50%;top:0;font-size:11px;line-height:11px;color:#000;transform:translateX(-50%) scaleX(0.9);-webkit-text-stroke:0.25px #000">Pulldown Menu</span></div>
<div style="left:658px;top:725px;width:63px;height:56px;background:#000000;"></div>
<div style="left:659px;top:726px;width:61px;height:54px;background:#a8a8a8;"></div>
<div style="left:659px;top:725px;width:61px;height:12px;overflow:hidden"><span style="position:absolute;left:50%;top:0;font-size:11px;line-height:11px;color:#000;transform:translateX(-50%) scaleX(0.9);-webkit-text-stroke:0.25px #000">F11</span></div>
<div style="left:659px;top:736px;width:61px;height:12px;overflow:hidden"><span style="position:absolute;left:50%;top:0;font-size:11px;line-height:11px;color:#000;transform:translateX(-50%) scaleX(0.9);-webkit-text-stroke:0.25px #000">Read File</span></div>
<div style="left:659px;top:747px;width:61px;height:12px;overflow:hidden"><span style="position:absolute;left:50%;top:0;font-size:11px;line-height:11px;color:#000;transform:translateX(-50%) scaleX(0.9);-webkit-text-stroke:0.25px #000">Edit File</span></div>
<div style="left:721px;top:725px;width:64px;height:56px;background:#000000;"></div>
<div style="left:722px;top:726px;width:62px;height:54px;background:#a8a8a8;"></div>
<div style="left:722px;top:725px;width:62px;height:12px;overflow:hidden"><span style="position:absolute;left:50%;top:0;font-size:11px;line-height:11px;color:#000;transform:translateX(-50%) scaleX(0.9);-webkit-text-stroke:0.25px #000">F12</span></div>
<div style="left:722px;top:736px;width:62px;height:12px;overflow:hidden"><span style="position:absolute;left:50%;top:0;font-size:11px;line-height:11px;color:#000;transform:translateX(-50%) scaleX(0.9);-webkit-text-stroke:0.25px #000">Pop Window</span></div>
<div style="left:722px;top:747px;width:62px;height:12px;overflow:hidden"><span style="position:absolute;left:50%;top:0;font-size:11px;line-height:11px;color:#000;transform:translateX(-50%) scaleX(0.9);-webkit-text-stroke:0.25px #000">Close Window</span></div>
<span style="left:397px;top:747px;font-size:11px;font-weight:normal;color:#000;line-height:11px;line-height:12px;-webkit-text-stroke:0.25px #000">s</span>
<span style="left:397px;top:758px;font-size:11px;font-weight:normal;color:#000;line-height:11px;line-height:12px;-webkit-text-stroke:0.25px #000">c</span>
<span style="left:397px;top:769px;font-size:11px;font-weight:normal;color:#000;line-height:11px;line-height:12px;-webkit-text-stroke:0.25px #000">a</span>
<div style="left:13px;top:781px;width:774px;height:1px;background:repeating-conic-gradient(#000000 0 25%,transparent 0 50%) -1px -1px/2px 2px"></div>
<div style="left:13px;top:782px;width:774px;height:1px;background:repeating-conic-gradient(#ffffff 0 25%,transparent 0 50%) -1px 0px/2px 2px"></div>
<svg style="left:0;top:0" width="798" height="829" shape-rendering="crispEdges"><defs><clipPath id="clipL"><rect x="16" y="103" width="12" height="600"/></clipPath><clipPath id="clipI"><rect x="32" y="175" width="530" height="501"/></clipPath></defs><g clip-path="url(#clipL)"><path d="M32.5 626.5L32.5 625.5L29.5 622.5L23.5 622.5L20.5 625.5L20.5 628.5L22.5 630.5L30.5 630.5L32.5 632.5L32.5 635.5L29.5 638.5L23.5 638.5L20.5 635.5L20.5 634.5" fill="none" stroke="#f8c830" stroke-width="1" stroke-linecap="square"/><path d="M32.5 660.5L32.5 659.5L29.5 656.5L23.5 656.5L20.5 659.5L20.5 662.5L22.5 664.5L30.5 664.5L32.5 666.5L32.5 669.5L29.5 672.5L23.5 672.5L20.5 669.5L20.5 668.5" fill="none" stroke="#f8c830" stroke-width="1" stroke-linecap="square"/></g><g clip-path="url(#clipI)"><path d="M225.5 205.5L421.5 205.5" fill="none" stroke="#f8c830" stroke-width="1"/><path d="M225.5 205.5L225.5 378.5" fill="none" stroke="#f8c830" stroke-width="1"/><path d="M225.5 251.5L249.5 251.5" fill="none" stroke="#f8c830" stroke-width="1"/><path d="M249.5 251.5L265.5 251.5" fill="none" stroke="#00ffff" stroke-width="1"/><path d="M202.5 425.5L226.5 425.5" fill="none" stroke="#f8c830" stroke-width="1"/><path d="M202.5 448.5L226.5 448.5" fill="none" stroke="#f8c830" stroke-width="1"/><path d="M202.5 482.5L226.5 482.5" fill="none" stroke="#f8c830" stroke-width="1"/><path d="M226.5 425.5L248.5 425.5" fill="none" stroke="#00ffff" stroke-width="1"/><path d="M226.5 448.5L248.5 448.5" fill="none" stroke="#00ffff" stroke-width="1"/><path d="M226.5 482.5L295.5 482.5L295.5 471.5" fill="none" stroke="#00ffff" stroke-width="1"/><path d="M225.5 378.5L248.5 378.5" fill="none" stroke="#00ffff" stroke-width="1"/><path d="M318.5 240.5L340.5 240.5" fill="none" stroke="#00ffff" stroke-width="1"/><path d="M340.5 240.5L386.5 240.5" fill="none" stroke="#f8c830" stroke-width="1"/><path d="M317.5 263.5L340.5 263.5" fill="none" stroke="#00ffff" stroke-width="1"/><path d="M340.5 263.5L386.5 263.5" fill="none" stroke="#f8c830" stroke-width="1"/><path d="M386.5 240.5L393.5 233.5" fill="none" stroke="#f8c830" stroke-width="1"/><path d="M392 234L398 228" stroke="#f8c830" stroke-width="3" fill="none"/><path d="M386.5 263.5L393.5 256.5" fill="none" stroke="#f8c830" stroke-width="1"/><path d="M392 257L398 251" stroke="#f8c830" stroke-width="3" fill="none"/><rect x="397" y="228" width="3" height="175" fill="#f8c830"/><rect x="363" y="400" width="37" height="3" fill="#f8c830"/><rect x="396" y="249" width="7" height="7" fill="#f8c830"/><rect x="223" y="248" width="7" height="7" fill="#f8c830"/><rect x="341" y="398" width="22" height="6" fill="#00ffff"/><path d="M421.5 200.5L435.5 200.5L444.5 205.5L434.5 211.5L421.5 211.5Z" fill="none" stroke="#00ffff" stroke-width="1"/><path d="M179.5 419.5L192.5 419.5L202.5 425.5L192.5 430.5L179.5 430.5Z" fill="none" stroke="#00ffff" stroke-width="1"/><path d="M179.5 442.5L192.5 442.5L202.5 448.5L192.5 453.5L179.5 453.5Z" fill="none" stroke="#00ffff" stroke-width="1"/><path d="M179.5 476.5L192.5 476.5L202.5 482.5L192.5 487.5L179.5 487.5Z" fill="none" stroke="#00ffff" stroke-width="1"/><rect x="248.5" y="355.5" width="92" height="116" fill="none" stroke="#00ffff"/><path d="M248.5 443.5L254.5 448.5L248.5 453.5" fill="none" stroke="#00ffff" stroke-width="1"/><path d="M222.5 197.5L229.5 197.5L226.5 205.5L225.5 205.5Z" fill="none" stroke="#fff" stroke-width="1"/><path d="M225.5 205.5L226.5 205.5L229.5 213.5L222.5 213.5Z" fill="none" stroke="#fff" stroke-width="1"/><g transform="translate(265.5,251.5) scale(-0.545,0.53) translate(-742,-130)"><path d="M644 97.5L699 97.5A44.7 44.7 0 0 1 742 130A47.4 47.4 0 0 1 697 162.5L645 162.5M644 97.5Q680.5 130 645 162.5M631 98Q670.5 130 634 164" fill="none" stroke="#00ffff" stroke-width="1" vector-effect="non-scaling-stroke"/></g><path d="M265.5 335.5L265.5 334.5L262.5 330.5L256.5 330.5L253.5 334.5L253.5 338.5L255.5 341.5L262.5 341.5L265.5 344.5L265.5 348.5L262.5 352.5L256.5 352.5L253.5 348.5L253.5 346.5M271.5 352.5L271.5 330.5L280.5 330.5L283.5 334.5L283.5 338.5L280.5 341.5L271.5 341.5M272.5 341.5L283.5 352.5M295.5 341.5L301.5 337.5L301.5 334.5L298.5 330.5L292.5 330.5L289.5 334.5L289.5 337.5L301.5 344.5L301.5 348.5L298.5 352.5L292.5 352.5L289.5 348.5L289.5 344.5ZM319.5 335.5L319.5 334.5L316.5 330.5L310.5 330.5L307.5 334.5L307.5 348.5L310.5 352.5L316.5 352.5L319.5 348.5L319.5 346.5M337.5 330.5L325.5 330.5L325.5 352.5L337.5 352.5M325.5 341.5L335.5 341.5" fill="none" stroke="#00ffff" stroke-width="1" stroke-linecap="square"/><path d="M298.5 276.5L301.5 281.5L301.5 281.5L304.5 286.5M304.5 276.5L301.5 281.5M301.5 281.5L298.5 286.5M308.5 276.5L310.5 276.5L312.5 278.5L312.5 284.5L310.5 286.5L308.5 286.5L306.5 284.5L306.5 278.5ZM315.5 286.5L315.5 276.5L319.5 276.5L321.5 278.5L321.5 280.5L320.5 281.5L315.5 281.5M316.5 281.5L321.5 286.5M323.5 278.5L325.5 276.5L327.5 276.5L329.5 278.5L329.5 279.5L323.5 285.5L323.5 286.5L329.5 286.5" fill="none" stroke="#00ffff" stroke-width="1" stroke-linecap="square"/><path d="M260.5 375.5L260.5 375.5L258.5 373.5L256.5 373.5L254.5 375.5L254.5 377.5L255.5 378.5L259.5 378.5L260.5 379.5L260.5 381.5L258.5 383.5L256.5 383.5L254.5 381.5L254.5 381.5M262.5 373.5L262.5 383.5L268.5 383.5M272.5 373.5L276.5 373.5M274.5 373.5L274.5 383.5M272.5 383.5L276.5 383.5" fill="none" stroke="#ff00ff" stroke-width="1" stroke-linecap="square"/><path d="M290.5 396.5L292.5 396.5L294.5 398.5L294.5 406.5L290.5 406.5L288.5 404.5L288.5 398.5ZM291.5 404.5L292.5 405.5M300.5 396.5L297.5 399.5L297.5 403.5L300.5 406.5M304.5 396.5L310.5 396.5L310.5 398.5L307.5 404.5L307.5 406.5M316.5 399.5L316.5 400.5M316.5 404.5L316.5 405.5M323.5 396.5L325.5 396.5L327.5 398.5L327.5 404.5L325.5 406.5L323.5 406.5L321.5 404.5L321.5 398.5ZM324.5 400.5L324.5 402.5M331.5 396.5L334.5 399.5L334.5 403.5L331.5 406.5" fill="none" stroke="#ff00ff" stroke-width="1" stroke-linecap="square"/><path d="M260.5 422.5L260.5 422.5L258.5 420.5L256.5 420.5L254.5 422.5L254.5 428.5L256.5 429.5L258.5 429.5L260.5 428.5L260.5 427.5M268.5 420.5L262.5 420.5L262.5 429.5L268.5 429.5M262.5 424.5L267.5 424.5" fill="none" stroke="#ff00ff" stroke-width="1" stroke-linecap="square"/><path d="M263.5 445.5L263.5 445.5L261.5 443.5L259.5 443.5L257.5 445.5L257.5 451.5L259.5 452.5L261.5 452.5L263.5 451.5L263.5 450.5" fill="none" stroke="#ff00ff" stroke-width="1" stroke-linecap="square"/><path d="M289.5 457.5L289.5 457.5L287.5 455.5L285.5 455.5L283.5 457.5L283.5 463.5L285.5 465.5L287.5 465.5L289.5 463.5L289.5 463.5M291.5 455.5L291.5 465.5L297.5 465.5M300.5 465.5L300.5 455.5L304.5 455.5L306.5 457.5L306.5 459.5L305.5 460.5L300.5 460.5M301.5 460.5L306.5 465.5" fill="none" stroke="#ff00ff" stroke-width="1" stroke-linecap="square"/><path d="M450.5 209.5L450.5 202.5L453.5 202.5L454.5 203.5L454.5 205.5L453.5 206.5L450.5 206.5M456.5 209.5L456.5 202.5L460.5 209.5L460.5 202.5" fill="none" stroke="#f8c830" stroke-width="1" stroke-linecap="square"/><path d="M142.5 422.5L138.5 422.5L138.5 429.5L142.5 429.5M138.5 426.5L142.5 426.5M144.5 429.5L144.5 422.5L148.5 429.5L148.5 422.5M150.5 429.5L150.5 428.5L151.5 427.5L151.5 424.5L152.5 422.5L153.5 424.5L153.5 427.5L154.5 428.5L154.5 429.5M151.5 427.5L153.5 427.5M157.5 422.5L160.5 422.5L161.5 423.5L161.5 425.5L160.5 426.5L157.5 426.5M160.5 426.5L161.5 426.5L161.5 428.5L160.5 429.5L157.5 429.5L157.5 422.5M163.5 422.5L163.5 429.5L167.5 429.5M173.5 422.5L169.5 422.5L169.5 429.5L173.5 429.5M169.5 426.5L173.5 426.5" fill="none" stroke="#f8c830" stroke-width="1" stroke-linecap="square"/><path d="M161.5 446.5L161.5 445.5L160.5 444.5L158.5 444.5L157.5 445.5L157.5 450.5L158.5 451.5L160.5 451.5L161.5 450.5L161.5 449.5M163.5 444.5L163.5 451.5L167.5 451.5M169.5 444.5L169.5 451.5M173.5 444.5L169.5 448.5M170.5 447.5L173.5 451.5" fill="none" stroke="#f8c830" stroke-width="1" stroke-linecap="square"/><path d="M143.5 485.5L143.5 478.5L146.5 478.5L147.5 479.5L147.5 481.5L146.5 482.5L143.5 482.5M143.5 482.5L147.5 485.5M153.5 478.5L149.5 478.5L149.5 485.5L153.5 485.5M149.5 482.5L153.5 482.5M160.5 480.5L160.5 479.5L159.5 478.5L157.5 478.5L156.5 479.5L156.5 481.5L157.5 482.5L159.5 482.5L160.5 482.5L160.5 484.5L159.5 485.5L157.5 485.5L156.5 484.5L156.5 483.5M166.5 478.5L162.5 478.5L162.5 485.5L166.5 485.5M162.5 482.5L166.5 482.5M168.5 478.5L172.5 478.5M170.5 478.5L170.5 485.5" fill="none" stroke="#f8c830" stroke-width="1" stroke-linecap="square"/><path d="M361.5 380.5L363.5 380.5L364.5 381.5L364.5 388.5L361.5 388.5L360.5 387.5L360.5 381.5ZM362.5 386.5L363.5 387.5M368.5 380.5L367.5 383.5L367.5 385.5L368.5 388.5M372.5 380.5L376.5 380.5L376.5 382.5L374.5 386.5L374.5 388.5M380.5 382.5L380.5 383.5M380.5 386.5L380.5 387.5M385.5 380.5L387.5 380.5L388.5 381.5L388.5 387.5L387.5 388.5L385.5 388.5L384.5 387.5L384.5 381.5ZM386.5 383.5L386.5 385.5M392.5 380.5L393.5 383.5L393.5 385.5L392.5 388.5" fill="none" stroke="#f8c830" stroke-width="1" stroke-linecap="square"/><path d="M373.5 235.5L375.5 235.5L375.5 236.5L375.5 239.5L373.5 239.5L373.5 238.5L373.5 236.5ZM374.5 238.5L374.5 239.5M378.5 235.5L377.5 236.5L377.5 238.5L378.5 239.5M380.5 235.5L382.5 235.5L382.5 236.5L382.5 238.5L382.5 239.5L380.5 239.5L380.5 238.5L380.5 236.5ZM381.5 237.5L381.5 237.5M385.5 235.5L386.5 236.5L386.5 238.5L385.5 239.5" fill="none" stroke="#f8c830" stroke-width="1" stroke-linecap="square"/><path d="M373.5 258.5L375.5 258.5L375.5 259.5L375.5 262.5L373.5 262.5L373.5 261.5L373.5 259.5ZM374.5 261.5L374.5 262.5M378.5 258.5L377.5 259.5L377.5 261.5L378.5 262.5M380.5 259.5L381.5 258.5L381.5 262.5M380.5 262.5L382.5 262.5M385.5 258.5L386.5 259.5L386.5 261.5L385.5 262.5" fill="none" stroke="#f8c830" stroke-width="1" stroke-linecap="square"/></g></svg>
<svg style="left:0;top:0" width="798" height="829" shape-rendering="crispEdges"><path d="M602.5 108.5L643.5 108.5" fill="none" stroke="#00ffff" stroke-width="1"/><path d="M602.5 151.5L645.5 151.5" fill="none" stroke="#00ffff" stroke-width="1"/><path d="M742.5 130.5L776.5 130.5" fill="none" stroke="#00ffff" stroke-width="1"/><path d="M644 97.5L699 97.5A44.7 44.7 0 0 1 742 130A47.4 47.4 0 0 1 697 162.5L645 162.5M644 97.5Q680.5 130 645 162.5M631 98Q670.5 130 634 164" fill="none" stroke="#00ffff" stroke-width="1"/><path d="M623.5 174.5L629.5 184.5L629.5 184.5L634.5 194.5M634.5 174.5L629.5 184.5M629.5 184.5L623.5 194.5M642.5 174.5L647.5 174.5L650.5 177.5L650.5 191.5L647.5 194.5L642.5 194.5L639.5 191.5L639.5 177.5ZM656.5 194.5L656.5 174.5L664.5 174.5L667.5 177.5L667.5 181.5L665.5 184.5L656.5 184.5M657.5 185.5L667.5 194.5M672.5 179.5L676.5 174.5L679.5 174.5L683.5 178.5L683.5 181.5L672.5 191.5L672.5 194.5L683.5 194.5" fill="none" stroke="#00ffff" stroke-width="1" stroke-linecap="square"/></svg>
</body></html>
